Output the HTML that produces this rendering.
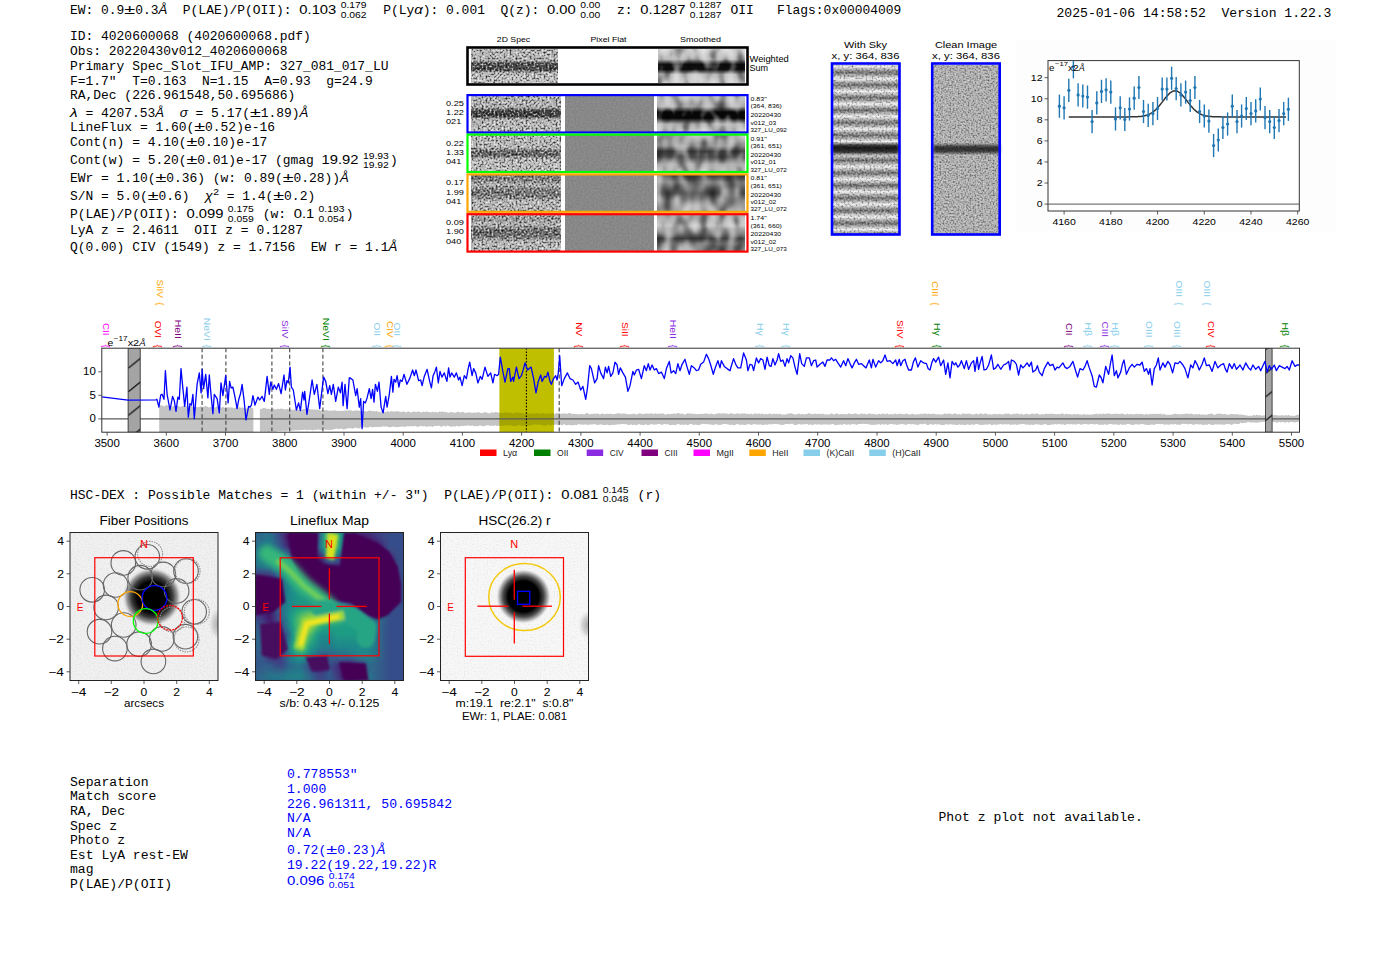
<!DOCTYPE html><html><head><meta charset="utf-8"><style>html,body{margin:0;padding:0;background:#fff;overflow:hidden}svg{position:absolute;left:0;top:0}</style></head><body>
<svg width="1400" height="953" viewBox="0 0 1400 953">
<rect width="1400" height="953" fill="#fff"/>
<text xml:space="preserve" x="70.00" y="14.00" font-family="'Liberation Mono', monospace" font-size="12.9" fill="#000" textLength="54.36" lengthAdjust="spacingAndGlyphs">EW: 0.9</text>
<text xml:space="preserve" x="124.36" y="14.00" font-family="'Liberation Sans', sans-serif" font-size="12.9" fill="#000" textLength="10.81" lengthAdjust="spacingAndGlyphs">±</text>
<text xml:space="preserve" x="135.17" y="14.00" font-family="'Liberation Mono', monospace" font-size="12.9" fill="#000" textLength="23.30" lengthAdjust="spacingAndGlyphs">0.3</text>
<text xml:space="preserve" x="158.47" y="14.00" font-family="'Liberation Sans', sans-serif" font-size="12.9" fill="#000" textLength="8.82" lengthAdjust="spacingAndGlyphs" font-style="italic">Å</text>
<text xml:space="preserve" x="167.30" y="14.00" font-family="'Liberation Mono', monospace" font-size="12.9" fill="#000" textLength="132.03" lengthAdjust="spacingAndGlyphs">  P(LAE)/P(OII): </text>
<text xml:space="preserve" x="299.33" y="14.00" font-family="'Liberation Sans', sans-serif" font-size="12.9" fill="#000" textLength="36.93" lengthAdjust="spacingAndGlyphs">0.103</text>
<text xml:space="preserve" x="340.66" y="8.40" font-family="'Liberation Sans', sans-serif" font-size="9.03" fill="#000" textLength="25.85" lengthAdjust="spacingAndGlyphs">0.179</text>
<text xml:space="preserve" x="340.66" y="17.90" font-family="'Liberation Sans', sans-serif" font-size="9.03" fill="#000" textLength="25.85" lengthAdjust="spacingAndGlyphs">0.062</text>
<text xml:space="preserve" x="367.71" y="14.00" font-family="'Liberation Mono', monospace" font-size="12.9" fill="#000" textLength="46.60" lengthAdjust="spacingAndGlyphs">  P(Ly</text>
<text xml:space="preserve" x="414.31" y="14.00" font-family="'Liberation Sans', sans-serif" font-size="12.9" fill="#000" textLength="8.50" lengthAdjust="spacingAndGlyphs" font-style="italic">α</text>
<text xml:space="preserve" x="422.81" y="14.00" font-family="'Liberation Mono', monospace" font-size="12.9" fill="#000" textLength="124.26" lengthAdjust="spacingAndGlyphs">): 0.001  Q(z): </text>
<text xml:space="preserve" x="547.07" y="14.00" font-family="'Liberation Sans', sans-serif" font-size="12.9" fill="#000" textLength="28.72" lengthAdjust="spacingAndGlyphs">0.00</text>
<text xml:space="preserve" x="580.20" y="8.40" font-family="'Liberation Sans', sans-serif" font-size="9.03" fill="#000" textLength="20.11" lengthAdjust="spacingAndGlyphs">0.00</text>
<text xml:space="preserve" x="580.20" y="17.90" font-family="'Liberation Sans', sans-serif" font-size="9.03" fill="#000" textLength="20.11" lengthAdjust="spacingAndGlyphs">0.00</text>
<text xml:space="preserve" x="601.50" y="14.00" font-family="'Liberation Mono', monospace" font-size="12.9" fill="#000" textLength="38.83" lengthAdjust="spacingAndGlyphs">  z: </text>
<text xml:space="preserve" x="640.33" y="14.00" font-family="'Liberation Sans', sans-serif" font-size="12.9" fill="#000" textLength="45.14" lengthAdjust="spacingAndGlyphs">0.1287</text>
<text xml:space="preserve" x="689.87" y="8.40" font-family="'Liberation Sans', sans-serif" font-size="9.03" fill="#000" textLength="31.60" lengthAdjust="spacingAndGlyphs">0.1287</text>
<text xml:space="preserve" x="689.87" y="17.90" font-family="'Liberation Sans', sans-serif" font-size="9.03" fill="#000" textLength="31.60" lengthAdjust="spacingAndGlyphs">0.1287</text>
<text xml:space="preserve" x="722.67" y="14.00" font-family="'Liberation Mono', monospace" font-size="12.9" fill="#000" textLength="178.63" lengthAdjust="spacingAndGlyphs"> OII   Flags:0x00004009</text>
<text xml:space="preserve" x="1056.50" y="16.80" font-family="'Liberation Mono', monospace" font-size="13.05" fill="#000" textLength="274.98" lengthAdjust="spacingAndGlyphs">2025-01-06 14:58:52  Version 1.22.3</text>
<text xml:space="preserve" x="70.00" y="40.00" font-family="'Liberation Mono', monospace" font-size="12.9" fill="#000" textLength="240.76" lengthAdjust="spacingAndGlyphs">ID: 4020600068 (4020600068.pdf)</text>
<text xml:space="preserve" x="70.00" y="54.50" font-family="'Liberation Mono', monospace" font-size="12.9" fill="#000" textLength="217.46" lengthAdjust="spacingAndGlyphs">Obs: 20220430v012_4020600068</text>
<text xml:space="preserve" x="70.00" y="69.50" font-family="'Liberation Mono', monospace" font-size="12.9" fill="#000" textLength="318.42" lengthAdjust="spacingAndGlyphs">Primary Spec_Slot_IFU_AMP: 327_081_017_LU</text>
<text xml:space="preserve" x="70.00" y="84.50" font-family="'Liberation Mono', monospace" font-size="12.9" fill="#000" textLength="302.89" lengthAdjust="spacingAndGlyphs">F=1.7"  T=0.163  N=1.15  A=0.93  g=24.9</text>
<text xml:space="preserve" x="70.00" y="99.30" font-family="'Liberation Mono', monospace" font-size="12.9" fill="#000" textLength="225.23" lengthAdjust="spacingAndGlyphs">RA,Dec (226.961548,50.695686)</text>
<text xml:space="preserve" x="70.00" y="116.50" font-family="'Liberation Sans', sans-serif" font-size="12.9" fill="#000" textLength="7.63" lengthAdjust="spacingAndGlyphs" font-style="italic">λ</text>
<text xml:space="preserve" x="77.63" y="116.50" font-family="'Liberation Mono', monospace" font-size="12.9" fill="#000" textLength="77.66" lengthAdjust="spacingAndGlyphs"> = 4207.53</text>
<text xml:space="preserve" x="155.30" y="116.50" font-family="'Liberation Sans', sans-serif" font-size="12.9" fill="#000" textLength="8.82" lengthAdjust="spacingAndGlyphs" font-style="italic">Å</text>
<text xml:space="preserve" x="179.66" y="116.50" font-family="'Liberation Sans', sans-serif" font-size="12.9" fill="#000" textLength="8.18" lengthAdjust="spacingAndGlyphs" font-style="italic">σ</text>
<text xml:space="preserve" x="187.83" y="116.50" font-family="'Liberation Mono', monospace" font-size="12.9" fill="#000" textLength="62.13" lengthAdjust="spacingAndGlyphs"> = 5.17(</text>
<text xml:space="preserve" x="249.96" y="116.50" font-family="'Liberation Sans', sans-serif" font-size="12.9" fill="#000" textLength="10.81" lengthAdjust="spacingAndGlyphs">±</text>
<text xml:space="preserve" x="260.77" y="116.50" font-family="'Liberation Mono', monospace" font-size="12.9" fill="#000" textLength="38.83" lengthAdjust="spacingAndGlyphs">1.89)</text>
<text xml:space="preserve" x="299.60" y="116.50" font-family="'Liberation Sans', sans-serif" font-size="12.9" fill="#000" textLength="8.82" lengthAdjust="spacingAndGlyphs" font-style="italic">Å</text>
<text xml:space="preserve" x="70.00" y="131.40" font-family="'Liberation Mono', monospace" font-size="12.9" fill="#000" textLength="124.26" lengthAdjust="spacingAndGlyphs">LineFlux = 1.60(</text>
<text xml:space="preserve" x="194.26" y="131.40" font-family="'Liberation Sans', sans-serif" font-size="12.9" fill="#000" textLength="10.81" lengthAdjust="spacingAndGlyphs">±</text>
<text xml:space="preserve" x="205.07" y="131.40" font-family="'Liberation Mono', monospace" font-size="12.9" fill="#000" textLength="69.90" lengthAdjust="spacingAndGlyphs">0.52)e-16</text>
<text xml:space="preserve" x="70.00" y="146.30" font-family="'Liberation Mono', monospace" font-size="12.9" fill="#000" textLength="116.50" lengthAdjust="spacingAndGlyphs">Cont(n) = 4.10(</text>
<text xml:space="preserve" x="186.50" y="146.30" font-family="'Liberation Sans', sans-serif" font-size="12.9" fill="#000" textLength="10.81" lengthAdjust="spacingAndGlyphs">±</text>
<text xml:space="preserve" x="197.30" y="146.30" font-family="'Liberation Mono', monospace" font-size="12.9" fill="#000" textLength="69.90" lengthAdjust="spacingAndGlyphs">0.10)e-17</text>
<text xml:space="preserve" x="70.00" y="164.30" font-family="'Liberation Mono', monospace" font-size="12.9" fill="#000" textLength="116.50" lengthAdjust="spacingAndGlyphs">Cont(w) = 5.20(</text>
<text xml:space="preserve" x="186.50" y="164.30" font-family="'Liberation Sans', sans-serif" font-size="12.9" fill="#000" textLength="10.81" lengthAdjust="spacingAndGlyphs">±</text>
<text xml:space="preserve" x="197.30" y="164.30" font-family="'Liberation Mono', monospace" font-size="12.9" fill="#000" textLength="124.26" lengthAdjust="spacingAndGlyphs">0.01)e-17 (gmag </text>
<text xml:space="preserve" x="321.57" y="164.30" font-family="'Liberation Sans', sans-serif" font-size="12.9" fill="#000" textLength="36.93" lengthAdjust="spacingAndGlyphs">19.92</text>
<text xml:space="preserve" x="362.90" y="158.70" font-family="'Liberation Sans', sans-serif" font-size="9.03" fill="#000" textLength="25.85" lengthAdjust="spacingAndGlyphs">19.93</text>
<text xml:space="preserve" x="362.90" y="168.20" font-family="'Liberation Sans', sans-serif" font-size="9.03" fill="#000" textLength="25.85" lengthAdjust="spacingAndGlyphs">19.92</text>
<text xml:space="preserve" x="389.95" y="164.30" font-family="'Liberation Mono', monospace" font-size="12.9" fill="#000" textLength="7.77" lengthAdjust="spacingAndGlyphs">)</text>
<text xml:space="preserve" x="70.00" y="182.30" font-family="'Liberation Mono', monospace" font-size="12.9" fill="#000" textLength="85.43" lengthAdjust="spacingAndGlyphs">EWr = 1.10(</text>
<text xml:space="preserve" x="155.43" y="182.30" font-family="'Liberation Sans', sans-serif" font-size="12.9" fill="#000" textLength="10.81" lengthAdjust="spacingAndGlyphs">±</text>
<text xml:space="preserve" x="166.24" y="182.30" font-family="'Liberation Mono', monospace" font-size="12.9" fill="#000" textLength="116.50" lengthAdjust="spacingAndGlyphs">0.36) (w: 0.89(</text>
<text xml:space="preserve" x="282.74" y="182.30" font-family="'Liberation Sans', sans-serif" font-size="12.9" fill="#000" textLength="10.81" lengthAdjust="spacingAndGlyphs">±</text>
<text xml:space="preserve" x="293.54" y="182.30" font-family="'Liberation Mono', monospace" font-size="12.9" fill="#000" textLength="46.60" lengthAdjust="spacingAndGlyphs">0.28))</text>
<text xml:space="preserve" x="340.14" y="182.30" font-family="'Liberation Sans', sans-serif" font-size="12.9" fill="#000" textLength="8.82" lengthAdjust="spacingAndGlyphs" font-style="italic">Å</text>
<text xml:space="preserve" x="70.00" y="199.80" font-family="'Liberation Mono', monospace" font-size="12.9" fill="#000" textLength="77.66" lengthAdjust="spacingAndGlyphs">S/N = 5.0(</text>
<text xml:space="preserve" x="147.66" y="199.80" font-family="'Liberation Sans', sans-serif" font-size="12.9" fill="#000" textLength="10.81" lengthAdjust="spacingAndGlyphs">±</text>
<text xml:space="preserve" x="158.47" y="199.80" font-family="'Liberation Mono', monospace" font-size="12.9" fill="#000" textLength="46.60" lengthAdjust="spacingAndGlyphs">0.6)  </text>
<text xml:space="preserve" x="205.07" y="199.80" font-family="'Liberation Sans', sans-serif" font-size="12.9" fill="#000" textLength="7.63" lengthAdjust="spacingAndGlyphs" font-style="italic">χ</text>
<text xml:space="preserve" x="213.21" y="194.60" font-family="'Liberation Sans', sans-serif" font-size="9.03" fill="#000" textLength="5.75" lengthAdjust="spacingAndGlyphs">2</text>
<text xml:space="preserve" x="218.95" y="199.80" font-family="'Liberation Mono', monospace" font-size="12.9" fill="#000" textLength="54.36" lengthAdjust="spacingAndGlyphs"> = 1.4(</text>
<text xml:space="preserve" x="273.32" y="199.80" font-family="'Liberation Sans', sans-serif" font-size="12.9" fill="#000" textLength="10.81" lengthAdjust="spacingAndGlyphs">±</text>
<text xml:space="preserve" x="284.12" y="199.80" font-family="'Liberation Mono', monospace" font-size="12.9" fill="#000" textLength="31.07" lengthAdjust="spacingAndGlyphs">0.2)</text>
<text xml:space="preserve" x="70.00" y="217.80" font-family="'Liberation Mono', monospace" font-size="12.9" fill="#000" textLength="116.50" lengthAdjust="spacingAndGlyphs">P(LAE)/P(OII): </text>
<text xml:space="preserve" x="186.50" y="217.80" font-family="'Liberation Sans', sans-serif" font-size="12.9" fill="#000" textLength="36.93" lengthAdjust="spacingAndGlyphs">0.099</text>
<text xml:space="preserve" x="227.83" y="212.20" font-family="'Liberation Sans', sans-serif" font-size="9.03" fill="#000" textLength="25.85" lengthAdjust="spacingAndGlyphs">0.175</text>
<text xml:space="preserve" x="227.83" y="221.70" font-family="'Liberation Sans', sans-serif" font-size="9.03" fill="#000" textLength="25.85" lengthAdjust="spacingAndGlyphs">0.059</text>
<text xml:space="preserve" x="254.88" y="217.80" font-family="'Liberation Mono', monospace" font-size="12.9" fill="#000" textLength="38.83" lengthAdjust="spacingAndGlyphs"> (w: </text>
<text xml:space="preserve" x="293.71" y="217.80" font-family="'Liberation Sans', sans-serif" font-size="12.9" fill="#000" textLength="20.52" lengthAdjust="spacingAndGlyphs">0.1</text>
<text xml:space="preserve" x="318.63" y="212.20" font-family="'Liberation Sans', sans-serif" font-size="9.03" fill="#000" textLength="25.85" lengthAdjust="spacingAndGlyphs">0.193</text>
<text xml:space="preserve" x="318.63" y="221.70" font-family="'Liberation Sans', sans-serif" font-size="9.03" fill="#000" textLength="25.85" lengthAdjust="spacingAndGlyphs">0.054</text>
<text xml:space="preserve" x="345.68" y="217.80" font-family="'Liberation Mono', monospace" font-size="12.9" fill="#000" textLength="7.77" lengthAdjust="spacingAndGlyphs">)</text>
<text xml:space="preserve" x="70.00" y="234.20" font-family="'Liberation Mono', monospace" font-size="12.9" fill="#000" textLength="232.99" lengthAdjust="spacingAndGlyphs">LyA z = 2.4611  OII z = 0.1287</text>
<text xml:space="preserve" x="70.00" y="250.90" font-family="'Liberation Mono', monospace" font-size="12.9" fill="#000" textLength="318.42" lengthAdjust="spacingAndGlyphs">Q(0.00) CIV (1549) z = 1.7156  EW r = 1.1</text>
<text xml:space="preserve" x="388.42" y="250.90" font-family="'Liberation Sans', sans-serif" font-size="12.9" fill="#000" textLength="8.82" lengthAdjust="spacingAndGlyphs" font-style="italic">Å</text>
<defs>
<filter id="nz1" x="0" y="0" width="1" height="1" color-interpolation-filters="sRGB">
 <feTurbulence type="fractalNoise" baseFrequency="0.5" numOctaves="1" seed="4" result="t"/>
 <feColorMatrix in="t" type="matrix" values="1.3 0 0 0 -0.15  1.3 0 0 0 -0.15  1.3 0 0 0 -0.15  0 0 0 0 1" result="g"/>
 <feBlend in="g" in2="SourceGraphic" mode="hard-light"/>
</filter>
<filter id="nz2" x="0" y="0" width="1" height="1" color-interpolation-filters="sRGB">
 <feTurbulence type="fractalNoise" baseFrequency="0.5" numOctaves="1" seed="9" result="t"/>
 <feColorMatrix in="t" type="matrix" values="1.0 0 0 0 0  1.0 0 0 0 0  1.0 0 0 0 0  0 0 0 0 1" result="g"/>
 <feBlend in="g" in2="SourceGraphic" mode="hard-light"/>
</filter>
<filter id="nz3" x="0" y="0" width="1" height="1" color-interpolation-filters="sRGB">
 <feTurbulence type="fractalNoise" baseFrequency="0.6" numOctaves="1" seed="17" result="t"/>
 <feColorMatrix in="t" type="matrix" values="0.12 0 0 0 0.44  0.12 0 0 0 0.44  0.12 0 0 0 0.44  0 0 0 0 1" result="g"/>
 <feBlend in="g" in2="SourceGraphic" mode="hard-light"/>
</filter>
<filter id="nz4" x="0" y="0" width="1" height="1" color-interpolation-filters="sRGB">
 <feTurbulence type="fractalNoise" baseFrequency="0.6" numOctaves="1" seed="31" result="t"/>
 <feColorMatrix in="t" type="matrix" values="0.75 0 0 0 0.125  0.75 0 0 0 0.125  0.75 0 0 0 0.125  0 0 0 0 1" result="g"/>
 <feBlend in="g" in2="SourceGraphic" mode="hard-light"/>
</filter>
<filter id="nz5" x="0" y="0" width="1" height="1" color-interpolation-filters="sRGB">
 <feTurbulence type="fractalNoise" baseFrequency="0.5" numOctaves="1" seed="37" result="t"/>
 <feColorMatrix in="t" type="matrix" values="0.65 0 0 0 0.175  0.65 0 0 0 0.175  0.65 0 0 0 0.175  0 0 0 0 1" result="g"/>
 <feBlend in="g" in2="SourceGraphic" mode="hard-light"/>
</filter>
<filter id="nzs" x="0" y="0" width="1" height="1" color-interpolation-filters="sRGB">
 <feTurbulence type="fractalNoise" baseFrequency="0.11 0.07" numOctaves="1" seed="51" result="t"/>
 <feColorMatrix in="t" type="matrix" values="0.9 0 0 0 0.05  0.9 0 0 0 0.05  0.9 0 0 0 0.05  0 0 0 0 1" result="g"/>
 <feBlend in="g" in2="SourceGraphic" mode="hard-light"/>
</filter>
<filter id="bl1" x="-0.2" y="-0.2" width="1.4" height="1.4"><feGaussianBlur stdDeviation="1.5"/></filter>
<filter id="bl05" x="-0.1" y="-0.1" width="1.2" height="1.2"><feGaussianBlur stdDeviation="0.9"/></filter>
<filter id="bl2" x="-0.2" y="-0.2" width="1.4" height="1.4"><feGaussianBlur stdDeviation="2.5"/></filter>
<pattern id="hatch" patternUnits="userSpaceOnUse" width="30" height="23.6" patternTransform="translate(128.2,344.7)">
 <rect width="30" height="23.6" fill="#a4a4a4"/>
 <path d="M-1,24.4 L14,12.3" stroke="#000" stroke-width="1.1"/>
</pattern>
<pattern id="hatch2" patternUnits="userSpaceOnUse" width="30" height="23.6" patternTransform="translate(1265.3,350)">
 <rect width="30" height="23.6" fill="#a4a4a4"/>
 <path d="M-1,24.4 L14,12.3" stroke="#000" stroke-width="1.1"/>
</pattern>
</defs>
<defs><linearGradient id="sp_w" x1="0" y1="0" x2="0" y2="1"><stop offset="0" stop-color="#b8b8b8"/><stop offset="0.34" stop-color="#b0b0b0"/><stop offset="0.42" stop-color="#4a4a4a"/><stop offset="0.62" stop-color="#4a4a4a"/><stop offset="0.7" stop-color="#b8b8b8"/><stop offset="1" stop-color="#c0c0c0"/></linearGradient></defs>
<defs><linearGradient id="sp_b" x1="0" y1="0" x2="0" y2="1"><stop offset="0" stop-color="#b0b0b0"/><stop offset="0.32" stop-color="#b0b0b0"/><stop offset="0.42" stop-color="#404040"/><stop offset="0.56" stop-color="#404040"/><stop offset="0.66" stop-color="#b4b4b4"/><stop offset="1" stop-color="#b8b8b8"/></linearGradient></defs>
<defs><linearGradient id="sp_g" x1="0" y1="0" x2="0" y2="1"><stop offset="0" stop-color="#b8b8b8"/><stop offset="0.36" stop-color="#b4b4b4"/><stop offset="0.44" stop-color="#606060"/><stop offset="0.56" stop-color="#686868"/><stop offset="0.66" stop-color="#b8b8b8"/><stop offset="1" stop-color="#bcbcbc"/></linearGradient></defs>
<defs><linearGradient id="sp_o" x1="0" y1="0" x2="0" y2="1"><stop offset="0" stop-color="#707070"/><stop offset="0.14" stop-color="#808080"/><stop offset="0.28" stop-color="#b4b4b4"/><stop offset="0.42" stop-color="#787878"/><stop offset="0.58" stop-color="#787878"/><stop offset="0.72" stop-color="#b8b8b8"/><stop offset="1" stop-color="#b0b0b0"/></linearGradient></defs>
<defs><linearGradient id="sp_r" x1="0" y1="0" x2="0" y2="1"><stop offset="0" stop-color="#a8a8a8"/><stop offset="0.14" stop-color="#989898"/><stop offset="0.28" stop-color="#b8b8b8"/><stop offset="0.42" stop-color="#686868"/><stop offset="0.6" stop-color="#707070"/><stop offset="0.74" stop-color="#b8b8b8"/><stop offset="1" stop-color="#b0b0b0"/></linearGradient></defs>
<defs><linearGradient id="sm_w" x1="0" y1="0" x2="0" y2="1"><stop offset="0" stop-color="#d0d0d0"/><stop offset="0.3" stop-color="#b8b8b8"/><stop offset="0.45" stop-color="#101010"/><stop offset="0.6" stop-color="#101010"/><stop offset="0.75" stop-color="#b8b8b8"/><stop offset="1" stop-color="#c8c8c8"/></linearGradient></defs>
<defs><linearGradient id="sm_b" x1="0" y1="0" x2="0" y2="1"><stop offset="0" stop-color="#c0c0c0"/><stop offset="0.3" stop-color="#a8a8a8"/><stop offset="0.45" stop-color="#080808"/><stop offset="0.62" stop-color="#080808"/><stop offset="0.78" stop-color="#b0b0b0"/><stop offset="1" stop-color="#c0c0c0"/></linearGradient></defs>
<defs><linearGradient id="sm_g" x1="0" y1="0" x2="0" y2="1"><stop offset="0" stop-color="#b0b0b0"/><stop offset="0.3" stop-color="#989898"/><stop offset="0.45" stop-color="#404040"/><stop offset="0.6" stop-color="#505050"/><stop offset="0.8" stop-color="#a8a8a8"/><stop offset="1" stop-color="#b8b8b8"/></linearGradient></defs>
<defs><linearGradient id="sm_o" x1="0" y1="0" x2="0" y2="1"><stop offset="0" stop-color="#404040"/><stop offset="0.2" stop-color="#808080"/><stop offset="0.5" stop-color="#606060"/><stop offset="0.7" stop-color="#888888"/><stop offset="1" stop-color="#a8a8a8"/></linearGradient></defs>
<defs><linearGradient id="sm_r" x1="0" y1="0" x2="0" y2="1"><stop offset="0" stop-color="#a0a0a0"/><stop offset="0.3" stop-color="#c0c0c0"/><stop offset="0.5" stop-color="#808080"/><stop offset="0.65" stop-color="#404040"/><stop offset="0.8" stop-color="#808080"/><stop offset="1" stop-color="#909090"/></linearGradient></defs>
<defs><linearGradient id="mod_w" x1="0" y1="0" x2="1" y2="0"><stop offset="0.000" stop-color="#000" stop-opacity="0.13"/><stop offset="0.111" stop-color="#fff" stop-opacity="0.14"/><stop offset="0.222" stop-color="#000" stop-opacity="0.25"/><stop offset="0.333" stop-color="#fff" stop-opacity="0.19"/><stop offset="0.444" stop-color="#000" stop-opacity="0.25"/><stop offset="0.556" stop-color="#fff" stop-opacity="0.14"/><stop offset="0.667" stop-color="#000" stop-opacity="0.26"/><stop offset="0.778" stop-color="#fff" stop-opacity="0.16"/><stop offset="0.889" stop-color="#000" stop-opacity="0.12"/><stop offset="1.000" stop-color="#fff" stop-opacity="0.14"/></linearGradient></defs>
<defs><linearGradient id="mod_b" x1="0" y1="0" x2="1" y2="0"><stop offset="0.000" stop-color="#000" stop-opacity="0.22"/><stop offset="0.111" stop-color="#fff" stop-opacity="0.09"/><stop offset="0.222" stop-color="#000" stop-opacity="0.29"/><stop offset="0.333" stop-color="#fff" stop-opacity="0.23"/><stop offset="0.444" stop-color="#000" stop-opacity="0.19"/><stop offset="0.556" stop-color="#fff" stop-opacity="0.18"/><stop offset="0.667" stop-color="#000" stop-opacity="0.14"/><stop offset="0.778" stop-color="#fff" stop-opacity="0.09"/><stop offset="0.889" stop-color="#000" stop-opacity="0.16"/><stop offset="1.000" stop-color="#fff" stop-opacity="0.19"/></linearGradient></defs>
<defs><linearGradient id="mod_g" x1="0" y1="0" x2="1" y2="0"><stop offset="0.000" stop-color="#000" stop-opacity="0.13"/><stop offset="0.111" stop-color="#fff" stop-opacity="0.17"/><stop offset="0.222" stop-color="#000" stop-opacity="0.13"/><stop offset="0.333" stop-color="#fff" stop-opacity="0.19"/><stop offset="0.444" stop-color="#000" stop-opacity="0.22"/><stop offset="0.556" stop-color="#fff" stop-opacity="0.13"/><stop offset="0.667" stop-color="#000" stop-opacity="0.22"/><stop offset="0.778" stop-color="#fff" stop-opacity="0.16"/><stop offset="0.889" stop-color="#000" stop-opacity="0.11"/><stop offset="1.000" stop-color="#fff" stop-opacity="0.16"/></linearGradient></defs>
<defs><linearGradient id="mod_o" x1="0" y1="0" x2="1" y2="0"><stop offset="0.000" stop-color="#000" stop-opacity="0.30"/><stop offset="0.111" stop-color="#fff" stop-opacity="0.14"/><stop offset="0.222" stop-color="#000" stop-opacity="0.24"/><stop offset="0.333" stop-color="#fff" stop-opacity="0.20"/><stop offset="0.444" stop-color="#000" stop-opacity="0.14"/><stop offset="0.556" stop-color="#fff" stop-opacity="0.07"/><stop offset="0.667" stop-color="#000" stop-opacity="0.22"/><stop offset="0.778" stop-color="#fff" stop-opacity="0.07"/><stop offset="0.889" stop-color="#000" stop-opacity="0.18"/><stop offset="1.000" stop-color="#fff" stop-opacity="0.23"/></linearGradient></defs>
<defs><linearGradient id="mod_r" x1="0" y1="0" x2="1" y2="0"><stop offset="0.000" stop-color="#000" stop-opacity="0.29"/><stop offset="0.111" stop-color="#fff" stop-opacity="0.22"/><stop offset="0.222" stop-color="#000" stop-opacity="0.25"/><stop offset="0.333" stop-color="#fff" stop-opacity="0.10"/><stop offset="0.444" stop-color="#000" stop-opacity="0.17"/><stop offset="0.556" stop-color="#fff" stop-opacity="0.19"/><stop offset="0.667" stop-color="#000" stop-opacity="0.26"/><stop offset="0.778" stop-color="#fff" stop-opacity="0.05"/><stop offset="0.889" stop-color="#000" stop-opacity="0.13"/><stop offset="1.000" stop-color="#fff" stop-opacity="0.23"/></linearGradient></defs>
<rect x="467.5" y="47.5" width="280" height="37" fill="#fff" stroke="#000" stroke-width="2.6"/>
<rect x="471" y="49" width="87" height="34" fill="url(#sp_w)" filter="url(#nz1)"/>
<rect x="658" y="49" width="87" height="34" fill="url(#sm_w)" filter="url(#nzs)"/>
<text xml:space="preserve" x="513.50" y="41.50" font-family="'Liberation Sans', sans-serif" font-size="8" fill="#000" text-anchor="middle" textLength="33.27" lengthAdjust="spacingAndGlyphs">2D Spec</text>
<text xml:space="preserve" x="608.50" y="41.50" font-family="'Liberation Sans', sans-serif" font-size="8" fill="#000" text-anchor="middle" textLength="35.91" lengthAdjust="spacingAndGlyphs">Pixel Flat</text>
<text xml:space="preserve" x="700.50" y="41.50" font-family="'Liberation Sans', sans-serif" font-size="8" fill="#000" text-anchor="middle" textLength="40.87" lengthAdjust="spacingAndGlyphs">Smoothed</text>
<text xml:space="preserve" x="749.50" y="61.50" font-family="'Liberation Sans', sans-serif" font-size="8.3" fill="#000" textLength="39.29" lengthAdjust="spacingAndGlyphs">Weighted</text>
<text xml:space="preserve" x="749.50" y="70.50" font-family="'Liberation Sans', sans-serif" font-size="8.3" fill="#000" textLength="18.61" lengthAdjust="spacingAndGlyphs">Sum</text>
<rect x="471" y="95.5" width="90" height="36.6" fill="url(#sp_b)" filter="url(#nz1)"/>
<rect x="565" y="95.5" width="89" height="36.6" fill="#888" filter="url(#nz3)"/>
<rect x="657" y="95.5" width="88" height="36.6" fill="url(#sm_b)" filter="url(#nzs)"/>
<rect x="467.5" y="95.1" width="280" height="37.4" fill="none" stroke="#0000ff" stroke-width="2.2"/>
<text xml:space="preserve" x="446.00" y="106.00" font-family="'Liberation Sans', sans-serif" font-size="8" fill="#000" textLength="17.81" lengthAdjust="spacingAndGlyphs">0.25</text>
<text xml:space="preserve" x="446.00" y="115.20" font-family="'Liberation Sans', sans-serif" font-size="8" fill="#000" textLength="17.81" lengthAdjust="spacingAndGlyphs">1.22</text>
<text xml:space="preserve" x="446.00" y="124.40" font-family="'Liberation Sans', sans-serif" font-size="8" fill="#000" textLength="15.27" lengthAdjust="spacingAndGlyphs">021</text>
<text xml:space="preserve" x="750.50" y="101.00" font-family="'Liberation Sans', sans-serif" font-size="6" fill="#000" textLength="16.12" lengthAdjust="spacingAndGlyphs">0.83"</text>
<text xml:space="preserve" x="750.50" y="108.40" font-family="'Liberation Sans', sans-serif" font-size="6" fill="#000" textLength="31.40" lengthAdjust="spacingAndGlyphs">(364, 836)</text>
<text xml:space="preserve" x="750.50" y="117.30" font-family="'Liberation Sans', sans-serif" font-size="6" fill="#000" textLength="30.54" lengthAdjust="spacingAndGlyphs">20220430</text>
<text xml:space="preserve" x="750.50" y="124.70" font-family="'Liberation Sans', sans-serif" font-size="6" fill="#000" textLength="25.64" lengthAdjust="spacingAndGlyphs">v012_03</text>
<text xml:space="preserve" x="750.50" y="132.10" font-family="'Liberation Sans', sans-serif" font-size="6" fill="#000" textLength="36.34" lengthAdjust="spacingAndGlyphs">327_LU_092</text>
<rect x="471" y="135.0" width="90" height="36.6" fill="url(#sp_g)" filter="url(#nz1)"/>
<rect x="565" y="135.0" width="89" height="36.6" fill="#888" filter="url(#nz3)"/>
<rect x="657" y="135.0" width="88" height="36.6" fill="url(#sm_g)" filter="url(#nzs)"/>
<rect x="467.5" y="134.6" width="280" height="37.4" fill="none" stroke="#00ff00" stroke-width="2.2"/>
<text xml:space="preserve" x="446.00" y="145.50" font-family="'Liberation Sans', sans-serif" font-size="8" fill="#000" textLength="17.81" lengthAdjust="spacingAndGlyphs">0.22</text>
<text xml:space="preserve" x="446.00" y="154.70" font-family="'Liberation Sans', sans-serif" font-size="8" fill="#000" textLength="17.81" lengthAdjust="spacingAndGlyphs">1.33</text>
<text xml:space="preserve" x="446.00" y="163.90" font-family="'Liberation Sans', sans-serif" font-size="8" fill="#000" textLength="15.27" lengthAdjust="spacingAndGlyphs">041</text>
<text xml:space="preserve" x="750.50" y="140.50" font-family="'Liberation Sans', sans-serif" font-size="6" fill="#000" textLength="16.12" lengthAdjust="spacingAndGlyphs">0.91"</text>
<text xml:space="preserve" x="750.50" y="147.90" font-family="'Liberation Sans', sans-serif" font-size="6" fill="#000" textLength="31.40" lengthAdjust="spacingAndGlyphs">(361, 651)</text>
<text xml:space="preserve" x="750.50" y="156.80" font-family="'Liberation Sans', sans-serif" font-size="6" fill="#000" textLength="30.54" lengthAdjust="spacingAndGlyphs">20220430</text>
<text xml:space="preserve" x="750.50" y="164.20" font-family="'Liberation Sans', sans-serif" font-size="6" fill="#000" textLength="25.64" lengthAdjust="spacingAndGlyphs">v012_01</text>
<text xml:space="preserve" x="750.50" y="171.60" font-family="'Liberation Sans', sans-serif" font-size="6" fill="#000" textLength="36.34" lengthAdjust="spacingAndGlyphs">327_LU_072</text>
<rect x="471" y="174.8" width="90" height="36.6" fill="url(#sp_o)" filter="url(#nz1)"/>
<rect x="565" y="174.8" width="89" height="36.6" fill="#888" filter="url(#nz3)"/>
<rect x="657" y="174.8" width="88" height="36.6" fill="url(#sm_o)" filter="url(#nzs)"/>
<rect x="467.5" y="174.4" width="280" height="37.4" fill="none" stroke="#ffa500" stroke-width="2.2"/>
<text xml:space="preserve" x="446.00" y="185.30" font-family="'Liberation Sans', sans-serif" font-size="8" fill="#000" textLength="17.81" lengthAdjust="spacingAndGlyphs">0.17</text>
<text xml:space="preserve" x="446.00" y="194.50" font-family="'Liberation Sans', sans-serif" font-size="8" fill="#000" textLength="17.81" lengthAdjust="spacingAndGlyphs">1.99</text>
<text xml:space="preserve" x="446.00" y="203.70" font-family="'Liberation Sans', sans-serif" font-size="8" fill="#000" textLength="15.27" lengthAdjust="spacingAndGlyphs">041</text>
<text xml:space="preserve" x="750.50" y="180.30" font-family="'Liberation Sans', sans-serif" font-size="6" fill="#000" textLength="16.12" lengthAdjust="spacingAndGlyphs">0.81"</text>
<text xml:space="preserve" x="750.50" y="187.70" font-family="'Liberation Sans', sans-serif" font-size="6" fill="#000" textLength="31.40" lengthAdjust="spacingAndGlyphs">(361, 651)</text>
<text xml:space="preserve" x="750.50" y="196.60" font-family="'Liberation Sans', sans-serif" font-size="6" fill="#000" textLength="30.54" lengthAdjust="spacingAndGlyphs">20220430</text>
<text xml:space="preserve" x="750.50" y="204.00" font-family="'Liberation Sans', sans-serif" font-size="6" fill="#000" textLength="25.64" lengthAdjust="spacingAndGlyphs">v012_02</text>
<text xml:space="preserve" x="750.50" y="211.40" font-family="'Liberation Sans', sans-serif" font-size="6" fill="#000" textLength="36.34" lengthAdjust="spacingAndGlyphs">327_LU_072</text>
<rect x="471" y="214.6" width="90" height="36.6" fill="url(#sp_r)" filter="url(#nz1)"/>
<rect x="565" y="214.6" width="89" height="36.6" fill="#888" filter="url(#nz3)"/>
<rect x="657" y="214.6" width="88" height="36.6" fill="url(#sm_r)" filter="url(#nzs)"/>
<rect x="467.5" y="214.2" width="280" height="37.4" fill="none" stroke="#ff0000" stroke-width="2.2"/>
<text xml:space="preserve" x="446.00" y="225.10" font-family="'Liberation Sans', sans-serif" font-size="8" fill="#000" textLength="17.81" lengthAdjust="spacingAndGlyphs">0.09</text>
<text xml:space="preserve" x="446.00" y="234.30" font-family="'Liberation Sans', sans-serif" font-size="8" fill="#000" textLength="17.81" lengthAdjust="spacingAndGlyphs">1.90</text>
<text xml:space="preserve" x="446.00" y="243.50" font-family="'Liberation Sans', sans-serif" font-size="8" fill="#000" textLength="15.27" lengthAdjust="spacingAndGlyphs">040</text>
<text xml:space="preserve" x="750.50" y="220.10" font-family="'Liberation Sans', sans-serif" font-size="6" fill="#000" textLength="16.12" lengthAdjust="spacingAndGlyphs">1.74"</text>
<text xml:space="preserve" x="750.50" y="227.50" font-family="'Liberation Sans', sans-serif" font-size="6" fill="#000" textLength="31.40" lengthAdjust="spacingAndGlyphs">(361, 660)</text>
<text xml:space="preserve" x="750.50" y="236.40" font-family="'Liberation Sans', sans-serif" font-size="6" fill="#000" textLength="30.54" lengthAdjust="spacingAndGlyphs">20220430</text>
<text xml:space="preserve" x="750.50" y="243.80" font-family="'Liberation Sans', sans-serif" font-size="6" fill="#000" textLength="25.64" lengthAdjust="spacingAndGlyphs">v012_02</text>
<text xml:space="preserve" x="750.50" y="251.20" font-family="'Liberation Sans', sans-serif" font-size="6" fill="#000" textLength="36.34" lengthAdjust="spacingAndGlyphs">327_LU_073</text>
<text xml:space="preserve" x="865.50" y="47.50" font-family="'Liberation Sans', sans-serif" font-size="9.9" fill="#000" text-anchor="middle" textLength="43.15" lengthAdjust="spacingAndGlyphs">With Sky</text>
<text xml:space="preserve" x="865.50" y="58.80" font-family="'Liberation Sans', sans-serif" font-size="9.9" fill="#000" text-anchor="middle" textLength="67.86" lengthAdjust="spacingAndGlyphs">x, y: 364, 836</text>
<text xml:space="preserve" x="966.00" y="47.50" font-family="'Liberation Sans', sans-serif" font-size="9.9" fill="#000" text-anchor="middle" textLength="62.25" lengthAdjust="spacingAndGlyphs">Clean Image</text>
<text xml:space="preserve" x="966.00" y="58.80" font-family="'Liberation Sans', sans-serif" font-size="9.9" fill="#000" text-anchor="middle" textLength="67.86" lengthAdjust="spacingAndGlyphs">x, y: 364, 836</text>
<defs><linearGradient id="sky" x1="0" y1="63" x2="0" y2="235" gradientUnits="userSpaceOnUse"><stop offset="0.0000" stop-color="#f0f0f0"/><stop offset="0.0000" stop-color="#6c6c6c"/><stop offset="0.0192" stop-color="#f0f0f0"/><stop offset="0.0557" stop-color="#6c6c6c"/><stop offset="0.0922" stop-color="#f0f0f0"/><stop offset="0.1286" stop-color="#6c6c6c"/><stop offset="0.1651" stop-color="#f0f0f0"/><stop offset="0.2016" stop-color="#6c6c6c"/><stop offset="0.2381" stop-color="#f0f0f0"/><stop offset="0.2746" stop-color="#6c6c6c"/><stop offset="0.3110" stop-color="#f0f0f0"/><stop offset="0.3475" stop-color="#6c6c6c"/><stop offset="0.3840" stop-color="#f0f0f0"/><stop offset="0.4205" stop-color="#6c6c6c"/><stop offset="0.4570" stop-color="#f0f0f0"/><stop offset="0.4935" stop-color="#6c6c6c"/><stop offset="0.5299" stop-color="#f0f0f0"/><stop offset="0.5664" stop-color="#6c6c6c"/><stop offset="0.6029" stop-color="#f0f0f0"/><stop offset="0.6394" stop-color="#6c6c6c"/><stop offset="0.6759" stop-color="#f0f0f0"/><stop offset="0.7124" stop-color="#6c6c6c"/><stop offset="0.7488" stop-color="#f0f0f0"/><stop offset="0.7853" stop-color="#6c6c6c"/><stop offset="0.8218" stop-color="#f0f0f0"/><stop offset="0.8583" stop-color="#6c6c6c"/><stop offset="0.8948" stop-color="#f0f0f0"/><stop offset="0.9313" stop-color="#6c6c6c"/><stop offset="0.9677" stop-color="#f0f0f0"/><stop offset="1.0000" stop-color="#6c6c6c"/></linearGradient></defs>
<rect x="832" y="65" width="67" height="169" fill="url(#sky)" filter="url(#nz5)"/>
<rect x="832" y="144" width="67" height="10" fill="#000" opacity="0.75" filter="url(#bl1)"/>
<rect x="832" y="63.5" width="67.5" height="171" fill="none" stroke="#0000ff" stroke-width="2.6"/>
<rect x="933" y="65" width="67" height="169" fill="#b0b0b0" filter="url(#nz4)"/>
<rect x="933" y="145" width="67" height="8" fill="#000" opacity="0.7" filter="url(#bl1)"/>
<rect x="932.2" y="63.5" width="67.5" height="171" fill="none" stroke="#0000ff" stroke-width="2.6"/>
<rect x="1016" y="40" width="320" height="192" fill="#fdfdfd"/>
<rect x="1048.0" y="60.6" width="251.29999999999995" height="150.4" fill="#fff" stroke="#333" stroke-width="1"/>
<line x1="1048.0" y1="204.1" x2="1299.3" y2="204.1" stroke="#555" stroke-width="1"/>
<line x1="1044.5" y1="204.1" x2="1048.0" y2="204.1" stroke="#333" stroke-width="0.8"/>
<text xml:space="preserve" x="1042.50" y="207.40" font-family="'Liberation Sans', sans-serif" font-size="9.2" fill="#000" text-anchor="end" textLength="5.85" lengthAdjust="spacingAndGlyphs">0</text>
<line x1="1044.5" y1="183.03" x2="1048.0" y2="183.03" stroke="#333" stroke-width="0.8"/>
<text xml:space="preserve" x="1042.50" y="186.33" font-family="'Liberation Sans', sans-serif" font-size="9.2" fill="#000" text-anchor="end" textLength="5.85" lengthAdjust="spacingAndGlyphs">2</text>
<line x1="1044.5" y1="161.95999999999998" x2="1048.0" y2="161.95999999999998" stroke="#333" stroke-width="0.8"/>
<text xml:space="preserve" x="1042.50" y="165.26" font-family="'Liberation Sans', sans-serif" font-size="9.2" fill="#000" text-anchor="end" textLength="5.85" lengthAdjust="spacingAndGlyphs">4</text>
<line x1="1044.5" y1="140.89" x2="1048.0" y2="140.89" stroke="#333" stroke-width="0.8"/>
<text xml:space="preserve" x="1042.50" y="144.19" font-family="'Liberation Sans', sans-serif" font-size="9.2" fill="#000" text-anchor="end" textLength="5.85" lengthAdjust="spacingAndGlyphs">6</text>
<line x1="1044.5" y1="119.82" x2="1048.0" y2="119.82" stroke="#333" stroke-width="0.8"/>
<text xml:space="preserve" x="1042.50" y="123.12" font-family="'Liberation Sans', sans-serif" font-size="9.2" fill="#000" text-anchor="end" textLength="5.85" lengthAdjust="spacingAndGlyphs">8</text>
<line x1="1044.5" y1="98.75" x2="1048.0" y2="98.75" stroke="#333" stroke-width="0.8"/>
<text xml:space="preserve" x="1042.50" y="102.05" font-family="'Liberation Sans', sans-serif" font-size="9.2" fill="#000" text-anchor="end" textLength="11.71" lengthAdjust="spacingAndGlyphs">10</text>
<line x1="1044.5" y1="77.67999999999999" x2="1048.0" y2="77.67999999999999" stroke="#333" stroke-width="0.8"/>
<text xml:space="preserve" x="1042.50" y="80.98" font-family="'Liberation Sans', sans-serif" font-size="9.2" fill="#000" text-anchor="end" textLength="11.71" lengthAdjust="spacingAndGlyphs">12</text>
<line x1="1064.1" y1="211.0" x2="1064.1" y2="214.5" stroke="#333" stroke-width="0.8"/>
<text xml:space="preserve" x="1064.10" y="225.00" font-family="'Liberation Sans', sans-serif" font-size="9.2" fill="#000" text-anchor="middle" textLength="23.41" lengthAdjust="spacingAndGlyphs">4160</text>
<line x1="1110.82" y1="211.0" x2="1110.82" y2="214.5" stroke="#333" stroke-width="0.8"/>
<text xml:space="preserve" x="1110.82" y="225.00" font-family="'Liberation Sans', sans-serif" font-size="9.2" fill="#000" text-anchor="middle" textLength="23.41" lengthAdjust="spacingAndGlyphs">4180</text>
<line x1="1157.54" y1="211.0" x2="1157.54" y2="214.5" stroke="#333" stroke-width="0.8"/>
<text xml:space="preserve" x="1157.54" y="225.00" font-family="'Liberation Sans', sans-serif" font-size="9.2" fill="#000" text-anchor="middle" textLength="23.41" lengthAdjust="spacingAndGlyphs">4200</text>
<line x1="1204.26" y1="211.0" x2="1204.26" y2="214.5" stroke="#333" stroke-width="0.8"/>
<text xml:space="preserve" x="1204.26" y="225.00" font-family="'Liberation Sans', sans-serif" font-size="9.2" fill="#000" text-anchor="middle" textLength="23.41" lengthAdjust="spacingAndGlyphs">4220</text>
<line x1="1250.98" y1="211.0" x2="1250.98" y2="214.5" stroke="#333" stroke-width="0.8"/>
<text xml:space="preserve" x="1250.98" y="225.00" font-family="'Liberation Sans', sans-serif" font-size="9.2" fill="#000" text-anchor="middle" textLength="23.41" lengthAdjust="spacingAndGlyphs">4240</text>
<line x1="1297.6999999999998" y1="211.0" x2="1297.6999999999998" y2="214.5" stroke="#333" stroke-width="0.8"/>
<text xml:space="preserve" x="1297.70" y="225.00" font-family="'Liberation Sans', sans-serif" font-size="9.2" fill="#000" text-anchor="middle" textLength="23.41" lengthAdjust="spacingAndGlyphs">4260</text>
<polyline points="1068.8,116.9 1069.4,116.9 1069.9,116.9 1070.5,116.9 1071.1,116.9 1071.7,116.9 1072.3,116.9 1072.9,116.9 1073.4,116.9 1074.0,116.9 1074.6,116.9 1075.2,116.9 1075.8,116.9 1076.4,116.9 1076.9,116.9 1077.5,116.9 1078.1,116.9 1078.7,116.9 1079.3,116.9 1079.9,116.9 1080.5,116.9 1081.0,116.9 1081.6,116.9 1082.2,116.9 1082.8,116.9 1083.4,116.9 1084.0,116.9 1084.5,116.9 1085.1,116.9 1085.7,116.9 1086.3,116.9 1086.9,116.9 1087.5,116.9 1088.0,116.9 1088.6,116.9 1089.2,116.9 1089.8,116.9 1090.4,116.9 1091.0,116.9 1091.5,116.9 1092.1,116.9 1092.7,116.9 1093.3,116.9 1093.9,116.9 1094.5,116.9 1095.1,116.9 1095.6,116.9 1096.2,116.9 1096.8,116.9 1097.4,116.9 1098.0,116.9 1098.6,116.9 1099.1,116.9 1099.7,116.9 1100.3,116.9 1100.9,116.9 1101.5,116.9 1102.1,116.9 1102.6,116.9 1103.2,116.9 1103.8,116.9 1104.4,116.9 1105.0,116.9 1105.6,116.9 1106.1,116.9 1106.7,116.9 1107.3,116.9 1107.9,116.9 1108.5,116.9 1109.1,116.9 1109.7,116.9 1110.2,116.9 1110.8,116.9 1111.4,116.9 1112.0,116.9 1112.6,116.9 1113.2,116.9 1113.7,116.9 1114.3,116.9 1114.9,116.9 1115.5,116.9 1116.1,116.9 1116.7,116.9 1117.2,116.9 1117.8,116.9 1118.4,116.9 1119.0,116.9 1119.6,116.9 1120.2,116.9 1120.7,116.9 1121.3,116.9 1121.9,116.9 1122.5,116.9 1123.1,116.9 1123.7,116.9 1124.3,116.9 1124.8,116.9 1125.4,116.9 1126.0,116.9 1126.6,116.9 1127.2,116.9 1127.8,116.9 1128.3,116.9 1128.9,116.9 1129.5,116.8 1130.1,116.8 1130.7,116.8 1131.3,116.8 1131.8,116.8 1132.4,116.8 1133.0,116.8 1133.6,116.8 1134.2,116.8 1134.8,116.8 1135.3,116.8 1135.9,116.7 1136.5,116.7 1137.1,116.7 1137.7,116.7 1138.3,116.6 1138.9,116.6 1139.4,116.5 1140.0,116.5 1140.6,116.4 1141.2,116.4 1141.8,116.3 1142.4,116.2 1142.9,116.1 1143.5,116.0 1144.1,115.9 1144.7,115.8 1145.3,115.6 1145.9,115.5 1146.4,115.3 1147.0,115.1 1147.6,114.9 1148.2,114.7 1148.8,114.4 1149.4,114.2 1149.9,113.9 1150.5,113.6 1151.1,113.2 1151.7,112.9 1152.3,112.5 1152.9,112.1 1153.5,111.6 1154.0,111.2 1154.6,110.7 1155.2,110.1 1155.8,109.6 1156.4,109.0 1157.0,108.4 1157.5,107.8 1158.1,107.1 1158.7,106.5 1159.3,105.8 1159.9,105.1 1160.5,104.3 1161.0,103.6 1161.6,102.9 1162.2,102.1 1162.8,101.3 1163.4,100.6 1164.0,99.8 1164.5,99.1 1165.1,98.3 1165.7,97.6 1166.3,96.9 1166.9,96.2 1167.5,95.5 1168.1,94.9 1168.6,94.3 1169.2,93.7 1169.8,93.2 1170.4,92.7 1171.0,92.3 1171.6,91.9 1172.1,91.6 1172.7,91.3 1173.3,91.1 1173.9,91.0 1174.5,90.9 1175.1,90.8 1175.6,90.9 1176.2,91.0 1176.8,91.1 1177.4,91.3 1178.0,91.6 1178.6,91.9 1179.1,92.3 1179.7,92.7 1180.3,93.2 1180.9,93.7 1181.5,94.3 1182.1,94.9 1182.7,95.5 1183.2,96.2 1183.8,96.9 1184.4,97.6 1185.0,98.3 1185.6,99.1 1186.2,99.8 1186.7,100.6 1187.3,101.3 1187.9,102.1 1188.5,102.9 1189.1,103.6 1189.7,104.3 1190.2,105.1 1190.8,105.8 1191.4,106.5 1192.0,107.1 1192.6,107.8 1193.2,108.4 1193.7,109.0 1194.3,109.6 1194.9,110.1 1195.5,110.7 1196.1,111.2 1196.7,111.6 1197.3,112.1 1197.8,112.5 1198.4,112.9 1199.0,113.2 1199.6,113.6 1200.2,113.9 1200.8,114.2 1201.3,114.4 1201.9,114.7 1202.5,114.9 1203.1,115.1 1203.7,115.3 1204.3,115.5 1204.8,115.6 1205.4,115.8 1206.0,115.9 1206.6,116.0 1207.2,116.1 1207.8,116.2 1208.3,116.3 1208.9,116.4 1209.5,116.4 1210.1,116.5 1210.7,116.5 1211.3,116.6 1211.9,116.6 1212.4,116.7 1213.0,116.7 1213.6,116.7 1214.2,116.7 1214.8,116.8 1215.4,116.8 1215.9,116.8 1216.5,116.8 1217.1,116.8 1217.7,116.8 1218.3,116.8 1218.9,116.8 1219.4,116.8 1220.0,116.8 1220.6,116.8 1221.2,116.9 1221.8,116.9 1222.4,116.9 1222.9,116.9 1223.5,116.9 1224.1,116.9 1224.7,116.9 1225.3,116.9 1225.9,116.9 1226.5,116.9 1227.0,116.9 1227.6,116.9 1228.2,116.9 1228.8,116.9 1229.4,116.9 1230.0,116.9 1230.5,116.9 1231.1,116.9 1231.7,116.9 1232.3,116.9 1232.9,116.9 1233.5,116.9 1234.0,116.9 1234.6,116.9 1235.2,116.9 1235.8,116.9 1236.4,116.9 1237.0,116.9 1237.5,116.9 1238.1,116.9 1238.7,116.9 1239.3,116.9 1239.9,116.9 1240.5,116.9 1241.1,116.9 1241.6,116.9 1242.2,116.9 1242.8,116.9 1243.4,116.9 1244.0,116.9 1244.6,116.9 1245.1,116.9 1245.7,116.9 1246.3,116.9 1246.9,116.9 1247.5,116.9 1248.1,116.9 1248.6,116.9 1249.2,116.9 1249.8,116.9 1250.4,116.9 1251.0,116.9 1251.6,116.9 1252.1,116.9 1252.7,116.9 1253.3,116.9 1253.9,116.9 1254.5,116.9 1255.1,116.9 1255.7,116.9 1256.2,116.9 1256.8,116.9 1257.4,116.9 1258.0,116.9 1258.6,116.9 1259.2,116.9 1259.7,116.9 1260.3,116.9 1260.9,116.9 1261.5,116.9 1262.1,116.9 1262.7,116.9 1263.2,116.9 1263.8,116.9 1264.4,116.9 1265.0,116.9 1265.6,116.9 1266.2,116.9 1266.7,116.9 1267.3,116.9 1267.9,116.9 1268.5,116.9 1269.1,116.9 1269.7,116.9 1270.3,116.9 1270.8,116.9 1271.4,116.9 1272.0,116.9 1272.6,116.9 1273.2,116.9 1273.8,116.9 1274.3,116.9 1274.9,116.9 1275.5,116.9 1276.1,116.9 1276.7,116.9 1277.3,116.9 1277.8,116.9 1278.4,116.9 1279.0,116.9 1279.6,116.9 1280.2,116.9 1280.8,116.9 1281.3,116.9 1281.9,116.9 1282.5,116.9 1283.1,116.9 1283.7,116.9 1284.3,116.9 1284.9,116.9 1285.4,116.9 1286.0,116.9" fill="none" stroke="#333" stroke-width="1.5"/>
<line x1="1059.4" y1="94.6" x2="1059.4" y2="117.8" stroke="#1f77b4" stroke-width="1.4"/>
<circle cx="1059.4" cy="106.2" r="1.6" fill="#1f77b4"/>
<line x1="1064.1" y1="96.2" x2="1064.1" y2="119.4" stroke="#1f77b4" stroke-width="1.4"/>
<circle cx="1064.1" cy="107.8" r="1.6" fill="#1f77b4"/>
<line x1="1068.8" y1="78.7" x2="1068.8" y2="101.9" stroke="#1f77b4" stroke-width="1.4"/>
<circle cx="1068.8" cy="90.3" r="1.6" fill="#1f77b4"/>
<line x1="1073.4" y1="60.6" x2="1073.4" y2="78.3" stroke="#1f77b4" stroke-width="1.4"/>
<circle cx="1073.4" cy="66.7" r="1.6" fill="#1f77b4"/>
<line x1="1078.1" y1="83.3" x2="1078.1" y2="106.4" stroke="#1f77b4" stroke-width="1.4"/>
<circle cx="1078.1" cy="94.9" r="1.6" fill="#1f77b4"/>
<line x1="1082.8" y1="84.4" x2="1082.8" y2="107.6" stroke="#1f77b4" stroke-width="1.4"/>
<circle cx="1082.8" cy="96.0" r="1.6" fill="#1f77b4"/>
<line x1="1087.5" y1="85.5" x2="1087.5" y2="108.7" stroke="#1f77b4" stroke-width="1.4"/>
<circle cx="1087.5" cy="97.1" r="1.6" fill="#1f77b4"/>
<line x1="1092.1" y1="110.0" x2="1092.1" y2="133.2" stroke="#1f77b4" stroke-width="1.4"/>
<circle cx="1092.1" cy="121.6" r="1.6" fill="#1f77b4"/>
<line x1="1096.8" y1="91.3" x2="1096.8" y2="114.4" stroke="#1f77b4" stroke-width="1.4"/>
<circle cx="1096.8" cy="102.9" r="1.6" fill="#1f77b4"/>
<line x1="1101.5" y1="79.8" x2="1101.5" y2="103.0" stroke="#1f77b4" stroke-width="1.4"/>
<circle cx="1101.5" cy="91.4" r="1.6" fill="#1f77b4"/>
<line x1="1106.1" y1="78.2" x2="1106.1" y2="101.4" stroke="#1f77b4" stroke-width="1.4"/>
<circle cx="1106.1" cy="89.8" r="1.6" fill="#1f77b4"/>
<line x1="1110.8" y1="80.5" x2="1110.8" y2="103.7" stroke="#1f77b4" stroke-width="1.4"/>
<circle cx="1110.8" cy="92.1" r="1.6" fill="#1f77b4"/>
<line x1="1115.5" y1="107.3" x2="1115.5" y2="130.5" stroke="#1f77b4" stroke-width="1.4"/>
<circle cx="1115.5" cy="118.9" r="1.6" fill="#1f77b4"/>
<line x1="1120.2" y1="96.2" x2="1120.2" y2="119.4" stroke="#1f77b4" stroke-width="1.4"/>
<circle cx="1120.2" cy="107.8" r="1.6" fill="#1f77b4"/>
<line x1="1124.8" y1="107.9" x2="1124.8" y2="131.1" stroke="#1f77b4" stroke-width="1.4"/>
<circle cx="1124.8" cy="119.5" r="1.6" fill="#1f77b4"/>
<line x1="1129.5" y1="97.4" x2="1129.5" y2="120.6" stroke="#1f77b4" stroke-width="1.4"/>
<circle cx="1129.5" cy="109.0" r="1.6" fill="#1f77b4"/>
<line x1="1134.2" y1="86.6" x2="1134.2" y2="109.8" stroke="#1f77b4" stroke-width="1.4"/>
<circle cx="1134.2" cy="98.2" r="1.6" fill="#1f77b4"/>
<line x1="1138.9" y1="75.9" x2="1138.9" y2="99.1" stroke="#1f77b4" stroke-width="1.4"/>
<circle cx="1138.9" cy="87.5" r="1.6" fill="#1f77b4"/>
<line x1="1143.5" y1="99.9" x2="1143.5" y2="123.1" stroke="#1f77b4" stroke-width="1.4"/>
<circle cx="1143.5" cy="111.5" r="1.6" fill="#1f77b4"/>
<line x1="1148.2" y1="103.8" x2="1148.2" y2="127.0" stroke="#1f77b4" stroke-width="1.4"/>
<circle cx="1148.2" cy="115.4" r="1.6" fill="#1f77b4"/>
<line x1="1152.9" y1="102.0" x2="1152.9" y2="125.2" stroke="#1f77b4" stroke-width="1.4"/>
<circle cx="1152.9" cy="113.6" r="1.6" fill="#1f77b4"/>
<line x1="1157.5" y1="97.0" x2="1157.5" y2="120.1" stroke="#1f77b4" stroke-width="1.4"/>
<circle cx="1157.5" cy="108.5" r="1.6" fill="#1f77b4"/>
<line x1="1162.2" y1="77.5" x2="1162.2" y2="100.6" stroke="#1f77b4" stroke-width="1.4"/>
<circle cx="1162.2" cy="89.1" r="1.6" fill="#1f77b4"/>
<line x1="1166.9" y1="77.5" x2="1166.9" y2="100.6" stroke="#1f77b4" stroke-width="1.4"/>
<circle cx="1166.9" cy="89.1" r="1.6" fill="#1f77b4"/>
<line x1="1171.6" y1="66.7" x2="1171.6" y2="89.9" stroke="#1f77b4" stroke-width="1.4"/>
<circle cx="1171.6" cy="78.3" r="1.6" fill="#1f77b4"/>
<line x1="1176.2" y1="77.0" x2="1176.2" y2="100.2" stroke="#1f77b4" stroke-width="1.4"/>
<circle cx="1176.2" cy="88.6" r="1.6" fill="#1f77b4"/>
<line x1="1180.9" y1="83.3" x2="1180.9" y2="106.4" stroke="#1f77b4" stroke-width="1.4"/>
<circle cx="1180.9" cy="94.9" r="1.6" fill="#1f77b4"/>
<line x1="1185.6" y1="80.5" x2="1185.6" y2="103.7" stroke="#1f77b4" stroke-width="1.4"/>
<circle cx="1185.6" cy="92.1" r="1.6" fill="#1f77b4"/>
<line x1="1190.2" y1="89.0" x2="1190.2" y2="112.1" stroke="#1f77b4" stroke-width="1.4"/>
<circle cx="1190.2" cy="100.5" r="1.6" fill="#1f77b4"/>
<line x1="1194.9" y1="75.9" x2="1194.9" y2="99.1" stroke="#1f77b4" stroke-width="1.4"/>
<circle cx="1194.9" cy="87.5" r="1.6" fill="#1f77b4"/>
<line x1="1199.6" y1="99.9" x2="1199.6" y2="123.1" stroke="#1f77b4" stroke-width="1.4"/>
<circle cx="1199.6" cy="111.5" r="1.6" fill="#1f77b4"/>
<line x1="1204.3" y1="104.4" x2="1204.3" y2="127.6" stroke="#1f77b4" stroke-width="1.4"/>
<circle cx="1204.3" cy="116.0" r="1.6" fill="#1f77b4"/>
<line x1="1208.9" y1="109.5" x2="1208.9" y2="132.7" stroke="#1f77b4" stroke-width="1.4"/>
<circle cx="1208.9" cy="121.1" r="1.6" fill="#1f77b4"/>
<line x1="1213.6" y1="133.9" x2="1213.6" y2="157.1" stroke="#1f77b4" stroke-width="1.4"/>
<circle cx="1213.6" cy="145.5" r="1.6" fill="#1f77b4"/>
<line x1="1218.3" y1="128.5" x2="1218.3" y2="151.6" stroke="#1f77b4" stroke-width="1.4"/>
<circle cx="1218.3" cy="140.0" r="1.6" fill="#1f77b4"/>
<line x1="1222.9" y1="115.9" x2="1222.9" y2="139.1" stroke="#1f77b4" stroke-width="1.4"/>
<circle cx="1222.9" cy="127.5" r="1.6" fill="#1f77b4"/>
<line x1="1227.6" y1="112.4" x2="1227.6" y2="135.6" stroke="#1f77b4" stroke-width="1.4"/>
<circle cx="1227.6" cy="124.0" r="1.6" fill="#1f77b4"/>
<line x1="1232.3" y1="94.6" x2="1232.3" y2="117.8" stroke="#1f77b4" stroke-width="1.4"/>
<circle cx="1232.3" cy="106.2" r="1.6" fill="#1f77b4"/>
<line x1="1237.0" y1="110.0" x2="1237.0" y2="133.2" stroke="#1f77b4" stroke-width="1.4"/>
<circle cx="1237.0" cy="121.6" r="1.6" fill="#1f77b4"/>
<line x1="1241.6" y1="104.4" x2="1241.6" y2="127.6" stroke="#1f77b4" stroke-width="1.4"/>
<circle cx="1241.6" cy="116.0" r="1.6" fill="#1f77b4"/>
<line x1="1246.3" y1="97.0" x2="1246.3" y2="120.1" stroke="#1f77b4" stroke-width="1.4"/>
<circle cx="1246.3" cy="108.5" r="1.6" fill="#1f77b4"/>
<line x1="1251.0" y1="102.0" x2="1251.0" y2="125.2" stroke="#1f77b4" stroke-width="1.4"/>
<circle cx="1251.0" cy="113.6" r="1.6" fill="#1f77b4"/>
<line x1="1255.7" y1="99.3" x2="1255.7" y2="122.5" stroke="#1f77b4" stroke-width="1.4"/>
<circle cx="1255.7" cy="110.9" r="1.6" fill="#1f77b4"/>
<line x1="1260.3" y1="87.4" x2="1260.3" y2="110.5" stroke="#1f77b4" stroke-width="1.4"/>
<circle cx="1260.3" cy="99.0" r="1.6" fill="#1f77b4"/>
<line x1="1265.0" y1="106.1" x2="1265.0" y2="129.3" stroke="#1f77b4" stroke-width="1.4"/>
<circle cx="1265.0" cy="117.7" r="1.6" fill="#1f77b4"/>
<line x1="1269.7" y1="110.0" x2="1269.7" y2="133.2" stroke="#1f77b4" stroke-width="1.4"/>
<circle cx="1269.7" cy="121.6" r="1.6" fill="#1f77b4"/>
<line x1="1274.3" y1="115.9" x2="1274.3" y2="139.1" stroke="#1f77b4" stroke-width="1.4"/>
<circle cx="1274.3" cy="127.5" r="1.6" fill="#1f77b4"/>
<line x1="1279.0" y1="109.1" x2="1279.0" y2="132.3" stroke="#1f77b4" stroke-width="1.4"/>
<circle cx="1279.0" cy="120.7" r="1.6" fill="#1f77b4"/>
<line x1="1283.7" y1="102.0" x2="1283.7" y2="125.2" stroke="#1f77b4" stroke-width="1.4"/>
<circle cx="1283.7" cy="113.6" r="1.6" fill="#1f77b4"/>
<line x1="1288.4" y1="97.7" x2="1288.4" y2="120.9" stroke="#1f77b4" stroke-width="1.4"/>
<circle cx="1288.4" cy="109.3" r="1.6" fill="#1f77b4"/>
<text xml:space="preserve" x="1049.00" y="71.00" font-family="'Liberation Sans', sans-serif" font-size="8.8" fill="#000" textLength="5.41" lengthAdjust="spacingAndGlyphs">e</text>
<text xml:space="preserve" x="1054.91" y="65.80" font-family="'Liberation Sans', sans-serif" font-size="6.16" fill="#000" textLength="13.00" lengthAdjust="spacingAndGlyphs">−17</text>
<text xml:space="preserve" x="1067.91" y="71.00" font-family="'Liberation Sans', sans-serif" font-size="8.8" fill="#000" textLength="10.81" lengthAdjust="spacingAndGlyphs">x2</text>
<text xml:space="preserve" x="1078.72" y="71.00" font-family="'Liberation Sans', sans-serif" font-size="8.8" fill="#000" textLength="6.02" lengthAdjust="spacingAndGlyphs" font-style="italic">Å</text>
<defs><clipPath id="spc"><rect x="101.8" y="348.2" width="1197.7" height="84"/></clipPath></defs>
<g clip-path="url(#spc)">
<path d="M159.2,405.5 L160.8,405.3 L162.4,405.4 L164.0,406.5 L165.6,405.2 L167.2,405.3 L168.8,406.0 L170.4,405.9 L172.0,406.7 L173.6,406.3 L175.2,405.7 L176.8,405.7 L178.4,406.0 L180.0,406.9 L181.6,406.6 L183.2,405.6 L184.8,406.6 L186.4,406.3 L188.0,406.8 L189.6,406.1 L191.2,405.9 L192.8,406.7 L194.4,407.0 L196.0,406.8 L197.6,407.3 L199.2,406.9 L200.8,406.2 L202.4,407.0 L204.0,406.5 L205.6,406.1 L207.2,406.5 L208.8,407.5 L210.4,407.1 L212.0,407.6 L213.6,407.4 L215.2,407.4 L216.8,406.5 L218.4,407.3 L220.0,407.1 L221.6,407.7 L223.2,406.8 L224.8,407.9 L226.4,407.9 L228.0,407.2 L229.6,407.6 L231.2,407.3 L232.8,407.7 L234.4,408.1 L236.0,407.2 L237.6,408.0 L239.2,406.9 L240.8,407.8 L242.4,407.5 L244.0,407.8 L245.6,408.4 L247.2,408.4 L248.8,407.3 L250.4,407.5 L252.0,407.7 L253.4,408.5 L253.4,434.1 L252.0,433.6 L250.4,433.3 L248.8,434.5 L247.2,434.0 L245.6,433.4 L244.0,434.1 L242.4,433.5 L240.8,434.3 L239.2,433.9 L237.6,434.6 L236.0,433.3 L234.4,434.5 L232.8,434.4 L231.2,434.2 L229.6,433.4 L228.0,433.4 L226.4,434.2 L224.8,433.3 L223.2,433.5 L221.6,433.6 L220.0,433.6 L218.4,434.2 L216.8,433.3 L215.2,433.6 L213.6,433.3 L212.0,434.6 L210.4,433.9 L208.8,433.6 L207.2,433.5 L205.6,434.6 L204.0,434.6 L202.4,434.0 L200.8,434.0 L199.2,434.2 L197.6,433.7 L196.0,433.8 L194.4,434.6 L192.8,434.4 L191.2,434.3 L189.6,433.3 L188.0,433.3 L186.4,433.7 L184.8,433.3 L183.2,433.4 L181.6,434.4 L180.0,433.4 L178.4,434.5 L176.8,434.5 L175.2,434.5 L173.6,433.4 L172.0,434.4 L170.4,433.9 L168.8,434.3 L167.2,434.5 L165.6,433.8 L164.0,434.0 L162.4,433.4 L160.8,433.3 L159.2,433.6Z" fill="#c4c4c4"/>
<defs><path id="band2" d="M259.9,409.0 L261.5,408.9 L263.1,407.9 L264.7,408.0 L266.3,408.7 L267.9,408.8 L269.5,408.9 L271.1,409.0 L272.7,408.2 L274.3,408.9 L275.9,409.5 L277.5,408.6 L279.1,409.2 L280.7,408.6 L282.3,408.8 L283.9,409.3 L285.5,409.5 L287.1,408.8 L288.7,409.5 L290.3,409.1 L291.9,410.0 L293.5,409.7 L295.1,409.4 L296.7,409.2 L298.3,409.7 L299.9,409.2 L301.5,409.7 L303.1,409.1 L304.7,408.9 L306.3,409.6 L307.9,410.2 L309.5,409.1 L311.1,409.5 L312.7,409.5 L314.3,409.4 L315.9,409.6 L317.5,409.7 L319.1,409.8 L320.7,410.7 L322.3,410.1 L323.9,410.5 L325.5,409.9 L327.1,410.2 L328.7,410.8 L330.3,410.5 L331.9,410.7 L333.5,410.4 L335.1,410.2 L336.7,410.8 L338.3,411.1 L339.9,410.8 L341.5,411.0 L343.1,410.7 L344.7,410.4 L346.3,410.5 L347.9,410.5 L349.5,410.2 L351.1,410.3 L352.7,411.0 L354.3,410.7 L355.9,410.2 L357.5,410.8 L359.1,410.4 L360.7,411.6 L362.3,410.9 L363.9,410.9 L365.5,411.3 L367.1,411.6 L368.7,410.6 L370.3,410.6 L371.9,411.2 L373.5,410.7 L375.1,411.5 L376.7,410.7 L378.3,411.7 L379.9,412.0 L381.5,411.5 L383.1,411.1 L384.7,412.2 L386.3,411.8 L387.9,411.1 L389.5,411.9 L391.1,410.9 L392.7,411.4 L394.3,411.4 L395.9,411.3 L397.5,411.2 L399.1,411.6 L400.7,411.9 L402.3,411.7 L403.9,411.3 L405.5,412.4 L407.1,411.8 L408.7,411.2 L410.3,412.4 L411.9,411.9 L413.5,411.5 L415.1,411.8 L416.7,412.0 L418.3,411.3 L419.9,412.1 L421.5,412.5 L423.1,411.6 L424.7,412.2 L426.3,411.3 L427.9,412.0 L429.5,412.0 L431.1,412.5 L432.7,411.6 L434.3,412.4 L435.9,411.6 L437.5,412.7 L439.1,411.4 L440.7,411.8 L442.3,411.6 L443.9,411.9 L445.5,411.8 L447.1,412.4 L448.7,412.7 L450.3,412.3 L451.9,412.0 L453.5,412.8 L455.1,412.8 L456.7,412.1 L458.3,411.7 L459.9,412.4 L461.5,412.2 L463.1,411.7 L464.7,413.0 L466.3,412.8 L467.9,412.4 L469.5,412.3 L471.1,412.7 L472.7,412.8 L474.3,412.4 L475.9,412.8 L477.5,412.2 L479.1,412.2 L480.7,413.1 L482.3,413.1 L483.9,412.4 L485.5,412.0 L487.1,412.8 L488.7,413.3 L490.3,413.3 L491.9,412.0 L493.5,413.1 L495.1,412.0 L496.7,412.3 L498.3,412.6 L499.9,413.1 L501.5,412.6 L503.1,413.0 L504.7,412.3 L506.3,412.4 L507.9,412.4 L509.5,412.7 L511.1,412.5 L512.7,413.5 L514.3,413.3 L515.9,412.4 L517.5,412.6 L519.1,413.0 L520.7,412.8 L522.3,413.1 L523.9,413.5 L525.5,413.2 L527.1,412.5 L528.7,413.4 L530.3,413.6 L531.9,413.5 L533.5,413.8 L535.1,413.4 L536.7,412.9 L538.3,413.3 L539.9,413.8 L541.5,413.5 L543.1,412.9 L544.7,413.7 L546.3,413.7 L547.9,413.5 L549.5,413.5 L551.1,413.4 L552.7,413.1 L554.3,413.9 L555.9,413.2 L557.5,413.2 L559.1,412.8 L560.7,414.1 L562.3,413.6 L563.9,413.4 L565.5,413.5 L567.1,414.1 L568.7,413.0 L570.3,413.0 L571.9,414.0 L573.5,413.8 L575.1,414.0 L576.7,413.9 L578.3,414.3 L579.9,414.2 L581.5,413.9 L583.1,414.3 L584.7,414.3 L586.3,413.1 L587.9,413.2 L589.5,414.4 L591.1,413.7 L592.7,413.9 L594.3,413.4 L595.9,414.0 L597.5,413.3 L599.1,414.3 L600.7,414.3 L602.3,413.3 L603.9,414.3 L605.5,414.1 L607.1,413.8 L608.7,414.1 L610.3,413.5 L611.9,414.2 L613.5,413.9 L615.1,413.9 L616.7,413.4 L618.3,413.2 L619.9,413.4 L621.5,413.8 L623.1,413.5 L624.7,413.4 L626.3,414.1 L627.9,413.9 L629.5,414.4 L631.1,414.1 L632.7,414.1 L634.3,413.4 L635.9,414.4 L637.5,414.3 L639.1,413.3 L640.7,413.6 L642.3,413.9 L643.9,414.0 L645.5,413.6 L647.1,413.4 L648.7,413.7 L650.3,413.5 L651.9,413.2 L653.5,414.3 L655.1,413.2 L656.7,413.9 L658.3,413.4 L659.9,413.7 L661.5,413.6 L663.1,413.3 L664.7,414.4 L666.3,414.4 L667.9,413.8 L669.5,413.9 L671.1,414.1 L672.7,413.7 L674.3,413.4 L675.9,414.0 L677.5,413.1 L679.1,413.3 L680.7,413.9 L682.3,413.3 L683.9,414.4 L685.5,414.4 L687.1,413.2 L688.7,413.4 L690.3,413.5 L691.9,413.6 L693.5,414.0 L695.1,413.8 L696.7,414.2 L698.3,414.1 L699.9,414.1 L701.5,413.8 L703.1,413.9 L704.7,413.4 L706.3,413.5 L707.9,413.8 L709.5,414.0 L711.1,413.6 L712.7,414.1 L714.3,414.4 L715.9,413.7 L717.5,413.5 L719.1,413.2 L720.7,413.5 L722.3,413.5 L723.9,413.2 L725.5,413.6 L727.1,413.5 L728.7,414.2 L730.3,413.3 L731.9,413.2 L733.5,414.0 L735.1,414.0 L736.7,413.6 L738.3,413.3 L739.9,414.0 L741.5,413.6 L743.1,413.5 L744.7,413.3 L746.3,414.1 L747.9,413.7 L749.5,414.3 L751.1,413.5 L752.7,414.5 L754.3,413.4 L755.9,413.5 L757.5,414.0 L759.1,413.3 L760.7,414.2 L762.3,413.2 L763.9,414.5 L765.5,413.8 L767.1,414.3 L768.7,413.7 L770.3,413.6 L771.9,414.5 L773.5,413.4 L775.1,414.1 L776.7,413.7 L778.3,414.2 L779.9,413.4 L781.5,414.4 L783.1,414.4 L784.7,414.4 L786.3,414.4 L787.9,413.5 L789.5,413.4 L791.1,413.3 L792.7,413.7 L794.3,414.4 L795.9,414.5 L797.5,414.1 L799.1,413.6 L800.7,414.5 L802.3,413.8 L803.9,414.4 L805.5,414.1 L807.1,413.9 L808.7,413.3 L810.3,413.5 L811.9,414.2 L813.5,413.9 L815.1,413.6 L816.7,414.1 L818.3,413.9 L819.9,413.5 L821.5,414.2 L823.1,413.4 L824.7,414.5 L826.3,414.3 L827.9,414.5 L829.5,414.5 L831.1,413.2 L832.7,414.1 L834.3,414.5 L835.9,413.5 L837.5,413.5 L839.1,414.6 L840.7,414.0 L842.3,413.9 L843.9,414.3 L845.5,414.0 L847.1,414.5 L848.7,413.3 L850.3,413.9 L851.9,414.1 L853.5,414.0 L855.1,413.3 L856.7,413.7 L858.3,414.6 L859.9,414.0 L861.5,413.5 L863.1,414.1 L864.7,413.6 L866.3,414.4 L867.9,414.0 L869.5,413.2 L871.1,414.0 L872.7,414.0 L874.3,413.7 L875.9,414.4 L877.5,414.5 L879.1,413.4 L880.7,414.4 L882.3,413.5 L883.9,413.8 L885.5,414.3 L887.1,413.3 L888.7,414.4 L890.3,414.3 L891.9,414.1 L893.5,414.4 L895.1,413.3 L896.7,414.5 L898.3,413.7 L899.9,414.1 L901.5,413.8 L903.1,414.3 L904.7,414.3 L906.3,413.6 L907.9,414.0 L909.5,414.7 L911.1,414.1 L912.7,413.8 L914.3,414.6 L915.9,414.6 L917.5,414.2 L919.1,414.2 L920.7,413.7 L922.3,414.1 L923.9,413.7 L925.5,413.3 L927.1,414.2 L928.7,413.4 L930.3,414.0 L931.9,413.9 L933.5,413.4 L935.1,413.9 L936.7,414.5 L938.3,414.0 L939.9,414.4 L941.5,414.6 L943.1,414.2 L944.7,413.3 L946.3,414.3 L947.9,413.6 L949.5,413.5 L951.1,414.1 L952.7,414.3 L954.3,413.5 L955.9,413.4 L957.5,414.5 L959.1,413.7 L960.7,414.7 L962.3,413.5 L963.9,413.5 L965.5,413.9 L967.1,413.7 L968.7,413.8 L970.3,413.4 L971.9,414.6 L973.5,414.6 L975.1,414.1 L976.7,413.5 L978.3,414.6 L979.9,413.5 L981.5,413.6 L983.1,414.3 L984.7,413.6 L986.3,413.4 L987.9,414.5 L989.5,414.3 L991.1,414.4 L992.7,414.2 L994.3,414.1 L995.9,413.8 L997.5,414.5 L999.1,413.8 L1000.7,413.9 L1002.3,414.5 L1003.9,414.0 L1005.5,413.5 L1007.1,413.8 L1008.7,413.6 L1010.3,414.3 L1011.9,414.4 L1013.5,413.5 L1015.1,413.9 L1016.7,413.4 L1018.3,413.7 L1019.9,414.6 L1021.5,413.6 L1023.1,414.7 L1024.7,414.2 L1026.3,413.7 L1027.9,414.2 L1029.5,414.6 L1031.1,413.7 L1032.7,413.5 L1034.3,414.3 L1035.9,413.4 L1037.5,413.5 L1039.1,414.6 L1040.7,414.4 L1042.3,414.0 L1043.9,414.6 L1045.5,413.4 L1047.1,414.1 L1048.7,413.7 L1050.3,414.0 L1051.9,413.4 L1053.5,414.1 L1055.1,414.0 L1056.7,414.2 L1058.3,414.0 L1059.9,414.2 L1061.5,413.5 L1063.1,413.6 L1064.7,414.6 L1066.3,413.4 L1067.9,414.2 L1069.5,414.0 L1071.1,414.4 L1072.7,414.4 L1074.3,413.7 L1075.9,414.6 L1077.5,413.8 L1079.1,414.6 L1080.7,414.6 L1082.3,414.7 L1083.9,413.9 L1085.5,414.6 L1087.1,414.6 L1088.7,414.4 L1090.3,414.7 L1091.9,414.6 L1093.5,414.3 L1095.1,413.9 L1096.7,413.6 L1098.3,414.4 L1099.9,413.6 L1101.5,414.2 L1103.1,413.4 L1104.7,413.9 L1106.3,413.8 L1107.9,413.5 L1109.5,413.6 L1111.1,414.2 L1112.7,413.9 L1114.3,413.8 L1115.9,413.8 L1117.5,413.7 L1119.1,414.1 L1120.7,413.7 L1122.3,413.6 L1123.9,414.1 L1125.5,414.7 L1127.1,413.4 L1128.7,414.5 L1130.3,413.9 L1131.9,413.9 L1133.5,414.4 L1135.1,413.9 L1136.7,413.8 L1138.3,414.2 L1139.9,413.8 L1141.5,414.0 L1143.1,414.2 L1144.7,414.7 L1146.3,413.6 L1147.9,414.8 L1149.5,413.8 L1151.1,414.2 L1152.7,413.7 L1154.3,414.1 L1155.9,413.7 L1157.5,414.0 L1159.1,414.0 L1160.7,413.6 L1162.3,414.8 L1163.9,413.4 L1165.5,414.8 L1167.1,414.7 L1168.7,414.7 L1170.3,414.8 L1171.9,414.4 L1173.5,414.3 L1175.1,413.5 L1176.7,413.9 L1178.3,414.3 L1179.9,414.3 L1181.5,414.2 L1183.1,413.9 L1184.7,413.9 L1186.3,413.6 L1187.9,413.7 L1189.5,413.9 L1191.1,413.6 L1192.7,414.2 L1194.3,414.4 L1195.9,413.9 L1197.5,414.6 L1199.1,413.7 L1200.7,414.7 L1202.3,414.4 L1203.9,414.5 L1205.5,414.7 L1207.1,414.7 L1208.7,414.1 L1210.3,413.7 L1211.9,413.6 L1213.5,414.7 L1215.1,414.8 L1216.7,413.8 L1218.3,413.8 L1219.9,413.6 L1221.5,414.1 L1223.1,414.3 L1224.7,413.7 L1226.3,414.5 L1227.9,414.8 L1229.5,414.6 L1231.1,414.1 L1232.7,413.9 L1234.3,414.6 L1235.9,414.1 L1237.5,414.3 L1239.1,414.7 L1240.7,414.6 L1242.3,414.7 L1243.9,415.0 L1245.5,415.2 L1247.1,415.6 L1248.7,415.9 L1250.3,415.6 L1251.9,415.9 L1253.5,414.7 L1255.1,415.8 L1256.7,414.6 L1258.3,415.5 L1259.9,415.0 L1261.5,415.8 L1263.1,415.5 L1264.7,415.3 L1266.3,415.9 L1267.9,415.6 L1269.5,414.8 L1271.1,415.5 L1272.7,414.8 L1274.3,415.3 L1275.9,415.1 L1277.5,415.4 L1279.1,415.4 L1280.7,415.5 L1282.3,415.1 L1283.9,415.7 L1285.5,414.9 L1287.1,415.8 L1288.7,414.7 L1290.3,415.9 L1291.9,415.6 L1293.5,415.9 L1295.1,415.8 L1296.7,415.0 L1298.3,414.8 L1299.9,415.1 L1300.0,415.7 L1300.0,422.2 L1299.9,421.7 L1298.3,421.7 L1296.7,422.2 L1295.1,422.4 L1293.5,422.3 L1291.9,422.0 L1290.3,422.0 L1288.7,422.8 L1287.1,421.8 L1285.5,422.8 L1283.9,422.3 L1282.3,422.1 L1280.7,422.4 L1279.1,421.7 L1277.5,422.7 L1275.9,422.3 L1274.3,422.0 L1272.7,422.1 L1271.1,422.2 L1269.5,422.2 L1267.9,422.5 L1266.3,422.6 L1264.7,421.7 L1263.1,421.9 L1261.5,421.7 L1259.9,422.3 L1258.3,422.6 L1256.7,422.8 L1255.1,422.4 L1253.5,422.5 L1251.9,422.5 L1250.3,422.5 L1248.7,422.0 L1247.1,422.3 L1245.5,422.9 L1243.9,422.7 L1242.3,423.5 L1240.7,422.5 L1239.1,423.9 L1237.5,424.1 L1235.9,424.1 L1234.3,423.5 L1232.7,424.4 L1231.1,424.9 L1229.5,424.1 L1227.9,424.3 L1226.3,423.9 L1224.7,424.7 L1223.1,424.4 L1221.5,424.8 L1219.9,424.2 L1218.3,424.4 L1216.7,424.4 L1215.1,424.2 L1213.5,425.0 L1211.9,424.9 L1210.3,424.6 L1208.7,423.7 L1207.1,425.0 L1205.5,424.4 L1203.9,425.0 L1202.3,424.8 L1200.7,424.2 L1199.1,424.5 L1197.5,424.3 L1195.9,423.9 L1194.3,424.7 L1192.7,424.8 L1191.1,424.0 L1189.5,424.1 L1187.9,424.5 L1186.3,423.7 L1184.7,424.0 L1183.1,423.8 L1181.5,424.0 L1179.9,425.0 L1178.3,424.4 L1176.7,424.7 L1175.1,423.8 L1173.5,424.8 L1171.9,424.0 L1170.3,424.4 L1168.7,424.7 L1167.1,424.5 L1165.5,424.6 L1163.9,424.8 L1162.3,423.8 L1160.7,424.2 L1159.1,424.0 L1157.5,423.9 L1155.9,424.0 L1154.3,425.0 L1152.7,424.4 L1151.1,424.4 L1149.5,424.9 L1147.9,425.0 L1146.3,424.8 L1144.7,424.7 L1143.1,424.1 L1141.5,424.0 L1139.9,424.5 L1138.3,424.6 L1136.7,424.3 L1135.1,424.2 L1133.5,425.0 L1131.9,424.7 L1130.3,424.5 L1128.7,423.9 L1127.1,423.9 L1125.5,424.8 L1123.9,424.4 L1122.3,425.0 L1120.7,424.0 L1119.1,425.1 L1117.5,424.8 L1115.9,424.2 L1114.3,424.4 L1112.7,424.6 L1111.1,423.9 L1109.5,424.1 L1107.9,424.6 L1106.3,425.1 L1104.7,424.0 L1103.1,424.9 L1101.5,424.5 L1099.9,424.9 L1098.3,424.6 L1096.7,423.8 L1095.1,424.4 L1093.5,424.2 L1091.9,424.0 L1090.3,424.1 L1088.7,424.6 L1087.1,424.3 L1085.5,424.1 L1083.9,423.9 L1082.3,424.4 L1080.7,424.8 L1079.1,423.7 L1077.5,424.0 L1075.9,424.8 L1074.3,424.2 L1072.7,424.4 L1071.1,424.0 L1069.5,424.4 L1067.9,423.8 L1066.3,424.4 L1064.7,425.0 L1063.1,424.3 L1061.5,424.6 L1059.9,424.2 L1058.3,423.8 L1056.7,424.8 L1055.1,423.7 L1053.5,424.7 L1051.9,424.3 L1050.3,425.0 L1048.7,424.9 L1047.1,424.9 L1045.5,423.8 L1043.9,424.4 L1042.3,424.7 L1040.7,425.1 L1039.1,424.5 L1037.5,424.4 L1035.9,424.0 L1034.3,424.8 L1032.7,425.0 L1031.1,424.5 L1029.5,425.0 L1027.9,424.6 L1026.3,424.7 L1024.7,424.2 L1023.1,423.7 L1021.5,424.3 L1019.9,424.2 L1018.3,424.6 L1016.7,424.9 L1015.1,424.2 L1013.5,424.7 L1011.9,424.6 L1010.3,425.0 L1008.7,423.9 L1007.1,424.5 L1005.5,424.3 L1003.9,424.3 L1002.3,424.7 L1000.7,423.8 L999.1,424.5 L997.5,424.4 L995.9,424.9 L994.3,424.2 L992.7,425.0 L991.1,425.0 L989.5,423.8 L987.9,424.8 L986.3,424.5 L984.7,424.4 L983.1,425.1 L981.5,424.7 L979.9,424.9 L978.3,424.2 L976.7,424.1 L975.1,424.2 L973.5,425.0 L971.9,424.2 L970.3,425.0 L968.7,424.8 L967.1,424.3 L965.5,425.0 L963.9,425.1 L962.3,424.4 L960.7,425.1 L959.1,424.3 L957.5,425.0 L955.9,424.9 L954.3,424.5 L952.7,424.8 L951.1,424.2 L949.5,424.2 L947.9,424.8 L946.3,424.0 L944.7,424.8 L943.1,424.9 L941.5,425.0 L939.9,424.5 L938.3,424.3 L936.7,424.6 L935.1,424.0 L933.5,424.7 L931.9,424.6 L930.3,424.1 L928.7,425.0 L927.1,424.9 L925.5,423.7 L923.9,423.8 L922.3,424.4 L920.7,423.8 L919.1,424.5 L917.5,425.1 L915.9,424.6 L914.3,424.4 L912.7,424.0 L911.1,424.4 L909.5,424.1 L907.9,424.1 L906.3,425.0 L904.7,424.4 L903.1,424.3 L901.5,423.8 L899.9,424.5 L898.3,424.6 L896.7,425.0 L895.1,424.2 L893.5,424.4 L891.9,424.1 L890.3,424.1 L888.7,424.5 L887.1,425.1 L885.5,423.8 L883.9,425.0 L882.3,423.8 L880.7,425.1 L879.1,423.9 L877.5,424.6 L875.9,424.5 L874.3,425.0 L872.7,424.7 L871.1,424.8 L869.5,424.8 L867.9,423.8 L866.3,424.1 L864.7,423.9 L863.1,423.7 L861.5,423.9 L859.9,423.9 L858.3,424.1 L856.7,425.1 L855.1,424.2 L853.5,424.3 L851.9,424.1 L850.3,425.1 L848.7,424.2 L847.1,424.8 L845.5,424.5 L843.9,423.8 L842.3,425.1 L840.7,424.6 L839.1,424.8 L837.5,424.7 L835.9,425.2 L834.3,424.7 L832.7,423.8 L831.1,424.4 L829.5,424.5 L827.9,424.8 L826.3,424.2 L824.7,424.6 L823.1,424.4 L821.5,424.7 L819.9,424.4 L818.3,424.2 L816.7,424.8 L815.1,423.9 L813.5,424.7 L811.9,425.0 L810.3,424.2 L808.7,425.1 L807.1,423.8 L805.5,424.2 L803.9,424.3 L802.3,424.6 L800.7,424.6 L799.1,424.1 L797.5,424.5 L795.9,424.9 L794.3,425.0 L792.7,423.8 L791.1,423.8 L789.5,424.2 L787.9,424.0 L786.3,424.1 L784.7,424.3 L783.1,425.1 L781.5,424.9 L779.9,424.5 L778.3,424.2 L776.7,423.9 L775.1,424.0 L773.5,423.8 L771.9,424.5 L770.3,424.2 L768.7,424.3 L767.1,424.9 L765.5,424.3 L763.9,425.0 L762.3,424.9 L760.7,424.3 L759.1,424.8 L757.5,424.4 L755.9,424.6 L754.3,424.0 L752.7,424.4 L751.1,424.9 L749.5,424.3 L747.9,423.9 L746.3,424.8 L744.7,424.9 L743.1,424.7 L741.5,424.4 L739.9,425.0 L738.3,424.3 L736.7,423.9 L735.1,425.0 L733.5,425.2 L731.9,424.4 L730.3,424.9 L728.7,424.5 L727.1,424.3 L725.5,424.0 L723.9,423.9 L722.3,424.3 L720.7,425.1 L719.1,424.8 L717.5,424.8 L715.9,424.1 L714.3,424.7 L712.7,425.1 L711.1,424.5 L709.5,424.4 L707.9,424.1 L706.3,424.3 L704.7,423.9 L703.1,423.8 L701.5,424.2 L699.9,424.7 L698.3,425.2 L696.7,424.7 L695.1,424.4 L693.5,425.2 L691.9,424.1 L690.3,424.0 L688.7,424.8 L687.1,424.9 L685.5,424.2 L683.9,425.0 L682.3,424.5 L680.7,425.0 L679.1,424.3 L677.5,424.0 L675.9,424.9 L674.3,424.9 L672.7,424.7 L671.1,424.9 L669.5,424.9 L667.9,424.0 L666.3,424.4 L664.7,423.8 L663.1,424.6 L661.5,425.1 L659.9,423.9 L658.3,423.9 L656.7,424.6 L655.1,424.6 L653.5,424.8 L651.9,424.1 L650.3,424.6 L648.7,425.0 L647.1,425.1 L645.5,424.1 L643.9,425.2 L642.3,424.7 L640.7,424.9 L639.1,423.9 L637.5,424.7 L635.9,425.2 L634.3,424.5 L632.7,425.2 L631.1,424.3 L629.5,425.0 L627.9,425.1 L626.3,424.1 L624.7,424.3 L623.1,423.9 L621.5,424.1 L619.9,424.4 L618.3,424.3 L616.7,424.5 L615.1,424.8 L613.5,425.1 L611.9,424.8 L610.3,425.2 L608.7,425.2 L607.1,424.4 L605.5,425.1 L603.9,425.1 L602.3,424.8 L600.7,424.2 L599.1,424.8 L597.5,424.9 L595.9,424.6 L594.3,424.0 L592.7,424.4 L591.1,424.4 L589.5,424.5 L587.9,425.0 L586.3,424.4 L584.7,424.5 L583.1,424.8 L581.5,424.5 L579.9,424.6 L578.3,423.9 L576.7,425.2 L575.1,424.8 L573.5,425.3 L571.9,425.3 L570.3,425.3 L568.7,424.7 L567.1,425.3 L565.5,424.9 L563.9,424.1 L562.3,425.4 L560.7,424.4 L559.1,425.5 L557.5,424.9 L555.9,424.2 L554.3,425.2 L552.7,424.6 L551.1,425.2 L549.5,425.2 L547.9,424.3 L546.3,425.6 L544.7,425.7 L543.1,425.5 L541.5,424.8 L539.9,424.8 L538.3,424.4 L536.7,424.8 L535.1,424.5 L533.5,424.5 L531.9,425.2 L530.3,425.5 L528.7,425.5 L527.1,425.7 L525.5,425.4 L523.9,425.7 L522.3,425.8 L520.7,425.4 L519.1,424.7 L517.5,426.0 L515.9,425.4 L514.3,426.0 L512.7,426.0 L511.1,425.5 L509.5,425.3 L507.9,425.4 L506.3,425.5 L504.7,425.3 L503.1,426.0 L501.5,425.7 L499.9,425.8 L498.3,425.7 L496.7,426.1 L495.1,425.3 L493.5,426.1 L491.9,425.4 L490.3,426.1 L488.7,425.3 L487.1,425.3 L485.5,425.7 L483.9,426.1 L482.3,426.3 L480.7,425.5 L479.1,425.5 L477.5,426.2 L475.9,426.0 L474.3,426.3 L472.7,425.5 L471.1,425.8 L469.5,425.7 L467.9,425.3 L466.3,425.7 L464.7,425.7 L463.1,426.1 L461.5,426.0 L459.9,426.3 L458.3,426.5 L456.7,425.7 L455.1,426.7 L453.5,426.2 L451.9,426.7 L450.3,426.6 L448.7,426.0 L447.1,425.5 L445.5,426.7 L443.9,425.5 L442.3,426.6 L440.7,426.8 L439.1,425.5 L437.5,425.9 L435.9,426.0 L434.3,425.8 L432.7,426.9 L431.1,426.2 L429.5,426.6 L427.9,426.3 L426.3,426.9 L424.7,426.0 L423.1,426.5 L421.5,425.9 L419.9,425.9 L418.3,426.9 L416.7,426.6 L415.1,425.9 L413.5,426.3 L411.9,426.4 L410.3,426.1 L408.7,426.5 L407.1,426.0 L405.5,426.9 L403.9,426.5 L402.3,426.8 L400.7,426.6 L399.1,426.9 L397.5,426.9 L395.9,427.2 L394.3,426.5 L392.7,426.7 L391.1,427.0 L389.5,427.2 L387.9,427.1 L386.3,426.2 L384.7,426.7 L383.1,426.3 L381.5,427.1 L379.9,426.7 L378.3,426.9 L376.7,426.9 L375.1,427.1 L373.5,426.9 L371.9,427.4 L370.3,426.5 L368.7,427.4 L367.1,427.6 L365.5,427.5 L363.9,427.0 L362.3,428.1 L360.7,427.6 L359.1,428.6 L357.5,428.2 L355.9,427.4 L354.3,428.1 L352.7,428.8 L351.1,428.2 L349.5,428.6 L347.9,427.9 L346.3,428.9 L344.7,429.3 L343.1,429.4 L341.5,428.4 L339.9,429.0 L338.3,429.1 L336.7,428.4 L335.1,429.0 L333.5,429.3 L331.9,429.9 L330.3,429.7 L328.7,429.9 L327.1,429.8 L325.5,430.1 L323.9,429.3 L322.3,429.4 L320.7,430.1 L319.1,429.4 L317.5,429.4 L315.9,430.0 L314.3,429.8 L312.7,430.4 L311.1,429.7 L309.5,430.1 L307.9,429.7 L306.3,430.2 L304.7,429.6 L303.1,430.1 L301.5,429.9 L299.9,430.0 L298.3,430.3 L296.7,430.2 L295.1,430.2 L293.5,430.5 L291.9,430.7 L290.3,430.8 L288.7,430.3 L287.1,430.7 L285.5,431.1 L283.9,430.8 L282.3,430.8 L280.7,431.0 L279.1,430.9 L277.5,430.9 L275.9,431.8 L274.3,431.7 L272.7,431.4 L271.1,430.9 L269.5,432.2 L267.9,432.1 L266.3,431.5 L264.7,432.0 L263.1,431.5 L261.5,432.1 L259.9,431.6Z"/></defs><use href="#band2" fill="#c4c4c4"/>
<rect x="499.4" y="348.2" width="54.5" height="84.0" fill="#bfbf00"/>
<defs><clipPath id="yc"><rect x="499.4" y="348.2" width="54.5" height="84.0"/></clipPath></defs>
<g clip-path="url(#yc)"><use href="#band2" fill="#000" fill-opacity="0.14"/></g>
<line x1="101.8" y1="418.9" x2="1299.5" y2="418.9" stroke="#5a5a5a" stroke-width="1.3"/>
<rect x="128.1" y="348.2" width="12.1" height="84.0" fill="url(#hatch)" stroke="#222" stroke-width="0.8"/>
<rect x="1265.6" y="348.2" width="6.5" height="84.0" fill="url(#hatch2)" stroke="#222" stroke-width="0.8"/>
<line x1="202.1" y1="348.2" x2="202.1" y2="432.2" stroke="#444" stroke-width="1.1" stroke-dasharray="4,2.6"/>
<line x1="225.9" y1="348.2" x2="225.9" y2="432.2" stroke="#444" stroke-width="1.1" stroke-dasharray="4,2.6"/>
<line x1="271.9" y1="348.2" x2="271.9" y2="432.2" stroke="#444" stroke-width="1.1" stroke-dasharray="4,2.6"/>
<line x1="289.7" y1="348.2" x2="289.7" y2="432.2" stroke="#444" stroke-width="1.1" stroke-dasharray="4,2.6"/>
<line x1="322.9" y1="348.2" x2="322.9" y2="432.2" stroke="#444" stroke-width="1.1" stroke-dasharray="4,2.6"/>
<line x1="559.2" y1="348.2" x2="559.2" y2="432.2" stroke="#444" stroke-width="1.1" stroke-dasharray="4,2.6"/>
<line x1="526.4" y1="348.2" x2="526.4" y2="432.2" stroke="#000" stroke-width="1.1" stroke-dasharray="1.6,1.6"/>
<polyline points="101.8,396.8 128.0,400.2 156.0,399.8 156.9,399.3 158.9,407.1 160.7,395.0 162.1,394.3 164.0,399.3 165.4,370.7 167.1,394.3 170.0,410.0 172.6,396.4 174.3,400.7 176.0,411.4 177.9,397.1 179.3,399.3 181.0,368.6 182.9,388.6 184.7,406.4 186.9,387.1 188.3,417.1 190.0,403.6 191.4,405.0 192.9,394.3 194.3,418.6 197.1,384.3 199.3,372.9 201.1,392.9 202.1,369.3 203.6,388.6 205.7,374.3 207.9,397.9 209.3,375.0 211.1,395.6 212.9,413.6 214.3,394.3 217.1,398.6 219.3,412.9 221.0,382.9 222.9,395.7 225.7,375.7 228.1,402.9 229.6,381.4 231.1,387.9 232.9,387.1 235.0,397.1 237.1,408.6 238.8,399.3 240.5,393.8 242.1,384.3 244.1,400.4 246.0,420.0 248.6,406.4 250.0,407.1 251.4,405.0 252.9,395.7 255.0,405.0 257.9,397.1 259.7,400.0 262.1,396.4 264.3,401.4 267.1,376.4 269.3,394.3 270.7,382.1 272.9,389.3 274.3,385.0 276.4,389.3 278.6,383.6 281.1,393.6 284.0,375.0 285.4,390.0 286.9,380.7 288.3,382.9 290.0,367.1 291.4,387.1 293.3,390.0 296.4,410.0 298.6,402.9 300.4,410.7 302.6,392.1 304.0,400.0 304.7,391.4 306.9,414.3 308.6,404.3 310.4,392.0 312.1,380.0 314.3,394.3 316.9,384.3 319.7,408.6 321.6,393.1 323.6,377.1 325.7,381.4 327.9,393.6 329.7,385.7 331.4,394.3 333.3,384.3 335.7,401.4 338.3,387.1 340.4,392.9 342.1,382.1 343.1,405.7 345.0,384.3 347.1,408.6 349.3,377.9 350.0,377.9 352.9,380.0 355.7,395.7 357.1,388.6 359.3,407.1 360.7,398.6 362.1,428.6 363.6,401.4 365.4,402.9 367.1,397.9 369.3,388.6 371.1,398.6 372.6,389.3 374.0,402.1 375.4,384.3 377.4,391.4 379.0,382.1 381.1,407.1 383.1,412.9 385.7,396.4 387.1,407.1 389.3,394.3 391.4,376.4 392.9,392.1 394.0,379.3 395.7,382.1 397.1,375.7 398.9,387.1 400.3,380.0 402.1,381.4 404.0,374.3 406.9,384.3 410.0,377.9 412.6,370.0 414.3,375.7 416.0,370.0 418.6,380.7 420.7,380.0 422.1,385.7 424.3,376.4 427.1,369.3 429.7,381.4 431.4,387.9 433.1,375.7 434.8,371.9 436.4,367.1 438.3,382.9 440.0,371.4 441.9,377.1 444.3,372.9 446.9,381.4 448.6,367.9 450.0,377.1 451.7,372.9 454.3,377.1 456.4,372.9 458.6,380.0 460.0,377.1 462.1,385.7 464.3,375.7 466.4,378.6 468.1,368.8 469.7,362.1 472.1,375.7 473.6,368.6 475.7,372.9 477.9,382.9 480.3,376.4 482.1,379.3 485.0,367.1 487.9,376.4 490.7,372.9 492.9,382.9 494.6,374.3 497.1,375.7 498.6,374.3 500.3,357.1 502.6,370.0 505.0,382.1 507.9,368.6 509.3,368.6 510.7,381.4 512.9,377.1 513.6,381.4 516.4,367.1 519.0,378.6 521.4,375.7 523.2,369.9 525.0,362.9 527.6,370.0 529.3,368.6 531.1,367.1 533.6,378.6 536.0,392.9 538.3,381.4 540.7,375.0 542.1,381.4 544.6,376.4 546.4,377.1 547.9,372.1 550.0,381.4 551.4,384.3 553.6,378.6 555.7,375.7 557.1,380.0 558.3,372.9 559.7,355.7 561.7,385.7 564.3,378.6 567.4,372.9 570.0,378.6 572.9,380.0 575.7,384.3 578.1,382.1 580.7,390.0 582.9,386.4 585.7,399.3 587.4,388.6 589.7,365.7 591.4,368.6 594.6,382.9 597.1,378.6 598.6,365.7 600.7,372.9 603.6,378.6 605.4,367.1 607.1,372.9 608.6,366.4 610.7,376.4 612.9,372.9 615.0,362.1 617.1,365.0 618.6,374.3 620.3,367.9 622.9,372.9 625.4,377.1 627.9,391.4 630.0,385.7 632.9,371.4 634.3,375.0 636.4,370.0 638.6,369.3 641.4,378.6 644.3,365.7 646.4,370.7 648.3,363.6 650.0,370.0 652.1,365.0 654.3,370.0 656.4,368.6 658.6,373.6 661.4,372.1 664.3,378.6 666.4,368.6 669.3,361.4 671.1,372.9 673.6,370.7 675.7,373.6 677.9,363.6 680.0,370.7 682.1,364.3 685.0,359.3 687.1,367.1 689.3,374.3 691.4,365.7 694.3,367.9 696.4,370.7 698.6,370.0 700.7,364.3 703.6,362.1 706.4,354.3 708.6,358.6 710.7,365.0 713.3,374.3 715.7,366.4 717.9,360.7 720.0,367.9 721.4,360.7 724.3,366.4 727.1,368.6 730.0,370.7 731.4,365.7 733.6,358.6 735.7,364.3 737.9,367.9 740.7,367.9 743.6,352.9 746.4,360.0 747.9,370.7 750.0,364.3 752.1,365.0 753.6,370.7 756.4,357.9 758.6,362.9 760.7,358.6 762.9,360.0 765.0,369.3 767.1,357.1 769.3,365.7 771.1,366.4 772.9,358.6 775.0,365.0 777.1,360.0 778.6,353.6 780.7,361.4 782.9,360.0 785.0,366.4 787.1,358.6 788.6,362.9 790.7,355.7 792.9,357.9 795.0,367.1 797.1,374.3 799.7,353.6 801.7,363.6 804.3,366.4 806.4,357.9 809.3,357.9 811.4,365.7 813.6,360.7 815.7,360.0 817.1,367.1 820.0,364.3 822.9,362.1 825.0,366.4 827.1,360.0 830.0,360.0 831.4,357.9 833.6,360.7 835.7,359.3 837.9,362.9 840.7,367.1 843.6,360.7 845.7,365.7 847.9,358.6 850.0,363.6 852.1,367.9 854.3,362.9 856.4,359.3 858.6,364.3 861.4,363.6 863.6,365.7 866.0,367.9 867.6,363.9 869.3,360.0 871.4,367.9 872.9,359.3 875.7,367.1 878.6,360.7 880.7,362.9 882.9,360.5 885.0,355.0 887.1,361.4 890.0,360.7 892.9,363.6 895.7,360.0 897.1,365.7 899.3,359.3 900.7,365.7 902.9,360.7 905.0,359.3 906.4,364.3 908.6,370.0 911.4,370.0 913.4,361.9 915.4,357.9 917.9,367.1 920.7,360.7 923.6,362.9 926.4,363.6 928.2,368.8 930.0,370.0 931.8,362.8 933.6,358.6 935.7,362.1 938.6,357.1 940.7,365.7 943.6,360.0 945.7,374.3 947.9,362.9 950.0,377.9 952.1,361.4 954.3,365.0 955.7,362.9 957.9,367.1 959.6,365.3 961.4,360.7 964.3,368.6 966.4,360.7 968.6,369.3 971.4,362.9 973.6,360.7 975.0,371.4 977.1,357.1 978.6,369.3 980.0,363.6 982.1,356.4 984.0,370.0 986.4,369.3 988.6,365.0 991.4,355.0 993.6,369.3 995.7,367.9 997.9,364.3 1000.7,369.3 1003.6,365.0 1006.4,363.6 1008.6,361.4 1010.0,370.0 1011.4,360.0 1014.3,361.4 1016.4,364.3 1018.6,375.0 1020.7,365.0 1022.9,367.9 1025.0,365.7 1027.1,362.9 1029.3,366.4 1031.4,362.1 1032.9,372.1 1035.7,370.0 1037.4,365.7 1039.3,372.1 1042.1,375.7 1044.3,368.6 1046.1,365.4 1047.9,362.1 1050.0,365.7 1052.9,364.3 1055.0,370.0 1057.1,367.1 1058.9,367.9 1060.7,365.7 1062.9,362.9 1065.0,367.1 1067.1,368.6 1070.0,366.4 1072.9,361.4 1075.4,370.0 1077.6,377.1 1080.0,368.6 1082.9,370.0 1085.0,366.4 1087.1,360.7 1089.3,367.9 1092.1,375.7 1094.3,386.4 1096.4,387.1 1099.3,375.0 1101.1,377.5 1102.9,382.9 1105.7,366.4 1108.6,374.3 1110.4,363.9 1112.1,355.0 1114.3,375.7 1116.4,370.7 1117.9,377.9 1120.7,372.1 1122.4,364.3 1124.0,360.0 1126.4,374.3 1129.3,367.9 1132.1,364.3 1134.3,367.1 1137.1,364.3 1140.0,365.0 1142.1,362.1 1144.3,371.4 1146.4,368.6 1148.6,374.3 1150.0,368.6 1152.1,385.0 1154.3,368.6 1156.4,365.0 1158.3,357.9 1160.0,370.0 1162.9,362.9 1165.0,367.1 1167.9,361.4 1170.0,364.3 1172.6,372.9 1175.0,362.9 1177.9,363.6 1180.0,361.4 1182.9,365.0 1185.0,368.6 1187.9,377.9 1190.7,365.0 1192.9,367.9 1195.0,360.7 1197.1,364.3 1199.3,370.0 1202.1,364.3 1204.3,357.9 1206.4,365.7 1209.3,365.0 1212.1,371.4 1215.0,361.4 1217.9,367.9 1220.7,365.0 1223.6,363.6 1225.4,369.1 1227.1,372.1 1229.3,363.6 1232.1,368.6 1234.3,363.6 1236.4,369.3 1238.2,367.3 1240.0,365.0 1242.9,370.0 1245.7,362.9 1248.6,367.9 1250.7,370.0 1252.9,365.0 1255.7,369.3 1258.6,366.4 1260.7,370.7 1262.9,365.7 1265.0,361.4 1267.1,372.1 1269.3,365.7 1271.4,369.3 1274.3,365.0 1276.4,370.7 1279.3,365.7 1282.1,367.1 1285.0,368.6 1287.1,366.4 1289.3,370.0 1292.1,360.7 1295.0,366.4 1297.1,365.0 1299.6,365.0" fill="none" stroke="#0000ff" stroke-width="1.3" stroke-linejoin="round"/>
</g>
<rect x="101.8" y="348.2" width="1197.7" height="84.0" fill="none" stroke="#333" stroke-width="1"/>
<line x1="98.3" y1="418.9" x2="101.8" y2="418.9" stroke="#333" stroke-width="0.8"/>
<text xml:space="preserve" x="95.80" y="422.40" font-family="'Liberation Sans', sans-serif" font-size="10" fill="#000" text-anchor="end" textLength="6.36" lengthAdjust="spacingAndGlyphs">0</text>
<line x1="98.3" y1="395.3" x2="101.8" y2="395.3" stroke="#333" stroke-width="0.8"/>
<text xml:space="preserve" x="95.80" y="398.85" font-family="'Liberation Sans', sans-serif" font-size="10" fill="#000" text-anchor="end" textLength="6.36" lengthAdjust="spacingAndGlyphs">5</text>
<line x1="98.3" y1="371.8" x2="101.8" y2="371.8" stroke="#333" stroke-width="0.8"/>
<text xml:space="preserve" x="95.80" y="375.30" font-family="'Liberation Sans', sans-serif" font-size="10" fill="#000" text-anchor="end" textLength="12.72" lengthAdjust="spacingAndGlyphs">10</text>
<line x1="107.1" y1="432.2" x2="107.1" y2="435.7" stroke="#333" stroke-width="0.8"/>
<text xml:space="preserve" x="107.10" y="447.20" font-family="'Liberation Sans', sans-serif" font-size="10" fill="#000" text-anchor="middle" textLength="25.45" lengthAdjust="spacingAndGlyphs">3500</text>
<line x1="166.3" y1="432.2" x2="166.3" y2="435.7" stroke="#333" stroke-width="0.8"/>
<text xml:space="preserve" x="166.32" y="447.20" font-family="'Liberation Sans', sans-serif" font-size="10" fill="#000" text-anchor="middle" textLength="25.45" lengthAdjust="spacingAndGlyphs">3600</text>
<line x1="225.5" y1="432.2" x2="225.5" y2="435.7" stroke="#333" stroke-width="0.8"/>
<text xml:space="preserve" x="225.54" y="447.20" font-family="'Liberation Sans', sans-serif" font-size="10" fill="#000" text-anchor="middle" textLength="25.45" lengthAdjust="spacingAndGlyphs">3700</text>
<line x1="284.8" y1="432.2" x2="284.8" y2="435.7" stroke="#333" stroke-width="0.8"/>
<text xml:space="preserve" x="284.76" y="447.20" font-family="'Liberation Sans', sans-serif" font-size="10" fill="#000" text-anchor="middle" textLength="25.45" lengthAdjust="spacingAndGlyphs">3800</text>
<line x1="344.0" y1="432.2" x2="344.0" y2="435.7" stroke="#333" stroke-width="0.8"/>
<text xml:space="preserve" x="343.98" y="447.20" font-family="'Liberation Sans', sans-serif" font-size="10" fill="#000" text-anchor="middle" textLength="25.45" lengthAdjust="spacingAndGlyphs">3900</text>
<line x1="403.2" y1="432.2" x2="403.2" y2="435.7" stroke="#333" stroke-width="0.8"/>
<text xml:space="preserve" x="403.20" y="447.20" font-family="'Liberation Sans', sans-serif" font-size="10" fill="#000" text-anchor="middle" textLength="25.45" lengthAdjust="spacingAndGlyphs">4000</text>
<line x1="462.4" y1="432.2" x2="462.4" y2="435.7" stroke="#333" stroke-width="0.8"/>
<text xml:space="preserve" x="462.42" y="447.20" font-family="'Liberation Sans', sans-serif" font-size="10" fill="#000" text-anchor="middle" textLength="25.45" lengthAdjust="spacingAndGlyphs">4100</text>
<line x1="521.6" y1="432.2" x2="521.6" y2="435.7" stroke="#333" stroke-width="0.8"/>
<text xml:space="preserve" x="521.64" y="447.20" font-family="'Liberation Sans', sans-serif" font-size="10" fill="#000" text-anchor="middle" textLength="25.45" lengthAdjust="spacingAndGlyphs">4200</text>
<line x1="580.9" y1="432.2" x2="580.9" y2="435.7" stroke="#333" stroke-width="0.8"/>
<text xml:space="preserve" x="580.86" y="447.20" font-family="'Liberation Sans', sans-serif" font-size="10" fill="#000" text-anchor="middle" textLength="25.45" lengthAdjust="spacingAndGlyphs">4300</text>
<line x1="640.1" y1="432.2" x2="640.1" y2="435.7" stroke="#333" stroke-width="0.8"/>
<text xml:space="preserve" x="640.08" y="447.20" font-family="'Liberation Sans', sans-serif" font-size="10" fill="#000" text-anchor="middle" textLength="25.45" lengthAdjust="spacingAndGlyphs">4400</text>
<line x1="699.3" y1="432.2" x2="699.3" y2="435.7" stroke="#333" stroke-width="0.8"/>
<text xml:space="preserve" x="699.30" y="447.20" font-family="'Liberation Sans', sans-serif" font-size="10" fill="#000" text-anchor="middle" textLength="25.45" lengthAdjust="spacingAndGlyphs">4500</text>
<line x1="758.5" y1="432.2" x2="758.5" y2="435.7" stroke="#333" stroke-width="0.8"/>
<text xml:space="preserve" x="758.52" y="447.20" font-family="'Liberation Sans', sans-serif" font-size="10" fill="#000" text-anchor="middle" textLength="25.45" lengthAdjust="spacingAndGlyphs">4600</text>
<line x1="817.7" y1="432.2" x2="817.7" y2="435.7" stroke="#333" stroke-width="0.8"/>
<text xml:space="preserve" x="817.74" y="447.20" font-family="'Liberation Sans', sans-serif" font-size="10" fill="#000" text-anchor="middle" textLength="25.45" lengthAdjust="spacingAndGlyphs">4700</text>
<line x1="877.0" y1="432.2" x2="877.0" y2="435.7" stroke="#333" stroke-width="0.8"/>
<text xml:space="preserve" x="876.96" y="447.20" font-family="'Liberation Sans', sans-serif" font-size="10" fill="#000" text-anchor="middle" textLength="25.45" lengthAdjust="spacingAndGlyphs">4800</text>
<line x1="936.2" y1="432.2" x2="936.2" y2="435.7" stroke="#333" stroke-width="0.8"/>
<text xml:space="preserve" x="936.18" y="447.20" font-family="'Liberation Sans', sans-serif" font-size="10" fill="#000" text-anchor="middle" textLength="25.45" lengthAdjust="spacingAndGlyphs">4900</text>
<line x1="995.4" y1="432.2" x2="995.4" y2="435.7" stroke="#333" stroke-width="0.8"/>
<text xml:space="preserve" x="995.40" y="447.20" font-family="'Liberation Sans', sans-serif" font-size="10" fill="#000" text-anchor="middle" textLength="25.45" lengthAdjust="spacingAndGlyphs">5000</text>
<line x1="1054.6" y1="432.2" x2="1054.6" y2="435.7" stroke="#333" stroke-width="0.8"/>
<text xml:space="preserve" x="1054.62" y="447.20" font-family="'Liberation Sans', sans-serif" font-size="10" fill="#000" text-anchor="middle" textLength="25.45" lengthAdjust="spacingAndGlyphs">5100</text>
<line x1="1113.8" y1="432.2" x2="1113.8" y2="435.7" stroke="#333" stroke-width="0.8"/>
<text xml:space="preserve" x="1113.84" y="447.20" font-family="'Liberation Sans', sans-serif" font-size="10" fill="#000" text-anchor="middle" textLength="25.45" lengthAdjust="spacingAndGlyphs">5200</text>
<line x1="1173.1" y1="432.2" x2="1173.1" y2="435.7" stroke="#333" stroke-width="0.8"/>
<text xml:space="preserve" x="1173.06" y="447.20" font-family="'Liberation Sans', sans-serif" font-size="10" fill="#000" text-anchor="middle" textLength="25.45" lengthAdjust="spacingAndGlyphs">5300</text>
<line x1="1232.3" y1="432.2" x2="1232.3" y2="435.7" stroke="#333" stroke-width="0.8"/>
<text xml:space="preserve" x="1232.28" y="447.20" font-family="'Liberation Sans', sans-serif" font-size="10" fill="#000" text-anchor="middle" textLength="25.45" lengthAdjust="spacingAndGlyphs">5400</text>
<line x1="1291.5" y1="432.2" x2="1291.5" y2="435.7" stroke="#333" stroke-width="0.8"/>
<text xml:space="preserve" x="1291.50" y="447.20" font-family="'Liberation Sans', sans-serif" font-size="10" fill="#000" text-anchor="middle" textLength="25.45" lengthAdjust="spacingAndGlyphs">5500</text>
<text xml:space="preserve" x="107.50" y="346.00" font-family="'Liberation Sans', sans-serif" font-size="9.4" fill="#000" textLength="5.78" lengthAdjust="spacingAndGlyphs">e</text>
<text xml:space="preserve" x="113.78" y="340.80" font-family="'Liberation Sans', sans-serif" font-size="6.58" fill="#000" textLength="13.89" lengthAdjust="spacingAndGlyphs">−17</text>
<text xml:space="preserve" x="127.67" y="346.00" font-family="'Liberation Sans', sans-serif" font-size="9.4" fill="#000" textLength="11.54" lengthAdjust="spacingAndGlyphs">x2</text>
<text xml:space="preserve" x="139.21" y="346.00" font-family="'Liberation Sans', sans-serif" font-size="9.4" fill="#000" textLength="6.43" lengthAdjust="spacingAndGlyphs" font-style="italic">Å</text>
<rect x="480" y="449.5" width="16.5" height="6.5" fill="#ff0000"/>
<text xml:space="preserve" x="503.00" y="456.00" font-family="'Liberation Sans', sans-serif" font-size="8.3" fill="#222" textLength="14.25" lengthAdjust="spacingAndGlyphs">Lyα</text>
<rect x="534" y="449.5" width="16.5" height="6.5" fill="#008000"/>
<text xml:space="preserve" x="557.00" y="456.00" font-family="'Liberation Sans', sans-serif" font-size="8.3" fill="#222" textLength="11.43" lengthAdjust="spacingAndGlyphs">OII</text>
<rect x="586.7" y="449.5" width="16.5" height="6.5" fill="#8a2be2"/>
<text xml:space="preserve" x="609.70" y="456.00" font-family="'Liberation Sans', sans-serif" font-size="8.3" fill="#222" textLength="13.92" lengthAdjust="spacingAndGlyphs">CIV</text>
<rect x="641.5" y="449.5" width="16.5" height="6.5" fill="#800080"/>
<text xml:space="preserve" x="664.50" y="456.00" font-family="'Liberation Sans', sans-serif" font-size="8.3" fill="#222" textLength="13.14" lengthAdjust="spacingAndGlyphs">CIII</text>
<rect x="693.5" y="449.5" width="16.5" height="6.5" fill="#ff00ff"/>
<text xml:space="preserve" x="716.50" y="456.00" font-family="'Liberation Sans', sans-serif" font-size="8.3" fill="#222" textLength="17.33" lengthAdjust="spacingAndGlyphs">MgII</text>
<rect x="749.3" y="449.5" width="16.5" height="6.5" fill="#ffa500"/>
<text xml:space="preserve" x="772.30" y="456.00" font-family="'Liberation Sans', sans-serif" font-size="8.3" fill="#222" textLength="16.24" lengthAdjust="spacingAndGlyphs">HeII</text>
<rect x="803.5" y="449.5" width="16.5" height="6.5" fill="#87ceeb"/>
<text xml:space="preserve" x="826.50" y="456.00" font-family="'Liberation Sans', sans-serif" font-size="8.3" fill="#222" textLength="27.70" lengthAdjust="spacingAndGlyphs">(K)CaII</text>
<rect x="869.3" y="449.5" width="16.5" height="6.5" fill="#87ceeb"/>
<text xml:space="preserve" x="892.30" y="456.00" font-family="'Liberation Sans', sans-serif" font-size="8.3" fill="#222" textLength="28.49" lengthAdjust="spacingAndGlyphs">(H)CaII</text>
<text transform="translate(103.04,329.3) rotate(90)" font-family="'Liberation Sans', sans-serif" font-size="9.8" fill="#ff00ff" text-anchor="middle" textLength="12.6" lengthAdjust="spacingAndGlyphs">CII</text>
<text transform="translate(103.04,346.2) rotate(90)" font-family="'Liberation Sans', sans-serif" font-size="9.8" fill="#ff00ff" text-anchor="middle">{</text>
<text transform="translate(156.54,288.8) rotate(90)" font-family="'Liberation Sans', sans-serif" font-size="9.8" fill="#ffa500" text-anchor="middle" textLength="18.5" lengthAdjust="spacingAndGlyphs">SiIV</text>
<text transform="translate(156.54,303.8) rotate(90)" font-family="'Liberation Sans', sans-serif" font-size="9.8" fill="#ffa500" text-anchor="middle">{</text>
<text transform="translate(155.04,329.3) rotate(90)" font-family="'Liberation Sans', sans-serif" font-size="9.8" fill="#ff0000" text-anchor="middle" textLength="17.1" lengthAdjust="spacingAndGlyphs">OVI</text>
<text transform="translate(155.04,346.2) rotate(90)" font-family="'Liberation Sans', sans-serif" font-size="9.8" fill="#ff0000" text-anchor="middle">{</text>
<text transform="translate(175.04,329.3) rotate(90)" font-family="'Liberation Sans', sans-serif" font-size="9.8" fill="#800080" text-anchor="middle" textLength="19.2" lengthAdjust="spacingAndGlyphs">HeII</text>
<text transform="translate(175.04,346.2) rotate(90)" font-family="'Liberation Sans', sans-serif" font-size="9.8" fill="#800080" text-anchor="middle">{</text>
<text transform="translate(203.54,329.3) rotate(90)" font-family="'Liberation Sans', sans-serif" font-size="9.8" fill="#87ceeb" text-anchor="middle" textLength="23.0" lengthAdjust="spacingAndGlyphs">NeVI</text>
<text transform="translate(203.54,346.2) rotate(90)" font-family="'Liberation Sans', sans-serif" font-size="9.8" fill="#87ceeb" text-anchor="middle">{</text>
<text transform="translate(282.04,329.3) rotate(90)" font-family="'Liberation Sans', sans-serif" font-size="9.8" fill="#8a2be2" text-anchor="middle" textLength="18.5" lengthAdjust="spacingAndGlyphs">SiIV</text>
<text transform="translate(282.04,346.2) rotate(90)" font-family="'Liberation Sans', sans-serif" font-size="9.8" fill="#8a2be2" text-anchor="middle">{</text>
<text transform="translate(323.04,329.3) rotate(90)" font-family="'Liberation Sans', sans-serif" font-size="9.8" fill="#008000" text-anchor="middle" textLength="23.0" lengthAdjust="spacingAndGlyphs">NeVI</text>
<text transform="translate(323.04,346.2) rotate(90)" font-family="'Liberation Sans', sans-serif" font-size="9.8" fill="#008000" text-anchor="middle">{</text>
<text transform="translate(373.54,329.3) rotate(90)" font-family="'Liberation Sans', sans-serif" font-size="9.8" fill="#87ceeb" text-anchor="middle" textLength="13.5" lengthAdjust="spacingAndGlyphs">OII</text>
<text transform="translate(373.54,346.2) rotate(90)" font-family="'Liberation Sans', sans-serif" font-size="9.8" fill="#87ceeb" text-anchor="middle">{</text>
<text transform="translate(387.04,329.3) rotate(90)" font-family="'Liberation Sans', sans-serif" font-size="9.8" fill="#ffa500" text-anchor="middle" textLength="16.4" lengthAdjust="spacingAndGlyphs">CIV</text>
<text transform="translate(387.04,346.2) rotate(90)" font-family="'Liberation Sans', sans-serif" font-size="9.8" fill="#ffa500" text-anchor="middle">{</text>
<text transform="translate(394.04,329.3) rotate(90)" font-family="'Liberation Sans', sans-serif" font-size="9.8" fill="#87ceeb" text-anchor="middle" textLength="13.5" lengthAdjust="spacingAndGlyphs">OII</text>
<text transform="translate(394.04,346.2) rotate(90)" font-family="'Liberation Sans', sans-serif" font-size="9.8" fill="#87ceeb" text-anchor="middle">{</text>
<text transform="translate(575.54,329.3) rotate(90)" font-family="'Liberation Sans', sans-serif" font-size="9.8" fill="#ff0000" text-anchor="middle" textLength="14.0" lengthAdjust="spacingAndGlyphs">NV</text>
<text transform="translate(575.54,346.2) rotate(90)" font-family="'Liberation Sans', sans-serif" font-size="9.8" fill="#ff0000" text-anchor="middle">{</text>
<text transform="translate(622.04,329.3) rotate(90)" font-family="'Liberation Sans', sans-serif" font-size="9.8" fill="#ff0000" text-anchor="middle" textLength="14.7" lengthAdjust="spacingAndGlyphs">SiII</text>
<text transform="translate(622.04,346.2) rotate(90)" font-family="'Liberation Sans', sans-serif" font-size="9.8" fill="#ff0000" text-anchor="middle">{</text>
<text transform="translate(670.04,329.3) rotate(90)" font-family="'Liberation Sans', sans-serif" font-size="9.8" fill="#8a2be2" text-anchor="middle" textLength="19.2" lengthAdjust="spacingAndGlyphs">HeII</text>
<text transform="translate(670.04,346.2) rotate(90)" font-family="'Liberation Sans', sans-serif" font-size="9.8" fill="#8a2be2" text-anchor="middle">{</text>
<text transform="translate(757.04,329.3) rotate(90)" font-family="'Liberation Sans', sans-serif" font-size="9.8" fill="#87ceeb" text-anchor="middle" textLength="13.2" lengthAdjust="spacingAndGlyphs">Hγ</text>
<text transform="translate(757.04,346.2) rotate(90)" font-family="'Liberation Sans', sans-serif" font-size="9.8" fill="#87ceeb" text-anchor="middle">{</text>
<text transform="translate(782.54,329.3) rotate(90)" font-family="'Liberation Sans', sans-serif" font-size="9.8" fill="#87ceeb" text-anchor="middle" textLength="13.2" lengthAdjust="spacingAndGlyphs">Hγ</text>
<text transform="translate(782.54,346.2) rotate(90)" font-family="'Liberation Sans', sans-serif" font-size="9.8" fill="#87ceeb" text-anchor="middle">{</text>
<text transform="translate(896.54,329.3) rotate(90)" font-family="'Liberation Sans', sans-serif" font-size="9.8" fill="#ff0000" text-anchor="middle" textLength="18.5" lengthAdjust="spacingAndGlyphs">SiIV</text>
<text transform="translate(896.54,346.2) rotate(90)" font-family="'Liberation Sans', sans-serif" font-size="9.8" fill="#ff0000" text-anchor="middle">{</text>
<text transform="translate(932.04,288.8) rotate(90)" font-family="'Liberation Sans', sans-serif" font-size="9.8" fill="#ffa500" text-anchor="middle" textLength="15.5" lengthAdjust="spacingAndGlyphs">CIII</text>
<text transform="translate(932.04,303.8) rotate(90)" font-family="'Liberation Sans', sans-serif" font-size="9.8" fill="#ffa500" text-anchor="middle">{</text>
<text transform="translate(934.04,329.3) rotate(90)" font-family="'Liberation Sans', sans-serif" font-size="9.8" fill="#008000" text-anchor="middle" textLength="13.2" lengthAdjust="spacingAndGlyphs">Hγ</text>
<text transform="translate(934.04,346.2) rotate(90)" font-family="'Liberation Sans', sans-serif" font-size="9.8" fill="#008000" text-anchor="middle">{</text>
<text transform="translate(1066.04,329.3) rotate(90)" font-family="'Liberation Sans', sans-serif" font-size="9.8" fill="#800080" text-anchor="middle" textLength="12.6" lengthAdjust="spacingAndGlyphs">CII</text>
<text transform="translate(1066.04,346.2) rotate(90)" font-family="'Liberation Sans', sans-serif" font-size="9.8" fill="#800080" text-anchor="middle">{</text>
<text transform="translate(1085.04,329.3) rotate(90)" font-family="'Liberation Sans', sans-serif" font-size="9.8" fill="#87ceeb" text-anchor="middle" textLength="13.6" lengthAdjust="spacingAndGlyphs">Hβ</text>
<text transform="translate(1085.04,346.2) rotate(90)" font-family="'Liberation Sans', sans-serif" font-size="9.8" fill="#87ceeb" text-anchor="middle">{</text>
<text transform="translate(1102.04,329.3) rotate(90)" font-family="'Liberation Sans', sans-serif" font-size="9.8" fill="#8a2be2" text-anchor="middle" textLength="15.5" lengthAdjust="spacingAndGlyphs">CIII</text>
<text transform="translate(1102.04,346.2) rotate(90)" font-family="'Liberation Sans', sans-serif" font-size="9.8" fill="#8a2be2" text-anchor="middle">{</text>
<text transform="translate(1112.04,329.3) rotate(90)" font-family="'Liberation Sans', sans-serif" font-size="9.8" fill="#87ceeb" text-anchor="middle" textLength="13.6" lengthAdjust="spacingAndGlyphs">Hβ</text>
<text transform="translate(1112.04,346.2) rotate(90)" font-family="'Liberation Sans', sans-serif" font-size="9.8" fill="#87ceeb" text-anchor="middle">{</text>
<text transform="translate(1146.04,329.3) rotate(90)" font-family="'Liberation Sans', sans-serif" font-size="9.8" fill="#87ceeb" text-anchor="middle" textLength="16.4" lengthAdjust="spacingAndGlyphs">OIII</text>
<text transform="translate(1146.04,346.2) rotate(90)" font-family="'Liberation Sans', sans-serif" font-size="9.8" fill="#87ceeb" text-anchor="middle">{</text>
<text transform="translate(1174.04,329.3) rotate(90)" font-family="'Liberation Sans', sans-serif" font-size="9.8" fill="#87ceeb" text-anchor="middle" textLength="16.4" lengthAdjust="spacingAndGlyphs">OIII</text>
<text transform="translate(1174.04,346.2) rotate(90)" font-family="'Liberation Sans', sans-serif" font-size="9.8" fill="#87ceeb" text-anchor="middle">{</text>
<text transform="translate(1176.04,288.8) rotate(90)" font-family="'Liberation Sans', sans-serif" font-size="9.8" fill="#87ceeb" text-anchor="middle" textLength="16.4" lengthAdjust="spacingAndGlyphs">OIII</text>
<text transform="translate(1176.04,303.8) rotate(90)" font-family="'Liberation Sans', sans-serif" font-size="9.8" fill="#87ceeb" text-anchor="middle">{</text>
<text transform="translate(1204.04,288.8) rotate(90)" font-family="'Liberation Sans', sans-serif" font-size="9.8" fill="#87ceeb" text-anchor="middle" textLength="16.4" lengthAdjust="spacingAndGlyphs">OIII</text>
<text transform="translate(1204.04,303.8) rotate(90)" font-family="'Liberation Sans', sans-serif" font-size="9.8" fill="#87ceeb" text-anchor="middle">{</text>
<text transform="translate(1208.04,329.3) rotate(90)" font-family="'Liberation Sans', sans-serif" font-size="9.8" fill="#ff0000" text-anchor="middle" textLength="16.4" lengthAdjust="spacingAndGlyphs">CIV</text>
<text transform="translate(1208.04,346.2) rotate(90)" font-family="'Liberation Sans', sans-serif" font-size="9.8" fill="#ff0000" text-anchor="middle">{</text>
<text transform="translate(1282.04,329.3) rotate(90)" font-family="'Liberation Sans', sans-serif" font-size="9.8" fill="#008000" text-anchor="middle" textLength="13.6" lengthAdjust="spacingAndGlyphs">Hβ</text>
<text transform="translate(1282.04,346.2) rotate(90)" font-family="'Liberation Sans', sans-serif" font-size="9.8" fill="#008000" text-anchor="middle">{</text>
<text xml:space="preserve" x="70.00" y="498.50" font-family="'Liberation Mono', monospace" font-size="12.95" fill="#000" textLength="491.18" lengthAdjust="spacingAndGlyphs">HSC-DEX : Possible Matches = 1 (within +/- 3")  P(LAE)/P(OII): </text>
<text xml:space="preserve" x="561.18" y="498.50" font-family="'Liberation Sans', sans-serif" font-size="12.95" fill="#000" textLength="37.07" lengthAdjust="spacingAndGlyphs">0.081</text>
<text xml:space="preserve" x="602.65" y="492.90" font-family="'Liberation Sans', sans-serif" font-size="9.065" fill="#000" textLength="25.95" lengthAdjust="spacingAndGlyphs">0.145</text>
<text xml:space="preserve" x="602.65" y="502.40" font-family="'Liberation Sans', sans-serif" font-size="9.065" fill="#000" textLength="25.95" lengthAdjust="spacingAndGlyphs">0.048</text>
<text xml:space="preserve" x="629.80" y="498.50" font-family="'Liberation Mono', monospace" font-size="12.95" fill="#000" textLength="31.19" lengthAdjust="spacingAndGlyphs"> (r)</text>
<defs>
<radialGradient id="blob1" cx="0.5" cy="0.5" r="0.5">
 <stop offset="0" stop-color="#000"/><stop offset="0.5" stop-color="#000"/><stop offset="0.68" stop-color="#383838"/>
 <stop offset="0.85" stop-color="#a0a0a0"/><stop offset="1" stop-color="#eeeeee" stop-opacity="0"/>
</radialGradient>
<radialGradient id="blob2" cx="0.5" cy="0.5" r="0.5">
 <stop offset="0" stop-color="#000"/><stop offset="0.56" stop-color="#000"/><stop offset="0.74" stop-color="#4a4a4a"/>
 <stop offset="0.9" stop-color="#c0c0c0"/><stop offset="1" stop-color="#eeeeee" stop-opacity="0"/>
</radialGradient>
<radialGradient id="blobg" cx="0.5" cy="0.5" r="0.5">
 <stop offset="0" stop-color="#999" stop-opacity="0.9"/><stop offset="0.6" stop-color="#bbb" stop-opacity="0.6"/><stop offset="1" stop-color="#ddd" stop-opacity="0"/>
</radialGradient>
<filter id="nzc" x="0" y="0" width="1" height="1" color-interpolation-filters="sRGB">
 <feTurbulence type="fractalNoise" baseFrequency="0.7" numOctaves="1" seed="23" result="t"/>
 <feColorMatrix in="t" type="matrix" values="0.1 0 0 0 0.45  0.1 0 0 0 0.45  0.1 0 0 0 0.45  0 0 0 0 1" result="g"/>
 <feBlend in="g" in2="SourceGraphic" mode="hard-light"/>
</filter>
</defs>
<defs><clipPath id="cf"><rect x="70.0" y="532.5" width="148" height="148"/></clipPath><clipPath id="cl"><rect x="255.5" y="532.5" width="148" height="148"/></clipPath><clipPath id="ch"><rect x="440.5" y="532.5" width="148" height="148"/></clipPath></defs>
<g clip-path="url(#cf)">
<rect x="70.0" y="532.5" width="148" height="148" fill="#f0f0f0" filter="url(#nzc)"/>
<circle cx="152" cy="597" r="30" fill="url(#blob1)"/>
<ellipse cx="220" cy="624" rx="12" ry="17" fill="url(#blobg)"/>
<circle cx="147.3" cy="556.8" r="12.3" fill="none" stroke="#666" stroke-width="1.1"/>
<circle cx="123.3" cy="562.9" r="12.3" fill="none" stroke="#666" stroke-width="1.1"/>
<circle cx="92.2" cy="589.8" r="12.3" fill="none" stroke="#666" stroke-width="1.1"/>
<circle cx="115.6" cy="585.0" r="12.3" fill="none" stroke="#666" stroke-width="1.1"/>
<circle cx="140.2" cy="577.7" r="12.3" fill="none" stroke="#666" stroke-width="1.1"/>
<circle cx="163.3" cy="574.4" r="12.3" fill="none" stroke="#666" stroke-width="1.1"/>
<circle cx="176.6" cy="590.9" r="12.3" fill="none" stroke="#666" stroke-width="1.1"/>
<circle cx="106.1" cy="607.4" r="12.3" fill="none" stroke="#666" stroke-width="1.1"/>
<circle cx="194.2" cy="611.8" r="12.3" fill="none" stroke="#666" stroke-width="1.1"/>
<circle cx="99.5" cy="631.7" r="12.3" fill="none" stroke="#666" stroke-width="1.1"/>
<circle cx="123.7" cy="625.0" r="12.3" fill="none" stroke="#666" stroke-width="1.1"/>
<circle cx="161.8" cy="638.9" r="12.3" fill="none" stroke="#666" stroke-width="1.1"/>
<circle cx="139.1" cy="644.2" r="12.3" fill="none" stroke="#666" stroke-width="1.1"/>
<circle cx="114.9" cy="648.6" r="12.3" fill="none" stroke="#666" stroke-width="1.1"/>
<circle cx="153.4" cy="661.4" r="12.3" fill="none" stroke="#666" stroke-width="1.1"/>
<circle cx="186.0" cy="571.1" r="12.3" fill="none" stroke="#666" stroke-width="1.1"/>
<circle cx="185.4" cy="636.7" r="12.3" fill="none" stroke="#666" stroke-width="1.1"/>
<circle cx="150.1" cy="553.9" r="12.5" fill="none" stroke="#909090" stroke-width="1.1" stroke-dasharray="1.5,1"/>
<circle cx="187.6" cy="571.1" r="12.5" fill="none" stroke="#909090" stroke-width="1.1" stroke-dasharray="1.5,1"/>
<circle cx="196.8" cy="611.8" r="12.5" fill="none" stroke="#909090" stroke-width="1.1" stroke-dasharray="1.5,1"/>
<circle cx="186.5" cy="639.4" r="12.5" fill="none" stroke="#909090" stroke-width="1.1" stroke-dasharray="1.5,1"/>
<circle cx="172.2" cy="619.5" r="12.5" fill="none" stroke="#909090" stroke-width="1.1" stroke-dasharray="1.5,1"/>
<circle cx="130.3" cy="604.1" r="12.4" fill="none" stroke="#ffa500" stroke-width="1.3"/>
<circle cx="154.5" cy="598.0" r="12.4" fill="none" stroke="#0000ff" stroke-width="1.3"/>
<circle cx="145.7" cy="621.1" r="12.4" fill="none" stroke="#00ff00" stroke-width="1.3"/>
<circle cx="170.0" cy="617.8" r="12.4" fill="none" stroke="#ff0000" stroke-width="1.3" stroke-dasharray="2,1"/>
</g>
<rect x="94.8" y="557.7" width="98.5" height="98.3" fill="none" stroke="#ff0000" stroke-width="1.2"/>
<text xml:space="preserve" x="144.00" y="547.50" font-family="'Liberation Sans', sans-serif" font-size="10.6" fill="#ff0000" text-anchor="middle" textLength="7.93" lengthAdjust="spacingAndGlyphs">N</text>
<text xml:space="preserve" x="80.00" y="611.00" font-family="'Liberation Sans', sans-serif" font-size="10.6" fill="#ff0000" text-anchor="middle" textLength="6.70" lengthAdjust="spacingAndGlyphs">E</text>
<line x1="78.7" y1="680.5" x2="78.7" y2="684.0" stroke="#333" stroke-width="0.8"/>
<text xml:space="preserve" x="78.66" y="695.50" font-family="'Liberation Sans', sans-serif" font-size="10.6" fill="#000" text-anchor="middle" textLength="15.63" lengthAdjust="spacingAndGlyphs">−4</text>
<line x1="66.5" y1="671.8" x2="70.0" y2="671.8" stroke="#333" stroke-width="0.8"/>
<text xml:space="preserve" x="64.00" y="675.64" font-family="'Liberation Sans', sans-serif" font-size="10.6" fill="#000" text-anchor="end" textLength="15.63" lengthAdjust="spacingAndGlyphs">−4</text>
<line x1="111.3" y1="680.5" x2="111.3" y2="684.0" stroke="#333" stroke-width="0.8"/>
<text xml:space="preserve" x="111.33" y="695.50" font-family="'Liberation Sans', sans-serif" font-size="10.6" fill="#000" text-anchor="middle" textLength="15.63" lengthAdjust="spacingAndGlyphs">−2</text>
<line x1="66.5" y1="639.2" x2="70.0" y2="639.2" stroke="#333" stroke-width="0.8"/>
<text xml:space="preserve" x="64.00" y="642.97" font-family="'Liberation Sans', sans-serif" font-size="10.6" fill="#000" text-anchor="end" textLength="15.63" lengthAdjust="spacingAndGlyphs">−2</text>
<line x1="144.0" y1="680.5" x2="144.0" y2="684.0" stroke="#333" stroke-width="0.8"/>
<text xml:space="preserve" x="144.00" y="695.50" font-family="'Liberation Sans', sans-serif" font-size="10.6" fill="#000" text-anchor="middle" textLength="6.74" lengthAdjust="spacingAndGlyphs">0</text>
<line x1="66.5" y1="606.5" x2="70.0" y2="606.5" stroke="#333" stroke-width="0.8"/>
<text xml:space="preserve" x="64.00" y="610.30" font-family="'Liberation Sans', sans-serif" font-size="10.6" fill="#000" text-anchor="end" textLength="6.74" lengthAdjust="spacingAndGlyphs">0</text>
<line x1="176.7" y1="680.5" x2="176.7" y2="684.0" stroke="#333" stroke-width="0.8"/>
<text xml:space="preserve" x="176.67" y="695.50" font-family="'Liberation Sans', sans-serif" font-size="10.6" fill="#000" text-anchor="middle" textLength="6.74" lengthAdjust="spacingAndGlyphs">2</text>
<line x1="66.5" y1="573.8" x2="70.0" y2="573.8" stroke="#333" stroke-width="0.8"/>
<text xml:space="preserve" x="64.00" y="577.63" font-family="'Liberation Sans', sans-serif" font-size="10.6" fill="#000" text-anchor="end" textLength="6.74" lengthAdjust="spacingAndGlyphs">2</text>
<line x1="209.3" y1="680.5" x2="209.3" y2="684.0" stroke="#333" stroke-width="0.8"/>
<text xml:space="preserve" x="209.34" y="695.50" font-family="'Liberation Sans', sans-serif" font-size="10.6" fill="#000" text-anchor="middle" textLength="6.74" lengthAdjust="spacingAndGlyphs">4</text>
<line x1="66.5" y1="541.2" x2="70.0" y2="541.2" stroke="#333" stroke-width="0.8"/>
<text xml:space="preserve" x="64.00" y="544.96" font-family="'Liberation Sans', sans-serif" font-size="10.6" fill="#000" text-anchor="end" textLength="6.74" lengthAdjust="spacingAndGlyphs">4</text>
<rect x="70.0" y="532.5" width="148.0" height="148.0" fill="none" stroke="#222" stroke-width="1"/>
<text xml:space="preserve" x="144.00" y="525.00" font-family="'Liberation Sans', sans-serif" font-size="12.4" fill="#000" text-anchor="middle" textLength="88.96" lengthAdjust="spacingAndGlyphs">Fiber Positions</text>
<text xml:space="preserve" x="144.00" y="707.00" font-family="'Liberation Sans', sans-serif" font-size="10.6" fill="#000" text-anchor="middle" textLength="39.84" lengthAdjust="spacingAndGlyphs">arcsecs</text>
<g clip-path="url(#cl)">
<rect x="255.5" y="532.5" width="148" height="148" fill="#3b528b"/>
<g filter="url(#bl1)"><path fill="#2a668a" d="M255.5 532.5h4.3v4.3h-4.3zM271.5 536.5h4.3v4.3h-4.3zM279.5 548.5h4.3v4.3h-4.3zM319.5 548.5h4.3v4.3h-4.3zM339.5 552.5h4.3v4.3h-4.3zM275.5 572.5h4.3v4.3h-4.3zM279.5 580.5h4.3v4.3h-4.3zM379.5 616.5h4.3v4.3h-4.3zM367.5 620.5h4.3v4.3h-4.3zM255.5 632.5h4.3v4.3h-4.3zM255.5 636.5h4.3v4.3h-4.3zM255.5 640.5h4.3v4.3h-4.3zM255.5 644.5h4.3v4.3h-4.3zM375.5 656.5h4.3v4.3h-4.3zM287.5 664.5h4.3v4.3h-4.3zM367.5 664.5h4.3v4.3h-4.3zM267.5 668.5h4.3v4.3h-4.3zM255.5 672.5h4.3v4.3h-4.3zM259.5 672.5h4.3v4.3h-4.3zM371.5 672.5h4.3v4.3h-4.3zM255.5 676.5h4.3v4.3h-4.3z"/><path fill="#2a6c8a" d="M259.5 532.5h4.3v4.3h-4.3zM255.5 536.5h4.3v4.3h-4.3zM259.5 536.5h4.3v4.3h-4.3zM271.5 540.5h4.3v4.3h-4.3zM343.5 544.5h4.3v4.3h-4.3zM331.5 556.5h4.3v4.3h-4.3zM295.5 560.5h4.3v4.3h-4.3zM279.5 576.5h4.3v4.3h-4.3zM319.5 596.5h4.3v4.3h-4.3zM279.5 600.5h4.3v4.3h-4.3zM279.5 604.5h4.3v4.3h-4.3zM343.5 604.5h4.3v4.3h-4.3zM279.5 608.5h4.3v4.3h-4.3zM351.5 608.5h4.3v4.3h-4.3zM359.5 612.5h4.3v4.3h-4.3zM375.5 616.5h4.3v4.3h-4.3zM371.5 620.5h4.3v4.3h-4.3zM375.5 620.5h4.3v4.3h-4.3zM283.5 624.5h4.3v4.3h-4.3zM375.5 624.5h4.3v4.3h-4.3zM375.5 628.5h4.3v4.3h-4.3zM375.5 632.5h4.3v4.3h-4.3zM375.5 636.5h4.3v4.3h-4.3zM375.5 640.5h4.3v4.3h-4.3zM375.5 644.5h4.3v4.3h-4.3zM375.5 648.5h4.3v4.3h-4.3zM315.5 652.5h4.3v4.3h-4.3zM335.5 652.5h4.3v4.3h-4.3zM375.5 652.5h4.3v4.3h-4.3zM355.5 656.5h4.3v4.3h-4.3zM287.5 660.5h4.3v4.3h-4.3zM303.5 660.5h4.3v4.3h-4.3zM371.5 660.5h4.3v4.3h-4.3zM291.5 664.5h4.3v4.3h-4.3zM299.5 664.5h4.3v4.3h-4.3zM283.5 668.5h4.3v4.3h-4.3zM367.5 668.5h4.3v4.3h-4.3zM263.5 672.5h4.3v4.3h-4.3zM259.5 676.5h4.3v4.3h-4.3zM307.5 676.5h4.3v4.3h-4.3zM371.5 676.5h4.3v4.3h-4.3z"/><path fill="#2a728a" d="M263.5 532.5h4.3v4.3h-4.3zM263.5 536.5h4.3v4.3h-4.3zM255.5 540.5h4.3v4.3h-4.3zM259.5 540.5h4.3v4.3h-4.3zM343.5 540.5h4.3v4.3h-4.3zM283.5 552.5h4.3v4.3h-4.3zM323.5 552.5h4.3v4.3h-4.3zM271.5 568.5h4.3v4.3h-4.3zM307.5 576.5h4.3v4.3h-4.3zM311.5 584.5h4.3v4.3h-4.3zM315.5 592.5h4.3v4.3h-4.3zM323.5 600.5h4.3v4.3h-4.3zM283.5 620.5h4.3v4.3h-4.3zM319.5 648.5h4.3v4.3h-4.3zM323.5 648.5h4.3v4.3h-4.3zM327.5 648.5h4.3v4.3h-4.3zM339.5 652.5h4.3v4.3h-4.3zM307.5 656.5h4.3v4.3h-4.3zM359.5 656.5h4.3v4.3h-4.3zM371.5 656.5h4.3v4.3h-4.3zM367.5 660.5h4.3v4.3h-4.3zM295.5 664.5h4.3v4.3h-4.3zM287.5 668.5h4.3v4.3h-4.3zM267.5 672.5h4.3v4.3h-4.3zM271.5 672.5h4.3v4.3h-4.3zM275.5 672.5h4.3v4.3h-4.3zM279.5 672.5h4.3v4.3h-4.3zM303.5 672.5h4.3v4.3h-4.3zM367.5 672.5h4.3v4.3h-4.3zM263.5 676.5h4.3v4.3h-4.3zM303.5 676.5h4.3v4.3h-4.3zM367.5 676.5h4.3v4.3h-4.3z"/><path fill="#24728a" d="M267.5 532.5h4.3v4.3h-4.3zM255.5 544.5h4.3v4.3h-4.3zM271.5 544.5h4.3v4.3h-4.3zM287.5 632.5h4.3v4.3h-4.3zM343.5 652.5h4.3v4.3h-4.3zM267.5 676.5h4.3v4.3h-4.3z"/><path fill="#30668a" d="M271.5 532.5h4.3v4.3h-4.3zM275.5 544.5h4.3v4.3h-4.3zM303.5 568.5h4.3v4.3h-4.3zM279.5 596.5h4.3v4.3h-4.3zM327.5 600.5h4.3v4.3h-4.3zM279.5 612.5h4.3v4.3h-4.3zM379.5 620.5h4.3v4.3h-4.3zM259.5 636.5h4.3v4.3h-4.3zM259.5 640.5h4.3v4.3h-4.3zM259.5 644.5h4.3v4.3h-4.3zM331.5 652.5h4.3v4.3h-4.3zM363.5 660.5h4.3v4.3h-4.3zM371.5 664.5h4.3v4.3h-4.3zM263.5 668.5h4.3v4.3h-4.3zM271.5 668.5h4.3v4.3h-4.3zM303.5 668.5h4.3v4.3h-4.3zM371.5 668.5h4.3v4.3h-4.3zM307.5 672.5h4.3v4.3h-4.3zM363.5 676.5h4.3v4.3h-4.3z"/><path fill="#364e8a" d="M275.5 532.5h4.3v4.3h-4.3zM387.5 532.5h4.3v4.3h-4.3zM391.5 532.5h4.3v4.3h-4.3zM395.5 532.5h4.3v4.3h-4.3zM399.5 532.5h4.3v4.3h-4.3zM387.5 536.5h4.3v4.3h-4.3zM391.5 536.5h4.3v4.3h-4.3zM395.5 536.5h4.3v4.3h-4.3zM399.5 536.5h4.3v4.3h-4.3zM315.5 540.5h4.3v4.3h-4.3zM347.5 540.5h4.3v4.3h-4.3zM387.5 540.5h4.3v4.3h-4.3zM391.5 540.5h4.3v4.3h-4.3zM395.5 540.5h4.3v4.3h-4.3zM399.5 540.5h4.3v4.3h-4.3zM279.5 544.5h4.3v4.3h-4.3zM387.5 544.5h4.3v4.3h-4.3zM391.5 544.5h4.3v4.3h-4.3zM395.5 544.5h4.3v4.3h-4.3zM399.5 544.5h4.3v4.3h-4.3zM395.5 548.5h4.3v4.3h-4.3zM399.5 548.5h4.3v4.3h-4.3zM395.5 552.5h4.3v4.3h-4.3zM399.5 552.5h4.3v4.3h-4.3zM323.5 556.5h4.3v4.3h-4.3zM339.5 556.5h4.3v4.3h-4.3zM399.5 556.5h4.3v4.3h-4.3zM299.5 560.5h4.3v4.3h-4.3zM327.5 560.5h4.3v4.3h-4.3zM399.5 560.5h4.3v4.3h-4.3zM399.5 564.5h4.3v4.3h-4.3zM399.5 568.5h4.3v4.3h-4.3zM271.5 572.5h4.3v4.3h-4.3zM399.5 572.5h4.3v4.3h-4.3zM311.5 576.5h4.3v4.3h-4.3zM399.5 576.5h4.3v4.3h-4.3zM275.5 580.5h4.3v4.3h-4.3zM399.5 580.5h4.3v4.3h-4.3zM315.5 584.5h4.3v4.3h-4.3zM399.5 584.5h4.3v4.3h-4.3zM399.5 588.5h4.3v4.3h-4.3zM399.5 592.5h4.3v4.3h-4.3zM399.5 596.5h4.3v4.3h-4.3zM275.5 600.5h4.3v4.3h-4.3zM339.5 600.5h4.3v4.3h-4.3zM399.5 600.5h4.3v4.3h-4.3zM387.5 604.5h4.3v4.3h-4.3zM391.5 604.5h4.3v4.3h-4.3zM395.5 604.5h4.3v4.3h-4.3zM399.5 604.5h4.3v4.3h-4.3zM387.5 608.5h4.3v4.3h-4.3zM391.5 608.5h4.3v4.3h-4.3zM395.5 608.5h4.3v4.3h-4.3zM399.5 608.5h4.3v4.3h-4.3zM275.5 612.5h4.3v4.3h-4.3zM387.5 612.5h4.3v4.3h-4.3zM391.5 612.5h4.3v4.3h-4.3zM395.5 612.5h4.3v4.3h-4.3zM399.5 612.5h4.3v4.3h-4.3zM387.5 616.5h4.3v4.3h-4.3zM391.5 616.5h4.3v4.3h-4.3zM395.5 616.5h4.3v4.3h-4.3zM399.5 616.5h4.3v4.3h-4.3zM255.5 620.5h4.3v4.3h-4.3zM387.5 620.5h4.3v4.3h-4.3zM391.5 620.5h4.3v4.3h-4.3zM395.5 620.5h4.3v4.3h-4.3zM399.5 620.5h4.3v4.3h-4.3zM387.5 624.5h4.3v4.3h-4.3zM391.5 624.5h4.3v4.3h-4.3zM395.5 624.5h4.3v4.3h-4.3zM399.5 624.5h4.3v4.3h-4.3zM387.5 628.5h4.3v4.3h-4.3zM391.5 628.5h4.3v4.3h-4.3zM395.5 628.5h4.3v4.3h-4.3zM399.5 628.5h4.3v4.3h-4.3zM283.5 632.5h4.3v4.3h-4.3zM387.5 632.5h4.3v4.3h-4.3zM391.5 632.5h4.3v4.3h-4.3zM395.5 632.5h4.3v4.3h-4.3zM399.5 632.5h4.3v4.3h-4.3zM263.5 636.5h4.3v4.3h-4.3zM283.5 636.5h4.3v4.3h-4.3zM387.5 636.5h4.3v4.3h-4.3zM391.5 636.5h4.3v4.3h-4.3zM395.5 636.5h4.3v4.3h-4.3zM399.5 636.5h4.3v4.3h-4.3zM387.5 640.5h4.3v4.3h-4.3zM391.5 640.5h4.3v4.3h-4.3zM395.5 640.5h4.3v4.3h-4.3zM399.5 640.5h4.3v4.3h-4.3zM387.5 644.5h4.3v4.3h-4.3zM391.5 644.5h4.3v4.3h-4.3zM395.5 644.5h4.3v4.3h-4.3zM399.5 644.5h4.3v4.3h-4.3zM387.5 648.5h4.3v4.3h-4.3zM391.5 648.5h4.3v4.3h-4.3zM395.5 648.5h4.3v4.3h-4.3zM399.5 648.5h4.3v4.3h-4.3zM387.5 652.5h4.3v4.3h-4.3zM391.5 652.5h4.3v4.3h-4.3zM395.5 652.5h4.3v4.3h-4.3zM399.5 652.5h4.3v4.3h-4.3zM319.5 656.5h4.3v4.3h-4.3zM387.5 656.5h4.3v4.3h-4.3zM391.5 656.5h4.3v4.3h-4.3zM395.5 656.5h4.3v4.3h-4.3zM399.5 656.5h4.3v4.3h-4.3zM387.5 660.5h4.3v4.3h-4.3zM391.5 660.5h4.3v4.3h-4.3zM395.5 660.5h4.3v4.3h-4.3zM399.5 660.5h4.3v4.3h-4.3zM327.5 664.5h4.3v4.3h-4.3zM387.5 664.5h4.3v4.3h-4.3zM391.5 664.5h4.3v4.3h-4.3zM395.5 664.5h4.3v4.3h-4.3zM399.5 664.5h4.3v4.3h-4.3zM387.5 668.5h4.3v4.3h-4.3zM391.5 668.5h4.3v4.3h-4.3zM395.5 668.5h4.3v4.3h-4.3zM399.5 668.5h4.3v4.3h-4.3zM323.5 672.5h4.3v4.3h-4.3zM359.5 672.5h4.3v4.3h-4.3zM387.5 672.5h4.3v4.3h-4.3zM391.5 672.5h4.3v4.3h-4.3zM395.5 672.5h4.3v4.3h-4.3zM399.5 672.5h4.3v4.3h-4.3zM323.5 676.5h4.3v4.3h-4.3zM359.5 676.5h4.3v4.3h-4.3zM387.5 676.5h4.3v4.3h-4.3zM391.5 676.5h4.3v4.3h-4.3zM395.5 676.5h4.3v4.3h-4.3zM399.5 676.5h4.3v4.3h-4.3z"/><path fill="#42367e" d="M279.5 532.5h4.3v4.3h-4.3zM375.5 536.5h4.3v4.3h-4.3zM351.5 540.5h4.3v4.3h-4.3zM283.5 544.5h4.3v4.3h-4.3zM287.5 548.5h4.3v4.3h-4.3zM383.5 548.5h4.3v4.3h-4.3zM323.5 560.5h4.3v4.3h-4.3zM391.5 560.5h4.3v4.3h-4.3zM307.5 568.5h4.3v4.3h-4.3zM263.5 572.5h4.3v4.3h-4.3zM311.5 572.5h4.3v4.3h-4.3zM391.5 572.5h4.3v4.3h-4.3zM271.5 576.5h4.3v4.3h-4.3zM391.5 576.5h4.3v4.3h-4.3zM379.5 580.5h4.3v4.3h-4.3zM391.5 580.5h4.3v4.3h-4.3zM391.5 584.5h4.3v4.3h-4.3zM371.5 588.5h4.3v4.3h-4.3zM379.5 592.5h4.3v4.3h-4.3zM327.5 596.5h4.3v4.3h-4.3zM347.5 600.5h4.3v4.3h-4.3zM271.5 608.5h4.3v4.3h-4.3zM375.5 608.5h4.3v4.3h-4.3zM259.5 616.5h4.3v4.3h-4.3zM263.5 620.5h4.3v4.3h-4.3zM275.5 624.5h4.3v4.3h-4.3zM267.5 632.5h4.3v4.3h-4.3zM267.5 648.5h4.3v4.3h-4.3zM267.5 656.5h4.3v4.3h-4.3zM275.5 656.5h4.3v4.3h-4.3zM315.5 660.5h4.3v4.3h-4.3zM339.5 660.5h4.3v4.3h-4.3zM323.5 664.5h4.3v4.3h-4.3zM335.5 672.5h4.3v4.3h-4.3zM355.5 672.5h4.3v4.3h-4.3zM355.5 676.5h4.3v4.3h-4.3z"/><path fill="#481e6c" d="M283.5 532.5h4.3v4.3h-4.3zM359.5 536.5h4.3v4.3h-4.3zM363.5 536.5h4.3v4.3h-4.3zM347.5 552.5h4.3v4.3h-4.3zM319.5 580.5h4.3v4.3h-4.3zM383.5 592.5h4.3v4.3h-4.3zM383.5 596.5h4.3v4.3h-4.3zM255.5 608.5h4.3v4.3h-4.3zM259.5 608.5h4.3v4.3h-4.3z"/><path fill="#420054" d="M287.5 532.5h4.3v4.3h-4.3zM291.5 532.5h4.3v4.3h-4.3zM295.5 532.5h4.3v4.3h-4.3zM299.5 532.5h4.3v4.3h-4.3zM303.5 532.5h4.3v4.3h-4.3zM307.5 532.5h4.3v4.3h-4.3zM291.5 536.5h4.3v4.3h-4.3zM295.5 536.5h4.3v4.3h-4.3zM299.5 536.5h4.3v4.3h-4.3zM303.5 536.5h4.3v4.3h-4.3zM307.5 536.5h4.3v4.3h-4.3zM295.5 540.5h4.3v4.3h-4.3zM299.5 540.5h4.3v4.3h-4.3zM303.5 540.5h4.3v4.3h-4.3zM307.5 540.5h4.3v4.3h-4.3zM295.5 544.5h4.3v4.3h-4.3zM299.5 544.5h4.3v4.3h-4.3zM303.5 544.5h4.3v4.3h-4.3zM307.5 544.5h4.3v4.3h-4.3zM359.5 544.5h4.3v4.3h-4.3zM363.5 544.5h4.3v4.3h-4.3zM367.5 544.5h4.3v4.3h-4.3zM303.5 548.5h4.3v4.3h-4.3zM307.5 548.5h4.3v4.3h-4.3zM359.5 548.5h4.3v4.3h-4.3zM363.5 548.5h4.3v4.3h-4.3zM367.5 548.5h4.3v4.3h-4.3zM307.5 552.5h4.3v4.3h-4.3zM359.5 552.5h4.3v4.3h-4.3zM363.5 552.5h4.3v4.3h-4.3zM367.5 552.5h4.3v4.3h-4.3zM371.5 552.5h4.3v4.3h-4.3zM375.5 552.5h4.3v4.3h-4.3zM307.5 556.5h4.3v4.3h-4.3zM355.5 556.5h4.3v4.3h-4.3zM359.5 556.5h4.3v4.3h-4.3zM363.5 556.5h4.3v4.3h-4.3zM367.5 556.5h4.3v4.3h-4.3zM371.5 556.5h4.3v4.3h-4.3zM375.5 556.5h4.3v4.3h-4.3zM351.5 560.5h4.3v4.3h-4.3zM355.5 560.5h4.3v4.3h-4.3zM359.5 560.5h4.3v4.3h-4.3zM363.5 560.5h4.3v4.3h-4.3zM367.5 560.5h4.3v4.3h-4.3zM371.5 560.5h4.3v4.3h-4.3zM375.5 560.5h4.3v4.3h-4.3zM315.5 564.5h4.3v4.3h-4.3zM347.5 564.5h4.3v4.3h-4.3zM351.5 564.5h4.3v4.3h-4.3zM355.5 564.5h4.3v4.3h-4.3zM359.5 564.5h4.3v4.3h-4.3zM363.5 564.5h4.3v4.3h-4.3zM367.5 564.5h4.3v4.3h-4.3zM371.5 564.5h4.3v4.3h-4.3zM375.5 564.5h4.3v4.3h-4.3zM319.5 568.5h4.3v4.3h-4.3zM343.5 568.5h4.3v4.3h-4.3zM347.5 568.5h4.3v4.3h-4.3zM351.5 568.5h4.3v4.3h-4.3zM355.5 568.5h4.3v4.3h-4.3zM359.5 568.5h4.3v4.3h-4.3zM363.5 568.5h4.3v4.3h-4.3zM367.5 568.5h4.3v4.3h-4.3zM371.5 568.5h4.3v4.3h-4.3zM375.5 568.5h4.3v4.3h-4.3zM319.5 572.5h4.3v4.3h-4.3zM339.5 572.5h4.3v4.3h-4.3zM343.5 572.5h4.3v4.3h-4.3zM347.5 572.5h4.3v4.3h-4.3zM351.5 572.5h4.3v4.3h-4.3zM355.5 572.5h4.3v4.3h-4.3zM359.5 572.5h4.3v4.3h-4.3zM363.5 572.5h4.3v4.3h-4.3zM367.5 572.5h4.3v4.3h-4.3zM371.5 572.5h4.3v4.3h-4.3zM375.5 572.5h4.3v4.3h-4.3zM323.5 576.5h4.3v4.3h-4.3zM327.5 576.5h4.3v4.3h-4.3zM331.5 576.5h4.3v4.3h-4.3zM335.5 576.5h4.3v4.3h-4.3zM339.5 576.5h4.3v4.3h-4.3zM343.5 576.5h4.3v4.3h-4.3zM347.5 576.5h4.3v4.3h-4.3zM351.5 576.5h4.3v4.3h-4.3zM355.5 576.5h4.3v4.3h-4.3zM359.5 576.5h4.3v4.3h-4.3zM363.5 576.5h4.3v4.3h-4.3zM327.5 580.5h4.3v4.3h-4.3zM331.5 580.5h4.3v4.3h-4.3zM335.5 580.5h4.3v4.3h-4.3zM339.5 580.5h4.3v4.3h-4.3zM343.5 580.5h4.3v4.3h-4.3zM347.5 580.5h4.3v4.3h-4.3zM351.5 580.5h4.3v4.3h-4.3zM355.5 580.5h4.3v4.3h-4.3zM255.5 584.5h4.3v4.3h-4.3zM259.5 584.5h4.3v4.3h-4.3zM263.5 584.5h4.3v4.3h-4.3zM267.5 584.5h4.3v4.3h-4.3zM327.5 584.5h4.3v4.3h-4.3zM331.5 584.5h4.3v4.3h-4.3zM335.5 584.5h4.3v4.3h-4.3zM339.5 584.5h4.3v4.3h-4.3zM343.5 584.5h4.3v4.3h-4.3zM347.5 584.5h4.3v4.3h-4.3zM351.5 584.5h4.3v4.3h-4.3zM355.5 584.5h4.3v4.3h-4.3zM255.5 588.5h4.3v4.3h-4.3zM259.5 588.5h4.3v4.3h-4.3zM263.5 588.5h4.3v4.3h-4.3zM267.5 588.5h4.3v4.3h-4.3zM335.5 588.5h4.3v4.3h-4.3zM339.5 588.5h4.3v4.3h-4.3zM343.5 588.5h4.3v4.3h-4.3zM347.5 588.5h4.3v4.3h-4.3zM351.5 588.5h4.3v4.3h-4.3zM355.5 588.5h4.3v4.3h-4.3zM255.5 592.5h4.3v4.3h-4.3zM259.5 592.5h4.3v4.3h-4.3zM263.5 592.5h4.3v4.3h-4.3zM267.5 592.5h4.3v4.3h-4.3zM339.5 592.5h4.3v4.3h-4.3zM343.5 592.5h4.3v4.3h-4.3zM347.5 592.5h4.3v4.3h-4.3zM351.5 592.5h4.3v4.3h-4.3zM355.5 592.5h4.3v4.3h-4.3zM359.5 592.5h4.3v4.3h-4.3zM255.5 596.5h4.3v4.3h-4.3zM259.5 596.5h4.3v4.3h-4.3zM363.5 596.5h4.3v4.3h-4.3zM367.5 596.5h4.3v4.3h-4.3zM367.5 600.5h4.3v4.3h-4.3zM367.5 604.5h4.3v4.3h-4.3zM347.5 664.5h4.3v4.3h-4.3zM347.5 668.5h4.3v4.3h-4.3zM347.5 672.5h4.3v4.3h-4.3zM347.5 676.5h4.3v4.3h-4.3z"/><path fill="#422472" d="M311.5 532.5h4.3v4.3h-4.3zM311.5 536.5h4.3v4.3h-4.3zM375.5 540.5h4.3v4.3h-4.3zM379.5 544.5h4.3v4.3h-4.3zM291.5 548.5h4.3v4.3h-4.3zM319.5 556.5h4.3v4.3h-4.3zM387.5 560.5h4.3v4.3h-4.3zM315.5 576.5h4.3v4.3h-4.3zM387.5 576.5h4.3v4.3h-4.3zM387.5 580.5h4.3v4.3h-4.3zM367.5 584.5h4.3v4.3h-4.3zM387.5 584.5h4.3v4.3h-4.3zM271.5 596.5h4.3v4.3h-4.3zM371.5 608.5h4.3v4.3h-4.3zM267.5 624.5h4.3v4.3h-4.3zM279.5 644.5h4.3v4.3h-4.3zM275.5 648.5h4.3v4.3h-4.3zM339.5 672.5h4.3v4.3h-4.3zM339.5 676.5h4.3v4.3h-4.3z"/><path fill="#3c4884" d="M315.5 532.5h4.3v4.3h-4.3zM383.5 532.5h4.3v4.3h-4.3zM383.5 536.5h4.3v4.3h-4.3zM279.5 540.5h4.3v4.3h-4.3zM387.5 548.5h4.3v4.3h-4.3zM391.5 548.5h4.3v4.3h-4.3zM331.5 560.5h4.3v4.3h-4.3zM395.5 560.5h4.3v4.3h-4.3zM303.5 564.5h4.3v4.3h-4.3zM395.5 564.5h4.3v4.3h-4.3zM395.5 568.5h4.3v4.3h-4.3zM395.5 572.5h4.3v4.3h-4.3zM395.5 576.5h4.3v4.3h-4.3zM395.5 580.5h4.3v4.3h-4.3zM275.5 584.5h4.3v4.3h-4.3zM395.5 584.5h4.3v4.3h-4.3zM275.5 588.5h4.3v4.3h-4.3zM319.5 588.5h4.3v4.3h-4.3zM379.5 588.5h4.3v4.3h-4.3zM395.5 588.5h4.3v4.3h-4.3zM275.5 592.5h4.3v4.3h-4.3zM395.5 592.5h4.3v4.3h-4.3zM275.5 596.5h4.3v4.3h-4.3zM395.5 596.5h4.3v4.3h-4.3zM359.5 608.5h4.3v4.3h-4.3zM383.5 608.5h4.3v4.3h-4.3zM275.5 616.5h4.3v4.3h-4.3zM259.5 620.5h4.3v4.3h-4.3zM279.5 624.5h4.3v4.3h-4.3zM263.5 628.5h4.3v4.3h-4.3zM263.5 656.5h4.3v4.3h-4.3zM271.5 660.5h4.3v4.3h-4.3zM311.5 660.5h4.3v4.3h-4.3zM331.5 660.5h4.3v4.3h-4.3zM355.5 660.5h4.3v4.3h-4.3zM279.5 664.5h4.3v4.3h-4.3zM307.5 664.5h4.3v4.3h-4.3zM359.5 668.5h4.3v4.3h-4.3zM331.5 672.5h4.3v4.3h-4.3zM315.5 676.5h4.3v4.3h-4.3zM319.5 676.5h4.3v4.3h-4.3z"/><path fill="#24788a" d="M319.5 532.5h4.3v4.3h-4.3zM343.5 532.5h4.3v4.3h-4.3zM267.5 536.5h4.3v4.3h-4.3zM319.5 536.5h4.3v4.3h-4.3zM343.5 536.5h4.3v4.3h-4.3zM263.5 540.5h4.3v4.3h-4.3zM267.5 540.5h4.3v4.3h-4.3zM259.5 544.5h4.3v4.3h-4.3zM263.5 544.5h4.3v4.3h-4.3zM255.5 548.5h4.3v4.3h-4.3zM259.5 548.5h4.3v4.3h-4.3zM275.5 548.5h4.3v4.3h-4.3zM327.5 556.5h4.3v4.3h-4.3zM255.5 564.5h4.3v4.3h-4.3zM259.5 564.5h4.3v4.3h-4.3zM299.5 564.5h4.3v4.3h-4.3zM283.5 584.5h4.3v4.3h-4.3zM283.5 588.5h4.3v4.3h-4.3zM311.5 588.5h4.3v4.3h-4.3zM283.5 592.5h4.3v4.3h-4.3zM283.5 596.5h4.3v4.3h-4.3zM283.5 600.5h4.3v4.3h-4.3zM339.5 604.5h4.3v4.3h-4.3zM347.5 608.5h4.3v4.3h-4.3zM283.5 616.5h4.3v4.3h-4.3zM363.5 620.5h4.3v4.3h-4.3zM287.5 636.5h4.3v4.3h-4.3zM315.5 648.5h4.3v4.3h-4.3zM331.5 648.5h4.3v4.3h-4.3zM335.5 648.5h4.3v4.3h-4.3zM371.5 648.5h4.3v4.3h-4.3zM311.5 652.5h4.3v4.3h-4.3zM347.5 652.5h4.3v4.3h-4.3zM371.5 652.5h4.3v4.3h-4.3zM287.5 656.5h4.3v4.3h-4.3zM363.5 656.5h4.3v4.3h-4.3zM367.5 656.5h4.3v4.3h-4.3zM291.5 660.5h4.3v4.3h-4.3zM291.5 668.5h4.3v4.3h-4.3zM295.5 668.5h4.3v4.3h-4.3zM299.5 668.5h4.3v4.3h-4.3zM283.5 672.5h4.3v4.3h-4.3zM271.5 676.5h4.3v4.3h-4.3zM275.5 676.5h4.3v4.3h-4.3zM279.5 676.5h4.3v4.3h-4.3z"/><path fill="#30b478" d="M323.5 532.5h4.3v4.3h-4.3zM335.5 532.5h4.3v4.3h-4.3zM323.5 536.5h4.3v4.3h-4.3zM335.5 536.5h4.3v4.3h-4.3zM287.5 568.5h4.3v4.3h-4.3z"/><path fill="#bade24" d="M327.5 532.5h4.3v4.3h-4.3z"/><path fill="#6ccc54" d="M331.5 532.5h4.3v4.3h-4.3zM331.5 536.5h4.3v4.3h-4.3zM315.5 612.5h4.3v4.3h-4.3zM319.5 612.5h4.3v4.3h-4.3zM323.5 612.5h4.3v4.3h-4.3zM327.5 612.5h4.3v4.3h-4.3zM299.5 616.5h4.3v4.3h-4.3zM295.5 636.5h4.3v4.3h-4.3z"/><path fill="#1e9684" d="M339.5 532.5h4.3v4.3h-4.3zM339.5 536.5h4.3v4.3h-4.3zM275.5 556.5h4.3v4.3h-4.3zM279.5 556.5h4.3v4.3h-4.3zM287.5 580.5h4.3v4.3h-4.3zM291.5 584.5h4.3v4.3h-4.3zM303.5 584.5h4.3v4.3h-4.3zM303.5 588.5h4.3v4.3h-4.3zM295.5 592.5h4.3v4.3h-4.3zM295.5 596.5h4.3v4.3h-4.3zM299.5 596.5h4.3v4.3h-4.3zM295.5 600.5h4.3v4.3h-4.3zM299.5 600.5h4.3v4.3h-4.3zM303.5 600.5h4.3v4.3h-4.3zM295.5 604.5h4.3v4.3h-4.3zM339.5 608.5h4.3v4.3h-4.3zM347.5 612.5h4.3v4.3h-4.3zM359.5 624.5h4.3v4.3h-4.3zM359.5 628.5h4.3v4.3h-4.3zM331.5 632.5h4.3v4.3h-4.3zM359.5 632.5h4.3v4.3h-4.3zM339.5 636.5h4.3v4.3h-4.3zM343.5 636.5h4.3v4.3h-4.3zM347.5 636.5h4.3v4.3h-4.3zM351.5 636.5h4.3v4.3h-4.3zM355.5 636.5h4.3v4.3h-4.3zM311.5 644.5h4.3v4.3h-4.3zM307.5 648.5h4.3v4.3h-4.3zM303.5 652.5h4.3v4.3h-4.3z"/><path fill="#305a8a" d="M347.5 532.5h4.3v4.3h-4.3zM275.5 540.5h4.3v4.3h-4.3zM343.5 548.5h4.3v4.3h-4.3zM263.5 568.5h4.3v4.3h-4.3zM319.5 592.5h4.3v4.3h-4.3zM347.5 604.5h4.3v4.3h-4.3zM355.5 608.5h4.3v4.3h-4.3zM375.5 612.5h4.3v4.3h-4.3zM383.5 616.5h4.3v4.3h-4.3zM383.5 620.5h4.3v4.3h-4.3zM255.5 624.5h4.3v4.3h-4.3zM259.5 628.5h4.3v4.3h-4.3zM283.5 644.5h4.3v4.3h-4.3zM283.5 648.5h4.3v4.3h-4.3zM255.5 656.5h4.3v4.3h-4.3zM283.5 656.5h4.3v4.3h-4.3zM343.5 656.5h4.3v4.3h-4.3zM347.5 656.5h4.3v4.3h-4.3zM255.5 660.5h4.3v4.3h-4.3zM259.5 660.5h4.3v4.3h-4.3zM283.5 660.5h4.3v4.3h-4.3zM379.5 660.5h4.3v4.3h-4.3zM255.5 664.5h4.3v4.3h-4.3zM259.5 664.5h4.3v4.3h-4.3zM283.5 664.5h4.3v4.3h-4.3zM303.5 664.5h4.3v4.3h-4.3zM363.5 668.5h4.3v4.3h-4.3zM327.5 672.5h4.3v4.3h-4.3zM311.5 676.5h4.3v4.3h-4.3zM327.5 676.5h4.3v4.3h-4.3z"/><path fill="#3c4284" d="M351.5 532.5h4.3v4.3h-4.3zM379.5 532.5h4.3v4.3h-4.3zM351.5 536.5h4.3v4.3h-4.3zM379.5 536.5h4.3v4.3h-4.3zM383.5 540.5h4.3v4.3h-4.3zM347.5 544.5h4.3v4.3h-4.3zM315.5 548.5h4.3v4.3h-4.3zM291.5 552.5h4.3v4.3h-4.3zM319.5 552.5h4.3v4.3h-4.3zM343.5 552.5h4.3v4.3h-4.3zM391.5 552.5h4.3v4.3h-4.3zM335.5 560.5h4.3v4.3h-4.3zM371.5 584.5h4.3v4.3h-4.3zM375.5 592.5h4.3v4.3h-4.3zM343.5 600.5h4.3v4.3h-4.3zM391.5 600.5h4.3v4.3h-4.3zM351.5 604.5h4.3v4.3h-4.3zM379.5 608.5h4.3v4.3h-4.3zM363.5 612.5h4.3v4.3h-4.3zM371.5 612.5h4.3v4.3h-4.3zM367.5 616.5h4.3v4.3h-4.3zM275.5 620.5h4.3v4.3h-4.3zM263.5 624.5h4.3v4.3h-4.3zM267.5 640.5h4.3v4.3h-4.3zM267.5 644.5h4.3v4.3h-4.3zM263.5 652.5h4.3v4.3h-4.3zM279.5 656.5h4.3v4.3h-4.3zM275.5 660.5h4.3v4.3h-4.3zM279.5 660.5h4.3v4.3h-4.3zM323.5 660.5h4.3v4.3h-4.3zM335.5 660.5h4.3v4.3h-4.3zM359.5 664.5h4.3v4.3h-4.3zM311.5 668.5h4.3v4.3h-4.3zM323.5 668.5h4.3v4.3h-4.3zM331.5 668.5h4.3v4.3h-4.3zM315.5 672.5h4.3v4.3h-4.3zM319.5 672.5h4.3v4.3h-4.3z"/><path fill="#422a78" d="M355.5 532.5h4.3v4.3h-4.3zM355.5 536.5h4.3v4.3h-4.3zM371.5 536.5h4.3v4.3h-4.3zM283.5 540.5h4.3v4.3h-4.3zM311.5 540.5h4.3v4.3h-4.3zM311.5 544.5h4.3v4.3h-4.3zM351.5 544.5h4.3v4.3h-4.3zM383.5 552.5h4.3v4.3h-4.3zM255.5 572.5h4.3v4.3h-4.3zM271.5 580.5h4.3v4.3h-4.3zM371.5 580.5h4.3v4.3h-4.3zM383.5 580.5h4.3v4.3h-4.3zM323.5 588.5h4.3v4.3h-4.3zM383.5 588.5h4.3v4.3h-4.3zM391.5 592.5h4.3v4.3h-4.3zM331.5 596.5h4.3v4.3h-4.3zM379.5 596.5h4.3v4.3h-4.3zM351.5 600.5h4.3v4.3h-4.3zM379.5 600.5h4.3v4.3h-4.3zM383.5 600.5h4.3v4.3h-4.3zM355.5 604.5h4.3v4.3h-4.3zM363.5 608.5h4.3v4.3h-4.3zM255.5 612.5h4.3v4.3h-4.3zM259.5 612.5h4.3v4.3h-4.3zM271.5 616.5h4.3v4.3h-4.3zM271.5 620.5h4.3v4.3h-4.3zM271.5 624.5h4.3v4.3h-4.3zM267.5 628.5h4.3v4.3h-4.3zM271.5 628.5h4.3v4.3h-4.3zM275.5 628.5h4.3v4.3h-4.3zM279.5 632.5h4.3v4.3h-4.3zM271.5 636.5h4.3v4.3h-4.3zM271.5 648.5h4.3v4.3h-4.3zM267.5 652.5h4.3v4.3h-4.3zM271.5 652.5h4.3v4.3h-4.3zM275.5 652.5h4.3v4.3h-4.3zM347.5 660.5h4.3v4.3h-4.3zM335.5 664.5h4.3v4.3h-4.3zM355.5 664.5h4.3v4.3h-4.3z"/><path fill="#481e72" d="M359.5 532.5h4.3v4.3h-4.3zM363.5 532.5h4.3v4.3h-4.3zM283.5 536.5h4.3v4.3h-4.3zM367.5 536.5h4.3v4.3h-4.3zM311.5 548.5h4.3v4.3h-4.3zM299.5 556.5h4.3v4.3h-4.3zM383.5 556.5h4.3v4.3h-4.3zM331.5 564.5h4.3v4.3h-4.3zM311.5 568.5h4.3v4.3h-4.3zM387.5 572.5h4.3v4.3h-4.3zM271.5 584.5h4.3v4.3h-4.3zM271.5 588.5h4.3v4.3h-4.3zM271.5 592.5h4.3v4.3h-4.3zM375.5 600.5h4.3v4.3h-4.3zM267.5 604.5h4.3v4.3h-4.3zM263.5 612.5h4.3v4.3h-4.3zM367.5 612.5h4.3v4.3h-4.3zM267.5 620.5h4.3v4.3h-4.3zM275.5 632.5h4.3v4.3h-4.3zM279.5 636.5h4.3v4.3h-4.3zM275.5 644.5h4.3v4.3h-4.3zM315.5 664.5h4.3v4.3h-4.3zM319.5 664.5h4.3v4.3h-4.3zM339.5 668.5h4.3v4.3h-4.3z"/><path fill="#482472" d="M367.5 532.5h4.3v4.3h-4.3zM295.5 552.5h4.3v4.3h-4.3zM315.5 552.5h4.3v4.3h-4.3zM335.5 596.5h4.3v4.3h-4.3zM379.5 604.5h4.3v4.3h-4.3zM279.5 640.5h4.3v4.3h-4.3z"/><path fill="#423078" d="M371.5 532.5h4.3v4.3h-4.3zM347.5 548.5h4.3v4.3h-4.3zM343.5 556.5h4.3v4.3h-4.3zM387.5 556.5h4.3v4.3h-4.3zM303.5 560.5h4.3v4.3h-4.3zM259.5 572.5h4.3v4.3h-4.3zM375.5 596.5h4.3v4.3h-4.3zM391.5 596.5h4.3v4.3h-4.3zM271.5 600.5h4.3v4.3h-4.3zM271.5 612.5h4.3v4.3h-4.3zM271.5 640.5h4.3v4.3h-4.3zM271.5 644.5h4.3v4.3h-4.3zM279.5 648.5h4.3v4.3h-4.3zM343.5 660.5h4.3v4.3h-4.3zM355.5 668.5h4.3v4.3h-4.3z"/><path fill="#3c3c84" d="M375.5 532.5h4.3v4.3h-4.3zM279.5 536.5h4.3v4.3h-4.3zM383.5 544.5h4.3v4.3h-4.3zM387.5 552.5h4.3v4.3h-4.3zM295.5 556.5h4.3v4.3h-4.3zM391.5 556.5h4.3v4.3h-4.3zM315.5 580.5h4.3v4.3h-4.3zM323.5 592.5h4.3v4.3h-4.3zM383.5 604.5h4.3v4.3h-4.3zM255.5 616.5h4.3v4.3h-4.3zM331.5 664.5h4.3v4.3h-4.3z"/><path fill="#36548a" d="M275.5 536.5h4.3v4.3h-4.3zM315.5 544.5h4.3v4.3h-4.3zM283.5 548.5h4.3v4.3h-4.3zM255.5 568.5h4.3v4.3h-4.3zM259.5 568.5h4.3v4.3h-4.3zM275.5 576.5h4.3v4.3h-4.3zM379.5 584.5h4.3v4.3h-4.3zM375.5 588.5h4.3v4.3h-4.3zM323.5 596.5h4.3v4.3h-4.3zM335.5 600.5h4.3v4.3h-4.3zM275.5 604.5h4.3v4.3h-4.3zM275.5 608.5h4.3v4.3h-4.3zM383.5 612.5h4.3v4.3h-4.3zM371.5 616.5h4.3v4.3h-4.3zM279.5 620.5h4.3v4.3h-4.3zM259.5 624.5h4.3v4.3h-4.3zM383.5 624.5h4.3v4.3h-4.3zM383.5 628.5h4.3v4.3h-4.3zM383.5 632.5h4.3v4.3h-4.3zM383.5 636.5h4.3v4.3h-4.3zM263.5 640.5h4.3v4.3h-4.3zM283.5 640.5h4.3v4.3h-4.3zM383.5 640.5h4.3v4.3h-4.3zM263.5 644.5h4.3v4.3h-4.3zM383.5 644.5h4.3v4.3h-4.3zM383.5 648.5h4.3v4.3h-4.3zM383.5 652.5h4.3v4.3h-4.3zM315.5 656.5h4.3v4.3h-4.3zM323.5 656.5h4.3v4.3h-4.3zM335.5 656.5h4.3v4.3h-4.3zM383.5 656.5h4.3v4.3h-4.3zM263.5 660.5h4.3v4.3h-4.3zM327.5 660.5h4.3v4.3h-4.3zM359.5 660.5h4.3v4.3h-4.3zM383.5 660.5h4.3v4.3h-4.3zM271.5 664.5h4.3v4.3h-4.3zM383.5 664.5h4.3v4.3h-4.3zM307.5 668.5h4.3v4.3h-4.3zM327.5 668.5h4.3v4.3h-4.3zM383.5 668.5h4.3v4.3h-4.3zM311.5 672.5h4.3v4.3h-4.3zM383.5 672.5h4.3v4.3h-4.3zM383.5 676.5h4.3v4.3h-4.3z"/><path fill="#420654" d="M287.5 536.5h4.3v4.3h-4.3zM291.5 540.5h4.3v4.3h-4.3zM299.5 548.5h4.3v4.3h-4.3zM371.5 548.5h4.3v4.3h-4.3zM303.5 552.5h4.3v4.3h-4.3zM355.5 552.5h4.3v4.3h-4.3zM379.5 564.5h4.3v4.3h-4.3zM323.5 572.5h4.3v4.3h-4.3zM335.5 572.5h4.3v4.3h-4.3zM359.5 580.5h4.3v4.3h-4.3zM359.5 588.5h4.3v4.3h-4.3zM335.5 592.5h4.3v4.3h-4.3zM363.5 592.5h4.3v4.3h-4.3zM263.5 596.5h4.3v4.3h-4.3zM359.5 596.5h4.3v4.3h-4.3z"/><path fill="#364e84" d="M315.5 536.5h4.3v4.3h-4.3zM395.5 600.5h4.3v4.3h-4.3zM263.5 632.5h4.3v4.3h-4.3zM267.5 660.5h4.3v4.3h-4.3zM275.5 664.5h4.3v4.3h-4.3zM331.5 676.5h4.3v4.3h-4.3z"/><path fill="#b4de24" d="M327.5 536.5h4.3v4.3h-4.3zM307.5 624.5h4.3v4.3h-4.3z"/><path fill="#365a8a" d="M347.5 536.5h4.3v4.3h-4.3zM307.5 572.5h4.3v4.3h-4.3zM259.5 652.5h4.3v4.3h-4.3zM259.5 656.5h4.3v4.3h-4.3zM327.5 656.5h4.3v4.3h-4.3zM331.5 656.5h4.3v4.3h-4.3zM339.5 656.5h4.3v4.3h-4.3zM307.5 660.5h4.3v4.3h-4.3zM363.5 664.5h4.3v4.3h-4.3zM379.5 664.5h4.3v4.3h-4.3zM379.5 668.5h4.3v4.3h-4.3zM379.5 672.5h4.3v4.3h-4.3zM379.5 676.5h4.3v4.3h-4.3z"/><path fill="#420c60" d="M287.5 540.5h4.3v4.3h-4.3zM355.5 544.5h4.3v4.3h-4.3zM347.5 556.5h4.3v4.3h-4.3zM379.5 556.5h4.3v4.3h-4.3zM383.5 564.5h4.3v4.3h-4.3zM323.5 568.5h4.3v4.3h-4.3zM335.5 568.5h4.3v4.3h-4.3zM383.5 568.5h4.3v4.3h-4.3zM255.5 576.5h4.3v4.3h-4.3zM259.5 576.5h4.3v4.3h-4.3zM267.5 580.5h4.3v4.3h-4.3zM323.5 580.5h4.3v4.3h-4.3zM363.5 580.5h4.3v4.3h-4.3zM327.5 588.5h4.3v4.3h-4.3zM363.5 588.5h4.3v4.3h-4.3zM331.5 592.5h4.3v4.3h-4.3zM387.5 592.5h4.3v4.3h-4.3zM351.5 596.5h4.3v4.3h-4.3zM263.5 600.5h4.3v4.3h-4.3zM359.5 600.5h4.3v4.3h-4.3zM375.5 604.5h4.3v4.3h-4.3zM343.5 664.5h4.3v4.3h-4.3zM343.5 668.5h4.3v4.3h-4.3z"/><path fill="#247e8a" d="M319.5 540.5h4.3v4.3h-4.3zM267.5 544.5h4.3v4.3h-4.3zM319.5 544.5h4.3v4.3h-4.3zM263.5 548.5h4.3v4.3h-4.3zM271.5 548.5h4.3v4.3h-4.3zM339.5 548.5h4.3v4.3h-4.3zM255.5 552.5h4.3v4.3h-4.3zM259.5 552.5h4.3v4.3h-4.3zM335.5 552.5h4.3v4.3h-4.3zM255.5 556.5h4.3v4.3h-4.3zM287.5 556.5h4.3v4.3h-4.3zM255.5 560.5h4.3v4.3h-4.3zM259.5 560.5h4.3v4.3h-4.3zM263.5 564.5h4.3v4.3h-4.3zM275.5 568.5h4.3v4.3h-4.3zM279.5 572.5h4.3v4.3h-4.3zM303.5 572.5h4.3v4.3h-4.3zM283.5 580.5h4.3v4.3h-4.3zM307.5 580.5h4.3v4.3h-4.3zM311.5 592.5h4.3v4.3h-4.3zM315.5 596.5h4.3v4.3h-4.3zM319.5 600.5h4.3v4.3h-4.3zM283.5 604.5h4.3v4.3h-4.3zM283.5 608.5h4.3v4.3h-4.3zM283.5 612.5h4.3v4.3h-4.3zM371.5 624.5h4.3v4.3h-4.3zM287.5 628.5h4.3v4.3h-4.3zM371.5 628.5h4.3v4.3h-4.3zM371.5 632.5h4.3v4.3h-4.3zM371.5 636.5h4.3v4.3h-4.3zM287.5 640.5h4.3v4.3h-4.3zM371.5 640.5h4.3v4.3h-4.3zM319.5 644.5h4.3v4.3h-4.3zM323.5 644.5h4.3v4.3h-4.3zM327.5 644.5h4.3v4.3h-4.3zM371.5 644.5h4.3v4.3h-4.3zM339.5 648.5h4.3v4.3h-4.3zM343.5 648.5h4.3v4.3h-4.3zM287.5 652.5h4.3v4.3h-4.3zM351.5 652.5h4.3v4.3h-4.3zM295.5 660.5h4.3v4.3h-4.3zM299.5 660.5h4.3v4.3h-4.3zM287.5 672.5h4.3v4.3h-4.3zM291.5 672.5h4.3v4.3h-4.3zM295.5 672.5h4.3v4.3h-4.3zM299.5 672.5h4.3v4.3h-4.3zM283.5 676.5h4.3v4.3h-4.3zM287.5 676.5h4.3v4.3h-4.3zM299.5 676.5h4.3v4.3h-4.3z"/><path fill="#30ae78" d="M323.5 540.5h4.3v4.3h-4.3zM335.5 540.5h4.3v4.3h-4.3zM323.5 544.5h4.3v4.3h-4.3zM335.5 544.5h4.3v4.3h-4.3zM295.5 572.5h4.3v4.3h-4.3zM303.5 608.5h4.3v4.3h-4.3zM315.5 608.5h4.3v4.3h-4.3zM319.5 608.5h4.3v4.3h-4.3zM323.5 608.5h4.3v4.3h-4.3zM327.5 608.5h4.3v4.3h-4.3zM311.5 632.5h4.3v4.3h-4.3zM307.5 640.5h4.3v4.3h-4.3z"/><path fill="#a8d830" d="M327.5 540.5h4.3v4.3h-4.3z"/><path fill="#60c65a" d="M331.5 540.5h4.3v4.3h-4.3zM303.5 612.5h4.3v4.3h-4.3zM315.5 620.5h4.3v4.3h-4.3z"/><path fill="#1e968a" d="M339.5 540.5h4.3v4.3h-4.3zM323.5 548.5h4.3v4.3h-4.3zM275.5 560.5h4.3v4.3h-4.3zM295.5 564.5h4.3v4.3h-4.3zM303.5 580.5h4.3v4.3h-4.3zM291.5 588.5h4.3v4.3h-4.3zM303.5 592.5h4.3v4.3h-4.3zM303.5 596.5h4.3v4.3h-4.3zM307.5 600.5h4.3v4.3h-4.3zM311.5 604.5h4.3v4.3h-4.3zM287.5 612.5h4.3v4.3h-4.3zM287.5 616.5h4.3v4.3h-4.3zM315.5 636.5h4.3v4.3h-4.3zM335.5 636.5h4.3v4.3h-4.3zM359.5 636.5h4.3v4.3h-4.3z"/><path fill="#42186c" d="M355.5 540.5h4.3v4.3h-4.3zM371.5 540.5h4.3v4.3h-4.3zM379.5 548.5h4.3v4.3h-4.3zM335.5 564.5h4.3v4.3h-4.3zM387.5 568.5h4.3v4.3h-4.3zM267.5 576.5h4.3v4.3h-4.3zM323.5 584.5h4.3v4.3h-4.3zM367.5 588.5h4.3v4.3h-4.3zM387.5 588.5h4.3v4.3h-4.3zM327.5 592.5h4.3v4.3h-4.3zM339.5 596.5h4.3v4.3h-4.3zM371.5 596.5h4.3v4.3h-4.3zM355.5 600.5h4.3v4.3h-4.3zM263.5 604.5h4.3v4.3h-4.3zM359.5 604.5h4.3v4.3h-4.3zM267.5 608.5h4.3v4.3h-4.3zM275.5 636.5h4.3v4.3h-4.3zM339.5 664.5h4.3v4.3h-4.3zM351.5 668.5h4.3v4.3h-4.3z"/><path fill="#421260" d="M359.5 540.5h4.3v4.3h-4.3zM363.5 540.5h4.3v4.3h-4.3zM367.5 540.5h4.3v4.3h-4.3zM295.5 548.5h4.3v4.3h-4.3zM311.5 552.5h4.3v4.3h-4.3zM351.5 552.5h4.3v4.3h-4.3zM303.5 556.5h4.3v4.3h-4.3zM339.5 564.5h4.3v4.3h-4.3zM331.5 568.5h4.3v4.3h-4.3zM375.5 576.5h4.3v4.3h-4.3zM371.5 600.5h4.3v4.3h-4.3zM255.5 604.5h4.3v4.3h-4.3zM367.5 608.5h4.3v4.3h-4.3z"/><path fill="#42307e" d="M379.5 540.5h4.3v4.3h-4.3zM339.5 560.5h4.3v4.3h-4.3zM391.5 564.5h4.3v4.3h-4.3zM391.5 568.5h4.3v4.3h-4.3zM319.5 584.5h4.3v4.3h-4.3zM391.5 588.5h4.3v4.3h-4.3zM387.5 600.5h4.3v4.3h-4.3zM271.5 656.5h4.3v4.3h-4.3zM319.5 660.5h4.3v4.3h-4.3zM311.5 664.5h4.3v4.3h-4.3zM315.5 668.5h4.3v4.3h-4.3zM319.5 668.5h4.3v4.3h-4.3zM335.5 668.5h4.3v4.3h-4.3z"/><path fill="#421266" d="M287.5 544.5h4.3v4.3h-4.3zM375.5 544.5h4.3v4.3h-4.3zM379.5 552.5h4.3v4.3h-4.3zM383.5 560.5h4.3v4.3h-4.3zM307.5 564.5h4.3v4.3h-4.3zM327.5 568.5h4.3v4.3h-4.3zM315.5 572.5h4.3v4.3h-4.3zM383.5 572.5h4.3v4.3h-4.3zM263.5 576.5h4.3v4.3h-4.3zM367.5 580.5h4.3v4.3h-4.3zM363.5 584.5h4.3v4.3h-4.3zM347.5 596.5h4.3v4.3h-4.3zM387.5 596.5h4.3v4.3h-4.3zM267.5 600.5h4.3v4.3h-4.3zM259.5 604.5h4.3v4.3h-4.3zM267.5 612.5h4.3v4.3h-4.3zM343.5 672.5h4.3v4.3h-4.3zM343.5 676.5h4.3v4.3h-4.3z"/><path fill="#42065a" d="M291.5 544.5h4.3v4.3h-4.3zM355.5 548.5h4.3v4.3h-4.3zM375.5 548.5h4.3v4.3h-4.3zM299.5 552.5h4.3v4.3h-4.3zM311.5 556.5h4.3v4.3h-4.3zM351.5 556.5h4.3v4.3h-4.3zM311.5 560.5h4.3v4.3h-4.3zM315.5 560.5h4.3v4.3h-4.3zM347.5 560.5h4.3v4.3h-4.3zM379.5 560.5h4.3v4.3h-4.3zM311.5 564.5h4.3v4.3h-4.3zM319.5 564.5h4.3v4.3h-4.3zM343.5 564.5h4.3v4.3h-4.3zM339.5 568.5h4.3v4.3h-4.3zM379.5 568.5h4.3v4.3h-4.3zM327.5 572.5h4.3v4.3h-4.3zM331.5 572.5h4.3v4.3h-4.3zM379.5 572.5h4.3v4.3h-4.3zM319.5 576.5h4.3v4.3h-4.3zM367.5 576.5h4.3v4.3h-4.3zM255.5 580.5h4.3v4.3h-4.3zM259.5 580.5h4.3v4.3h-4.3zM359.5 584.5h4.3v4.3h-4.3zM331.5 588.5h4.3v4.3h-4.3zM267.5 596.5h4.3v4.3h-4.3zM355.5 596.5h4.3v4.3h-4.3zM255.5 600.5h4.3v4.3h-4.3zM363.5 600.5h4.3v4.3h-4.3zM371.5 604.5h4.3v4.3h-4.3z"/><path fill="#9cd836" d="M327.5 544.5h4.3v4.3h-4.3zM307.5 616.5h4.3v4.3h-4.3zM303.5 624.5h4.3v4.3h-4.3zM299.5 632.5h4.3v4.3h-4.3zM299.5 640.5h4.3v4.3h-4.3z"/><path fill="#5ac660" d="M331.5 544.5h4.3v4.3h-4.3zM331.5 612.5h4.3v4.3h-4.3zM295.5 628.5h4.3v4.3h-4.3zM303.5 640.5h4.3v4.3h-4.3z"/><path fill="#1e908a" d="M339.5 544.5h4.3v4.3h-4.3zM331.5 552.5h4.3v4.3h-4.3zM271.5 556.5h4.3v4.3h-4.3zM271.5 560.5h4.3v4.3h-4.3zM275.5 564.5h4.3v4.3h-4.3zM279.5 568.5h4.3v4.3h-4.3zM299.5 568.5h4.3v4.3h-4.3zM283.5 572.5h4.3v4.3h-4.3zM303.5 576.5h4.3v4.3h-4.3zM307.5 584.5h4.3v4.3h-4.3zM307.5 588.5h4.3v4.3h-4.3zM291.5 592.5h4.3v4.3h-4.3zM307.5 592.5h4.3v4.3h-4.3zM291.5 596.5h4.3v4.3h-4.3zM307.5 596.5h4.3v4.3h-4.3zM291.5 600.5h4.3v4.3h-4.3zM311.5 600.5h4.3v4.3h-4.3zM291.5 604.5h4.3v4.3h-4.3zM315.5 604.5h4.3v4.3h-4.3zM319.5 604.5h4.3v4.3h-4.3zM323.5 604.5h4.3v4.3h-4.3zM327.5 604.5h4.3v4.3h-4.3zM287.5 608.5h4.3v4.3h-4.3zM351.5 612.5h4.3v4.3h-4.3zM287.5 620.5h4.3v4.3h-4.3zM359.5 620.5h4.3v4.3h-4.3zM363.5 624.5h4.3v4.3h-4.3zM363.5 628.5h4.3v4.3h-4.3zM319.5 632.5h4.3v4.3h-4.3zM323.5 632.5h4.3v4.3h-4.3zM327.5 632.5h4.3v4.3h-4.3zM363.5 632.5h4.3v4.3h-4.3zM331.5 636.5h4.3v4.3h-4.3zM363.5 636.5h4.3v4.3h-4.3zM315.5 640.5h4.3v4.3h-4.3zM335.5 640.5h4.3v4.3h-4.3zM339.5 640.5h4.3v4.3h-4.3zM343.5 640.5h4.3v4.3h-4.3zM347.5 640.5h4.3v4.3h-4.3zM351.5 640.5h4.3v4.3h-4.3zM355.5 640.5h4.3v4.3h-4.3zM359.5 640.5h4.3v4.3h-4.3zM363.5 640.5h4.3v4.3h-4.3zM291.5 652.5h4.3v4.3h-4.3zM295.5 656.5h4.3v4.3h-4.3zM299.5 656.5h4.3v4.3h-4.3z"/><path fill="#420c5a" d="M371.5 544.5h4.3v4.3h-4.3zM315.5 556.5h4.3v4.3h-4.3zM307.5 560.5h4.3v4.3h-4.3zM315.5 568.5h4.3v4.3h-4.3zM371.5 576.5h4.3v4.3h-4.3zM263.5 580.5h4.3v4.3h-4.3zM367.5 592.5h4.3v4.3h-4.3zM259.5 600.5h4.3v4.3h-4.3zM363.5 604.5h4.3v4.3h-4.3z"/><path fill="#1e848a" d="M267.5 548.5h4.3v4.3h-4.3zM263.5 552.5h4.3v4.3h-4.3zM263.5 556.5h4.3v4.3h-4.3zM267.5 560.5h4.3v4.3h-4.3zM291.5 560.5h4.3v4.3h-4.3zM283.5 576.5h4.3v4.3h-4.3zM359.5 616.5h4.3v4.3h-4.3zM319.5 640.5h4.3v4.3h-4.3zM323.5 640.5h4.3v4.3h-4.3zM327.5 640.5h4.3v4.3h-4.3zM331.5 644.5h4.3v4.3h-4.3zM351.5 648.5h4.3v4.3h-4.3zM367.5 648.5h4.3v4.3h-4.3zM291.5 656.5h4.3v4.3h-4.3z"/><path fill="#4ec066" d="M327.5 548.5h4.3v4.3h-4.3zM299.5 612.5h4.3v4.3h-4.3zM319.5 620.5h4.3v4.3h-4.3zM295.5 624.5h4.3v4.3h-4.3zM311.5 628.5h4.3v4.3h-4.3zM303.5 644.5h4.3v4.3h-4.3zM299.5 648.5h4.3v4.3h-4.3z"/><path fill="#2aae78" d="M331.5 548.5h4.3v4.3h-4.3zM291.5 572.5h4.3v4.3h-4.3zM299.5 576.5h4.3v4.3h-4.3zM299.5 608.5h4.3v4.3h-4.3zM343.5 616.5h4.3v4.3h-4.3zM339.5 620.5h4.3v4.3h-4.3zM319.5 624.5h4.3v4.3h-4.3zM315.5 628.5h4.3v4.3h-4.3zM291.5 644.5h4.3v4.3h-4.3z"/><path fill="#1e9c84" d="M335.5 548.5h4.3v4.3h-4.3zM327.5 552.5h4.3v4.3h-4.3zM279.5 560.5h4.3v4.3h-4.3zM283.5 560.5h4.3v4.3h-4.3zM287.5 560.5h4.3v4.3h-4.3zM279.5 564.5h4.3v4.3h-4.3zM287.5 576.5h4.3v4.3h-4.3zM295.5 588.5h4.3v4.3h-4.3zM299.5 588.5h4.3v4.3h-4.3zM299.5 592.5h4.3v4.3h-4.3zM299.5 604.5h4.3v4.3h-4.3zM303.5 604.5h4.3v4.3h-4.3zM307.5 604.5h4.3v4.3h-4.3zM291.5 608.5h4.3v4.3h-4.3zM351.5 616.5h4.3v4.3h-4.3zM355.5 616.5h4.3v4.3h-4.3zM347.5 620.5h4.3v4.3h-4.3zM351.5 620.5h4.3v4.3h-4.3zM355.5 620.5h4.3v4.3h-4.3zM343.5 624.5h4.3v4.3h-4.3zM347.5 624.5h4.3v4.3h-4.3zM351.5 624.5h4.3v4.3h-4.3zM355.5 624.5h4.3v4.3h-4.3zM323.5 628.5h4.3v4.3h-4.3zM327.5 628.5h4.3v4.3h-4.3zM331.5 628.5h4.3v4.3h-4.3zM335.5 628.5h4.3v4.3h-4.3zM339.5 628.5h4.3v4.3h-4.3zM343.5 628.5h4.3v4.3h-4.3zM347.5 628.5h4.3v4.3h-4.3zM351.5 628.5h4.3v4.3h-4.3zM355.5 628.5h4.3v4.3h-4.3zM315.5 632.5h4.3v4.3h-4.3zM335.5 632.5h4.3v4.3h-4.3zM339.5 632.5h4.3v4.3h-4.3zM343.5 632.5h4.3v4.3h-4.3zM347.5 632.5h4.3v4.3h-4.3zM351.5 632.5h4.3v4.3h-4.3zM355.5 632.5h4.3v4.3h-4.3zM311.5 640.5h4.3v4.3h-4.3z"/><path fill="#421e6c" d="M351.5 548.5h4.3v4.3h-4.3zM343.5 560.5h4.3v4.3h-4.3zM383.5 576.5h4.3v4.3h-4.3zM263.5 608.5h4.3v4.3h-4.3zM275.5 640.5h4.3v4.3h-4.3zM351.5 672.5h4.3v4.3h-4.3zM351.5 676.5h4.3v4.3h-4.3z"/><path fill="#1e8a8a" d="M267.5 552.5h4.3v4.3h-4.3zM271.5 552.5h4.3v4.3h-4.3zM275.5 552.5h4.3v4.3h-4.3zM267.5 556.5h4.3v4.3h-4.3zM283.5 556.5h4.3v4.3h-4.3zM271.5 564.5h4.3v4.3h-4.3zM287.5 584.5h4.3v4.3h-4.3zM287.5 588.5h4.3v4.3h-4.3zM287.5 592.5h4.3v4.3h-4.3zM287.5 596.5h4.3v4.3h-4.3zM311.5 596.5h4.3v4.3h-4.3zM287.5 600.5h4.3v4.3h-4.3zM315.5 600.5h4.3v4.3h-4.3zM287.5 604.5h4.3v4.3h-4.3zM331.5 604.5h4.3v4.3h-4.3zM343.5 608.5h4.3v4.3h-4.3zM355.5 612.5h4.3v4.3h-4.3zM287.5 624.5h4.3v4.3h-4.3zM367.5 624.5h4.3v4.3h-4.3zM367.5 628.5h4.3v4.3h-4.3zM367.5 632.5h4.3v4.3h-4.3zM319.5 636.5h4.3v4.3h-4.3zM323.5 636.5h4.3v4.3h-4.3zM327.5 636.5h4.3v4.3h-4.3zM367.5 636.5h4.3v4.3h-4.3zM331.5 640.5h4.3v4.3h-4.3zM367.5 640.5h4.3v4.3h-4.3zM287.5 644.5h4.3v4.3h-4.3zM315.5 644.5h4.3v4.3h-4.3zM335.5 644.5h4.3v4.3h-4.3zM339.5 644.5h4.3v4.3h-4.3zM343.5 644.5h4.3v4.3h-4.3zM347.5 644.5h4.3v4.3h-4.3zM351.5 644.5h4.3v4.3h-4.3zM355.5 644.5h4.3v4.3h-4.3zM359.5 644.5h4.3v4.3h-4.3zM363.5 644.5h4.3v4.3h-4.3zM367.5 644.5h4.3v4.3h-4.3zM311.5 648.5h4.3v4.3h-4.3zM355.5 648.5h4.3v4.3h-4.3zM359.5 648.5h4.3v4.3h-4.3zM363.5 648.5h4.3v4.3h-4.3zM307.5 652.5h4.3v4.3h-4.3z"/><path fill="#24848a" d="M279.5 552.5h4.3v4.3h-4.3zM259.5 556.5h4.3v4.3h-4.3zM263.5 560.5h4.3v4.3h-4.3zM267.5 564.5h4.3v4.3h-4.3zM335.5 604.5h4.3v4.3h-4.3zM287.5 648.5h4.3v4.3h-4.3zM347.5 648.5h4.3v4.3h-4.3zM355.5 652.5h4.3v4.3h-4.3zM359.5 652.5h4.3v4.3h-4.3zM363.5 652.5h4.3v4.3h-4.3zM367.5 652.5h4.3v4.3h-4.3zM303.5 656.5h4.3v4.3h-4.3zM291.5 676.5h4.3v4.3h-4.3zM295.5 676.5h4.3v4.3h-4.3z"/><path fill="#30608a" d="M287.5 552.5h4.3v4.3h-4.3zM291.5 556.5h4.3v4.3h-4.3zM335.5 556.5h4.3v4.3h-4.3zM267.5 568.5h4.3v4.3h-4.3zM311.5 580.5h4.3v4.3h-4.3zM279.5 584.5h4.3v4.3h-4.3zM375.5 584.5h4.3v4.3h-4.3zM279.5 588.5h4.3v4.3h-4.3zM315.5 588.5h4.3v4.3h-4.3zM279.5 592.5h4.3v4.3h-4.3zM331.5 600.5h4.3v4.3h-4.3zM379.5 612.5h4.3v4.3h-4.3zM279.5 616.5h4.3v4.3h-4.3zM363.5 616.5h4.3v4.3h-4.3zM379.5 624.5h4.3v4.3h-4.3zM255.5 628.5h4.3v4.3h-4.3zM283.5 628.5h4.3v4.3h-4.3zM379.5 628.5h4.3v4.3h-4.3zM259.5 632.5h4.3v4.3h-4.3zM379.5 632.5h4.3v4.3h-4.3zM379.5 636.5h4.3v4.3h-4.3zM379.5 640.5h4.3v4.3h-4.3zM379.5 644.5h4.3v4.3h-4.3zM255.5 648.5h4.3v4.3h-4.3zM259.5 648.5h4.3v4.3h-4.3zM379.5 648.5h4.3v4.3h-4.3zM255.5 652.5h4.3v4.3h-4.3zM283.5 652.5h4.3v4.3h-4.3zM319.5 652.5h4.3v4.3h-4.3zM323.5 652.5h4.3v4.3h-4.3zM327.5 652.5h4.3v4.3h-4.3zM379.5 652.5h4.3v4.3h-4.3zM311.5 656.5h4.3v4.3h-4.3zM351.5 656.5h4.3v4.3h-4.3zM379.5 656.5h4.3v4.3h-4.3zM375.5 660.5h4.3v4.3h-4.3zM263.5 664.5h4.3v4.3h-4.3zM267.5 664.5h4.3v4.3h-4.3zM375.5 664.5h4.3v4.3h-4.3zM255.5 668.5h4.3v4.3h-4.3zM259.5 668.5h4.3v4.3h-4.3zM275.5 668.5h4.3v4.3h-4.3zM279.5 668.5h4.3v4.3h-4.3zM375.5 668.5h4.3v4.3h-4.3zM363.5 672.5h4.3v4.3h-4.3zM375.5 672.5h4.3v4.3h-4.3zM375.5 676.5h4.3v4.3h-4.3z"/><path fill="#364884" d="M395.5 556.5h4.3v4.3h-4.3zM263.5 648.5h4.3v4.3h-4.3z"/><path fill="#421866" d="M319.5 560.5h4.3v4.3h-4.3zM323.5 564.5h4.3v4.3h-4.3zM387.5 564.5h4.3v4.3h-4.3zM379.5 576.5h4.3v4.3h-4.3zM343.5 596.5h4.3v4.3h-4.3zM267.5 616.5h4.3v4.3h-4.3zM351.5 664.5h4.3v4.3h-4.3z"/><path fill="#2aa87e" d="M283.5 564.5h4.3v4.3h-4.3z"/><path fill="#3cb472" d="M287.5 564.5h4.3v4.3h-4.3zM331.5 620.5h4.3v4.3h-4.3z"/><path fill="#24a87e" d="M291.5 564.5h4.3v4.3h-4.3zM287.5 572.5h4.3v4.3h-4.3zM291.5 576.5h4.3v4.3h-4.3zM295.5 580.5h4.3v4.3h-4.3zM299.5 580.5h4.3v4.3h-4.3zM331.5 608.5h4.3v4.3h-4.3zM291.5 616.5h4.3v4.3h-4.3zM291.5 620.5h4.3v4.3h-4.3zM291.5 624.5h4.3v4.3h-4.3zM323.5 624.5h4.3v4.3h-4.3zM311.5 636.5h4.3v4.3h-4.3zM291.5 640.5h4.3v4.3h-4.3zM299.5 652.5h4.3v4.3h-4.3z"/><path fill="#422478" d="M327.5 564.5h4.3v4.3h-4.3zM371.5 592.5h4.3v4.3h-4.3zM263.5 616.5h4.3v4.3h-4.3zM271.5 632.5h4.3v4.3h-4.3z"/><path fill="#1ea284" d="M283.5 568.5h4.3v4.3h-4.3zM295.5 568.5h4.3v4.3h-4.3zM299.5 572.5h4.3v4.3h-4.3zM291.5 580.5h4.3v4.3h-4.3zM295.5 584.5h4.3v4.3h-4.3zM299.5 584.5h4.3v4.3h-4.3zM335.5 608.5h4.3v4.3h-4.3zM291.5 612.5h4.3v4.3h-4.3zM343.5 612.5h4.3v4.3h-4.3zM347.5 616.5h4.3v4.3h-4.3zM343.5 620.5h4.3v4.3h-4.3zM327.5 624.5h4.3v4.3h-4.3zM331.5 624.5h4.3v4.3h-4.3zM335.5 624.5h4.3v4.3h-4.3zM339.5 624.5h4.3v4.3h-4.3zM291.5 628.5h4.3v4.3h-4.3zM319.5 628.5h4.3v4.3h-4.3zM291.5 632.5h4.3v4.3h-4.3zM291.5 636.5h4.3v4.3h-4.3zM307.5 644.5h4.3v4.3h-4.3zM291.5 648.5h4.3v4.3h-4.3zM295.5 652.5h4.3v4.3h-4.3z"/><path fill="#2aae7e" d="M291.5 568.5h4.3v4.3h-4.3zM303.5 648.5h4.3v4.3h-4.3z"/><path fill="#423c7e" d="M267.5 572.5h4.3v4.3h-4.3zM375.5 580.5h4.3v4.3h-4.3zM383.5 584.5h4.3v4.3h-4.3zM271.5 604.5h4.3v4.3h-4.3zM279.5 628.5h4.3v4.3h-4.3zM267.5 636.5h4.3v4.3h-4.3zM279.5 652.5h4.3v4.3h-4.3zM351.5 660.5h4.3v4.3h-4.3zM335.5 676.5h4.3v4.3h-4.3z"/><path fill="#36b478" d="M295.5 576.5h4.3v4.3h-4.3zM311.5 608.5h4.3v4.3h-4.3zM339.5 612.5h4.3v4.3h-4.3z"/><path fill="#1ea87e" d="M295.5 608.5h4.3v4.3h-4.3z"/><path fill="#36b472" d="M307.5 608.5h4.3v4.3h-4.3zM295.5 612.5h4.3v4.3h-4.3zM335.5 620.5h4.3v4.3h-4.3z"/><path fill="#72cc54" d="M307.5 612.5h4.3v4.3h-4.3zM311.5 612.5h4.3v4.3h-4.3zM295.5 644.5h4.3v4.3h-4.3z"/><path fill="#48c06c" d="M335.5 612.5h4.3v4.3h-4.3z"/><path fill="#48ba6c" d="M295.5 616.5h4.3v4.3h-4.3zM323.5 620.5h4.3v4.3h-4.3z"/><path fill="#84d248" d="M303.5 616.5h4.3v4.3h-4.3zM315.5 616.5h4.3v4.3h-4.3zM299.5 624.5h4.3v4.3h-4.3z"/><path fill="#90d23c" d="M311.5 616.5h4.3v4.3h-4.3zM303.5 620.5h4.3v4.3h-4.3zM299.5 628.5h4.3v4.3h-4.3zM299.5 644.5h4.3v4.3h-4.3z"/><path fill="#78d24e" d="M319.5 616.5h4.3v4.3h-4.3z"/><path fill="#78cc4e" d="M323.5 616.5h4.3v4.3h-4.3zM299.5 620.5h4.3v4.3h-4.3zM311.5 624.5h4.3v4.3h-4.3zM303.5 632.5h4.3v4.3h-4.3z"/><path fill="#72cc4e" d="M327.5 616.5h4.3v4.3h-4.3zM295.5 640.5h4.3v4.3h-4.3z"/><path fill="#66c65a" d="M331.5 616.5h4.3v4.3h-4.3zM295.5 632.5h4.3v4.3h-4.3z"/><path fill="#54c066" d="M335.5 616.5h4.3v4.3h-4.3z"/><path fill="#3cba72" d="M339.5 616.5h4.3v4.3h-4.3zM307.5 636.5h4.3v4.3h-4.3z"/><path fill="#48c066" d="M295.5 620.5h4.3v4.3h-4.3z"/><path fill="#aed82a" d="M307.5 620.5h4.3v4.3h-4.3z"/><path fill="#84d242" d="M311.5 620.5h4.3v4.3h-4.3z"/><path fill="#42ba6c" d="M327.5 620.5h4.3v4.3h-4.3zM315.5 624.5h4.3v4.3h-4.3zM295.5 648.5h4.3v4.3h-4.3z"/><path fill="#8ad242" d="M303.5 628.5h4.3v4.3h-4.3z"/><path fill="#7ed248" d="M307.5 628.5h4.3v4.3h-4.3z"/><path fill="#54c060" d="M307.5 632.5h4.3v4.3h-4.3z"/><path fill="#a2d836" d="M299.5 636.5h4.3v4.3h-4.3z"/><path fill="#66cc54" d="M303.5 636.5h4.3v4.3h-4.3z"/></g>
<g filter="url(#bl05)">
<polygon points="289.0,532.7 318.0,532.7 317.2,559.9 323.9,564.1 339.8,566.3 344.0,532.7 354.9,532.7 377.6,543.1 389.4,551.5 397.8,566.6 401.1,583.4 401.1,601.9 387.7,615.3 377.6,619.5 367.5,615.3 350.7,602.7 330.6,599.4 313.8,592.6 300.4,578.4 291.1,558.2" fill="#440154"/>
<polygon points="255.5,575.0 281.9,578.4 285.3,601.9 273.5,611.9 255.5,615.3" fill="#440154"/>
<polygon points="260.1,623.7 280.2,622.0 287.8,648.9 276.9,659.0 261.8,655.6" fill="#46105e"/>
<polygon points="305.4,657.3 327.2,655.6 329.8,669.9 312.1,671.6" fill="#46105e"/>
<polygon points="339.0,662.3 365.8,663.2 368.4,680.5 344.0,680.5" fill="#440154"/>
</g>
<g filter="url(#bl1)">
<polyline filter="url(#bl2)" points="266.8,553.2 286.9,566.6 303.7,585.1 328.9,605.2" fill="none" stroke="#35b779" stroke-width="16" stroke-linecap="round"/>
<polyline points="278.5,561.6 290.3,571.7 303.7,585.9 322.2,600.2" fill="none" stroke="#6ccd5a" stroke-width="5" stroke-linecap="round"/>
<polyline points="320.5,608.6 350.7,615.3 367.5,627.1 365.8,638.8" fill="none" stroke="#27a585" stroke-width="18" stroke-linecap="round" stroke-linejoin="round"/>
<polygon points="328.9,534.7 338.1,534.7 333.9,559.9 325.6,557.4" fill="#d8e21f"/>
<polyline points="298.7,648.9 306.2,622.9 328.9,617.8 344.0,615.3" fill="none" stroke="#a0da39" stroke-width="9" stroke-linejoin="miter"/>
<polyline points="300.4,645.5 306.7,623.7 328.9,618.7 339.0,616.1" fill="none" stroke="#f5e51e" stroke-width="4.5" stroke-linejoin="miter"/>
</g>
</g>
<rect x="280.2" y="557.8" width="98.8" height="98" fill="none" stroke="#ff0000" stroke-width="1.2"/>
<line x1="329.4" y1="568.3" x2="329.4" y2="599.4" stroke="#ff0000" stroke-width="1.3"/>
<line x1="329.4" y1="613.6" x2="329.4" y2="643.8" stroke="#ff0000" stroke-width="1.3"/>
<line x1="292" y1="606.4" x2="321.4" y2="606.4" stroke="#ff0000" stroke-width="1.3"/>
<line x1="336.5" y1="606.4" x2="366.7" y2="606.4" stroke="#ff0000" stroke-width="1.3"/>
<text xml:space="preserve" x="329.10" y="547.50" font-family="'Liberation Sans', sans-serif" font-size="10.6" fill="#ff0000" text-anchor="middle" textLength="7.93" lengthAdjust="spacingAndGlyphs">N</text>
<text xml:space="preserve" x="265.50" y="611.00" font-family="'Liberation Sans', sans-serif" font-size="10.6" fill="#ff0000" text-anchor="middle" textLength="6.70" lengthAdjust="spacingAndGlyphs">E</text>
<line x1="264.2" y1="680.5" x2="264.2" y2="684.0" stroke="#333" stroke-width="0.8"/>
<text xml:space="preserve" x="264.16" y="695.50" font-family="'Liberation Sans', sans-serif" font-size="10.6" fill="#000" text-anchor="middle" textLength="15.63" lengthAdjust="spacingAndGlyphs">−4</text>
<line x1="252.0" y1="671.8" x2="255.5" y2="671.8" stroke="#333" stroke-width="0.8"/>
<text xml:space="preserve" x="249.50" y="675.64" font-family="'Liberation Sans', sans-serif" font-size="10.6" fill="#000" text-anchor="end" textLength="15.63" lengthAdjust="spacingAndGlyphs">−4</text>
<line x1="296.8" y1="680.5" x2="296.8" y2="684.0" stroke="#333" stroke-width="0.8"/>
<text xml:space="preserve" x="296.83" y="695.50" font-family="'Liberation Sans', sans-serif" font-size="10.6" fill="#000" text-anchor="middle" textLength="15.63" lengthAdjust="spacingAndGlyphs">−2</text>
<line x1="252.0" y1="639.2" x2="255.5" y2="639.2" stroke="#333" stroke-width="0.8"/>
<text xml:space="preserve" x="249.50" y="642.97" font-family="'Liberation Sans', sans-serif" font-size="10.6" fill="#000" text-anchor="end" textLength="15.63" lengthAdjust="spacingAndGlyphs">−2</text>
<line x1="329.5" y1="680.5" x2="329.5" y2="684.0" stroke="#333" stroke-width="0.8"/>
<text xml:space="preserve" x="329.50" y="695.50" font-family="'Liberation Sans', sans-serif" font-size="10.6" fill="#000" text-anchor="middle" textLength="6.74" lengthAdjust="spacingAndGlyphs">0</text>
<line x1="252.0" y1="606.5" x2="255.5" y2="606.5" stroke="#333" stroke-width="0.8"/>
<text xml:space="preserve" x="249.50" y="610.30" font-family="'Liberation Sans', sans-serif" font-size="10.6" fill="#000" text-anchor="end" textLength="6.74" lengthAdjust="spacingAndGlyphs">0</text>
<line x1="362.2" y1="680.5" x2="362.2" y2="684.0" stroke="#333" stroke-width="0.8"/>
<text xml:space="preserve" x="362.17" y="695.50" font-family="'Liberation Sans', sans-serif" font-size="10.6" fill="#000" text-anchor="middle" textLength="6.74" lengthAdjust="spacingAndGlyphs">2</text>
<line x1="252.0" y1="573.8" x2="255.5" y2="573.8" stroke="#333" stroke-width="0.8"/>
<text xml:space="preserve" x="249.50" y="577.63" font-family="'Liberation Sans', sans-serif" font-size="10.6" fill="#000" text-anchor="end" textLength="6.74" lengthAdjust="spacingAndGlyphs">2</text>
<line x1="394.8" y1="680.5" x2="394.8" y2="684.0" stroke="#333" stroke-width="0.8"/>
<text xml:space="preserve" x="394.84" y="695.50" font-family="'Liberation Sans', sans-serif" font-size="10.6" fill="#000" text-anchor="middle" textLength="6.74" lengthAdjust="spacingAndGlyphs">4</text>
<line x1="252.0" y1="541.2" x2="255.5" y2="541.2" stroke="#333" stroke-width="0.8"/>
<text xml:space="preserve" x="249.50" y="544.96" font-family="'Liberation Sans', sans-serif" font-size="10.6" fill="#000" text-anchor="end" textLength="6.74" lengthAdjust="spacingAndGlyphs">4</text>
<rect x="255.5" y="532.5" width="148.0" height="148.0" fill="none" stroke="#222" stroke-width="1"/>
<text xml:space="preserve" x="329.50" y="525.00" font-family="'Liberation Sans', sans-serif" font-size="12.4" fill="#000" text-anchor="middle" textLength="78.96" lengthAdjust="spacingAndGlyphs">Lineflux Map</text>
<text xml:space="preserve" x="329.50" y="707.00" font-family="'Liberation Sans', sans-serif" font-size="10.6" fill="#000" text-anchor="middle" textLength="99.73" lengthAdjust="spacingAndGlyphs">s/b: 0.43 +/- 0.125</text>
<g clip-path="url(#ch)">
<rect x="440.5" y="532.5" width="148" height="148" fill="#f7f7f7" filter="url(#nzc)"/>
<circle cx="523.5" cy="596.5" r="27.5" fill="url(#blob2)"/>
<ellipse cx="589" cy="625" rx="11" ry="15" fill="url(#blobg)"/>
</g>
<ellipse cx="524.5" cy="597" rx="35.8" ry="33.6" fill="none" stroke="#f3c910" stroke-width="1.5"/>
<rect x="517.5" y="591.3" width="12.3" height="13" fill="none" stroke="#0000ff" stroke-width="1.3"/>
<rect x="465.3" y="557.7" width="98.2" height="98.6" fill="none" stroke="#ff0000" stroke-width="1.2"/>
<line x1="514.3" y1="569.7" x2="514.3" y2="599.7" stroke="#ff0000" stroke-width="1.3"/>
<line x1="514.3" y1="612.4" x2="514.3" y2="643.6" stroke="#ff0000" stroke-width="1.3"/>
<line x1="477.4" y1="606.2" x2="508.5" y2="606.2" stroke="#ff0000" stroke-width="1.3"/>
<line x1="522.4" y1="606.2" x2="552" y2="606.2" stroke="#ff0000" stroke-width="1.3"/>
<text xml:space="preserve" x="514.30" y="547.50" font-family="'Liberation Sans', sans-serif" font-size="10.6" fill="#ff0000" text-anchor="middle" textLength="7.93" lengthAdjust="spacingAndGlyphs">N</text>
<text xml:space="preserve" x="450.50" y="611.00" font-family="'Liberation Sans', sans-serif" font-size="10.6" fill="#ff0000" text-anchor="middle" textLength="6.70" lengthAdjust="spacingAndGlyphs">E</text>
<line x1="449.2" y1="680.5" x2="449.2" y2="684.0" stroke="#333" stroke-width="0.8"/>
<text xml:space="preserve" x="449.16" y="695.50" font-family="'Liberation Sans', sans-serif" font-size="10.6" fill="#000" text-anchor="middle" textLength="15.63" lengthAdjust="spacingAndGlyphs">−4</text>
<line x1="437.0" y1="671.8" x2="440.5" y2="671.8" stroke="#333" stroke-width="0.8"/>
<text xml:space="preserve" x="434.50" y="675.64" font-family="'Liberation Sans', sans-serif" font-size="10.6" fill="#000" text-anchor="end" textLength="15.63" lengthAdjust="spacingAndGlyphs">−4</text>
<line x1="481.8" y1="680.5" x2="481.8" y2="684.0" stroke="#333" stroke-width="0.8"/>
<text xml:space="preserve" x="481.83" y="695.50" font-family="'Liberation Sans', sans-serif" font-size="10.6" fill="#000" text-anchor="middle" textLength="15.63" lengthAdjust="spacingAndGlyphs">−2</text>
<line x1="437.0" y1="639.2" x2="440.5" y2="639.2" stroke="#333" stroke-width="0.8"/>
<text xml:space="preserve" x="434.50" y="642.97" font-family="'Liberation Sans', sans-serif" font-size="10.6" fill="#000" text-anchor="end" textLength="15.63" lengthAdjust="spacingAndGlyphs">−2</text>
<line x1="514.5" y1="680.5" x2="514.5" y2="684.0" stroke="#333" stroke-width="0.8"/>
<text xml:space="preserve" x="514.50" y="695.50" font-family="'Liberation Sans', sans-serif" font-size="10.6" fill="#000" text-anchor="middle" textLength="6.74" lengthAdjust="spacingAndGlyphs">0</text>
<line x1="437.0" y1="606.5" x2="440.5" y2="606.5" stroke="#333" stroke-width="0.8"/>
<text xml:space="preserve" x="434.50" y="610.30" font-family="'Liberation Sans', sans-serif" font-size="10.6" fill="#000" text-anchor="end" textLength="6.74" lengthAdjust="spacingAndGlyphs">0</text>
<line x1="547.2" y1="680.5" x2="547.2" y2="684.0" stroke="#333" stroke-width="0.8"/>
<text xml:space="preserve" x="547.17" y="695.50" font-family="'Liberation Sans', sans-serif" font-size="10.6" fill="#000" text-anchor="middle" textLength="6.74" lengthAdjust="spacingAndGlyphs">2</text>
<line x1="437.0" y1="573.8" x2="440.5" y2="573.8" stroke="#333" stroke-width="0.8"/>
<text xml:space="preserve" x="434.50" y="577.63" font-family="'Liberation Sans', sans-serif" font-size="10.6" fill="#000" text-anchor="end" textLength="6.74" lengthAdjust="spacingAndGlyphs">2</text>
<line x1="579.8" y1="680.5" x2="579.8" y2="684.0" stroke="#333" stroke-width="0.8"/>
<text xml:space="preserve" x="579.84" y="695.50" font-family="'Liberation Sans', sans-serif" font-size="10.6" fill="#000" text-anchor="middle" textLength="6.74" lengthAdjust="spacingAndGlyphs">4</text>
<line x1="437.0" y1="541.2" x2="440.5" y2="541.2" stroke="#333" stroke-width="0.8"/>
<text xml:space="preserve" x="434.50" y="544.96" font-family="'Liberation Sans', sans-serif" font-size="10.6" fill="#000" text-anchor="end" textLength="6.74" lengthAdjust="spacingAndGlyphs">4</text>
<rect x="440.5" y="532.5" width="148.0" height="148.0" fill="none" stroke="#222" stroke-width="1"/>
<text xml:space="preserve" x="514.50" y="525.00" font-family="'Liberation Sans', sans-serif" font-size="12.4" fill="#000" text-anchor="middle" textLength="72.18" lengthAdjust="spacingAndGlyphs">HSC(26.2) r</text>
<text xml:space="preserve" x="514.50" y="707.00" font-family="'Liberation Sans', sans-serif" font-size="10.6" fill="#000" text-anchor="middle" textLength="117.76" lengthAdjust="spacingAndGlyphs">m:19.1  re:2.1"  s:0.8"</text>
<text xml:space="preserve" x="514.50" y="719.50" font-family="'Liberation Sans', sans-serif" font-size="10.6" fill="#000" text-anchor="middle" textLength="105.07" lengthAdjust="spacingAndGlyphs">EWr: 1, PLAE: 0.081</text>
<text xml:space="preserve" x="70.00" y="785.80" font-family="'Liberation Mono', monospace" font-size="13.05" fill="#000" textLength="78.57" lengthAdjust="spacingAndGlyphs">Separation</text>
<text xml:space="preserve" x="70.00" y="800.40" font-family="'Liberation Mono', monospace" font-size="13.05" fill="#000" textLength="86.42" lengthAdjust="spacingAndGlyphs">Match score</text>
<text xml:space="preserve" x="70.00" y="815.00" font-family="'Liberation Mono', monospace" font-size="13.05" fill="#000" textLength="55.00" lengthAdjust="spacingAndGlyphs">RA, Dec</text>
<text xml:space="preserve" x="70.00" y="829.60" font-family="'Liberation Mono', monospace" font-size="13.05" fill="#000" textLength="47.14" lengthAdjust="spacingAndGlyphs">Spec z</text>
<text xml:space="preserve" x="70.00" y="844.20" font-family="'Liberation Mono', monospace" font-size="13.05" fill="#000" textLength="55.00" lengthAdjust="spacingAndGlyphs">Photo z</text>
<text xml:space="preserve" x="70.00" y="858.80" font-family="'Liberation Mono', monospace" font-size="13.05" fill="#000" textLength="117.85" lengthAdjust="spacingAndGlyphs">Est LyA rest-EW</text>
<text xml:space="preserve" x="70.00" y="873.40" font-family="'Liberation Mono', monospace" font-size="13.05" fill="#000" textLength="23.57" lengthAdjust="spacingAndGlyphs">mag</text>
<text xml:space="preserve" x="70.00" y="888.00" font-family="'Liberation Mono', monospace" font-size="13.05" fill="#000" textLength="102.14" lengthAdjust="spacingAndGlyphs">P(LAE)/P(OII)</text>
<text xml:space="preserve" x="287.00" y="778.20" font-family="'Liberation Mono', monospace" font-size="13.05" fill="#0000ff" textLength="70.71" lengthAdjust="spacingAndGlyphs">0.778553"</text>
<text xml:space="preserve" x="287.00" y="792.80" font-family="'Liberation Mono', monospace" font-size="13.05" fill="#0000ff" textLength="39.28" lengthAdjust="spacingAndGlyphs">1.000</text>
<text xml:space="preserve" x="287.00" y="807.70" font-family="'Liberation Mono', monospace" font-size="13.05" fill="#0000ff" textLength="164.99" lengthAdjust="spacingAndGlyphs">226.961311, 50.695842</text>
<text xml:space="preserve" x="287.00" y="822.30" font-family="'Liberation Mono', monospace" font-size="13.05" fill="#0000ff" textLength="23.57" lengthAdjust="spacingAndGlyphs">N/A</text>
<text xml:space="preserve" x="287.00" y="837.00" font-family="'Liberation Mono', monospace" font-size="13.05" fill="#0000ff" textLength="23.57" lengthAdjust="spacingAndGlyphs">N/A</text>
<text xml:space="preserve" x="287.00" y="853.70" font-family="'Liberation Mono', monospace" font-size="13.05" fill="#0000ff" textLength="39.28" lengthAdjust="spacingAndGlyphs">0.72(</text>
<text xml:space="preserve" x="326.28" y="853.70" font-family="'Liberation Sans', sans-serif" font-size="13.05" fill="#0000ff" textLength="10.93" lengthAdjust="spacingAndGlyphs">±</text>
<text xml:space="preserve" x="337.22" y="853.70" font-family="'Liberation Mono', monospace" font-size="13.05" fill="#0000ff" textLength="39.28" lengthAdjust="spacingAndGlyphs">0.23)</text>
<text xml:space="preserve" x="376.50" y="853.70" font-family="'Liberation Sans', sans-serif" font-size="13.05" fill="#0000ff" textLength="8.93" lengthAdjust="spacingAndGlyphs" font-style="italic">Å</text>
<text xml:space="preserve" x="287.00" y="869.00" font-family="'Liberation Mono', monospace" font-size="13.05" fill="#0000ff" textLength="149.28" lengthAdjust="spacingAndGlyphs">19.22(19.22,19.22)R</text>
<text xml:space="preserve" x="287.00" y="884.50" font-family="'Liberation Sans', sans-serif" font-size="13.05" fill="#0000ff" textLength="37.36" lengthAdjust="spacingAndGlyphs">0.096</text>
<text xml:space="preserve" x="328.76" y="878.90" font-family="'Liberation Sans', sans-serif" font-size="9.135" fill="#0000ff" textLength="26.15" lengthAdjust="spacingAndGlyphs">0.174</text>
<text xml:space="preserve" x="328.76" y="888.40" font-family="'Liberation Sans', sans-serif" font-size="9.135" fill="#0000ff" textLength="26.15" lengthAdjust="spacingAndGlyphs">0.051</text>
<text xml:space="preserve" x="938.50" y="821.00" font-family="'Liberation Mono', monospace" font-size="13.05" fill="#000" textLength="204.27" lengthAdjust="spacingAndGlyphs">Phot z plot not available.</text>
</svg></body></html>
